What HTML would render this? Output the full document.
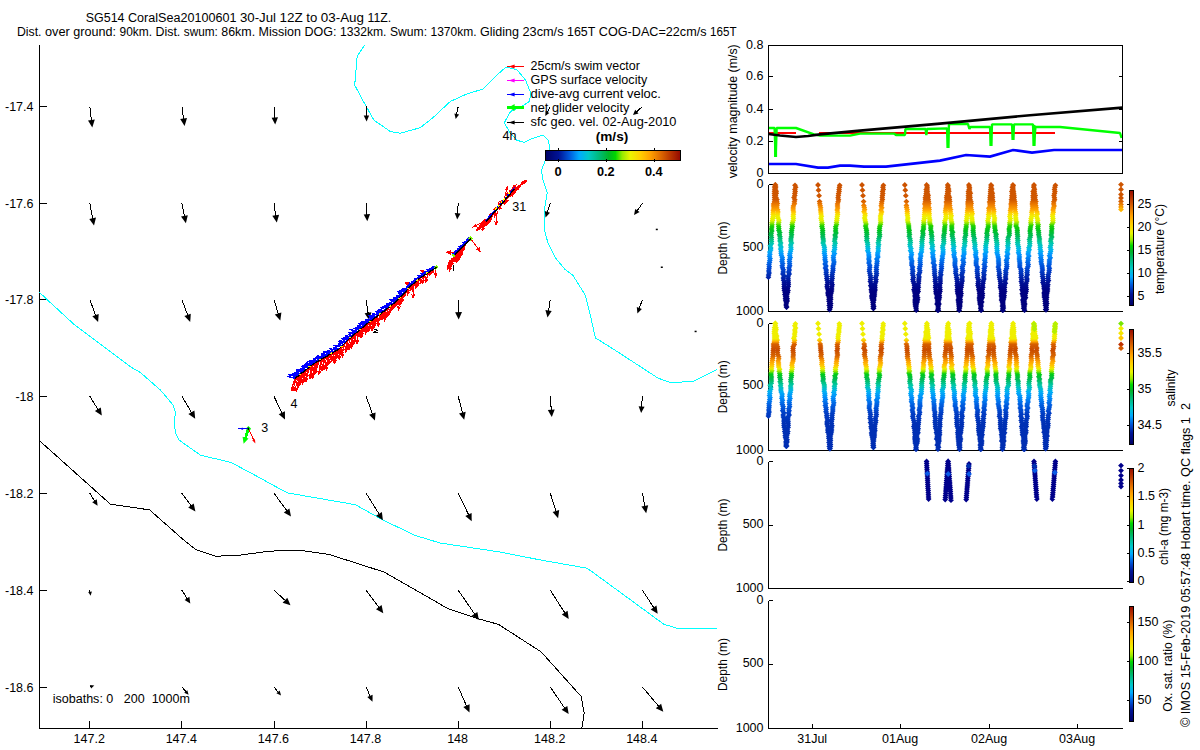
<!DOCTYPE html>
<html><head><meta charset="utf-8"><title>SG514 CoralSea20100601</title>
<style>html,body{margin:0;padding:0;background:#fff;overflow:hidden}svg{display:block;font-family:"Liberation Sans",sans-serif;font-size:12.5px;fill:#000}.ax{stroke:#000;stroke-width:1;shape-rendering:crispEdges;fill:none}.b{font-weight:bold}</style></head><body>
<svg width="1200" height="750" viewBox="0 0 1200 750">
<rect width="1200" height="750" fill="#fff"/>
<defs>
<linearGradient id="gh" x1="0" y1="0" x2="1" y2="0"><stop offset="0.0" stop-color="#000064"/><stop offset="0.1" stop-color="#001496"/><stop offset="0.18" stop-color="#005adc"/><stop offset="0.25" stop-color="#00aaff"/><stop offset="0.32" stop-color="#00c8c8"/><stop offset="0.4" stop-color="#00b978"/><stop offset="0.47" stop-color="#00b428"/><stop offset="0.52" stop-color="#00d700"/><stop offset="0.57" stop-color="#96eb00"/><stop offset="0.63" stop-color="#ebf500"/><stop offset="0.7" stop-color="#ffd200"/><stop offset="0.78" stop-color="#ffa000"/><stop offset="0.85" stop-color="#e16e00"/><stop offset="0.92" stop-color="#be3c00"/><stop offset="1.0" stop-color="#960a00"/></linearGradient>
<linearGradient id="gv" x1="0" y1="1" x2="0" y2="0"><stop offset="0.0" stop-color="#000064"/><stop offset="0.1" stop-color="#001496"/><stop offset="0.18" stop-color="#005adc"/><stop offset="0.25" stop-color="#00aaff"/><stop offset="0.32" stop-color="#00c8c8"/><stop offset="0.4" stop-color="#00b978"/><stop offset="0.47" stop-color="#00b428"/><stop offset="0.52" stop-color="#00d700"/><stop offset="0.57" stop-color="#96eb00"/><stop offset="0.63" stop-color="#ebf500"/><stop offset="0.7" stop-color="#ffd200"/><stop offset="0.78" stop-color="#ffa000"/><stop offset="0.85" stop-color="#e16e00"/><stop offset="0.92" stop-color="#be3c00"/><stop offset="1.0" stop-color="#960a00"/></linearGradient>
</defs>
<text x="85.8" y="22" textLength="38.7" lengthAdjust="spacingAndGlyphs">SG514</text>
<text x="128" y="22" textLength="108.5" lengthAdjust="spacingAndGlyphs">CoralSea20100601</text>
<text x="240" y="22" textLength="36" lengthAdjust="spacingAndGlyphs">30-Jul</text>
<text x="279.5" y="22" textLength="23.3" lengthAdjust="spacingAndGlyphs">12Z</text>
<text x="306.3" y="22" textLength="11" lengthAdjust="spacingAndGlyphs">to</text>
<text x="320.8" y="22" textLength="43.2" lengthAdjust="spacingAndGlyphs">03-Aug</text>
<text x="367.5" y="22" textLength="23.8" lengthAdjust="spacingAndGlyphs">11Z.</text>
<text x="17" y="36" textLength="24.5" lengthAdjust="spacingAndGlyphs">Dist.</text>
<text x="45" y="36" textLength="24.8" lengthAdjust="spacingAndGlyphs">over</text>
<text x="73.3" y="36" textLength="42.7" lengthAdjust="spacingAndGlyphs">ground:</text>
<text x="119.5" y="36" textLength="32.5" lengthAdjust="spacingAndGlyphs">90km.</text>
<text x="155.5" y="36" textLength="24.8" lengthAdjust="spacingAndGlyphs">Dist.</text>
<text x="183.8" y="36" textLength="34" lengthAdjust="spacingAndGlyphs">swum:</text>
<text x="221.3" y="36" textLength="33.8" lengthAdjust="spacingAndGlyphs">86km.</text>
<text x="258.6" y="36" textLength="42.4" lengthAdjust="spacingAndGlyphs">Mission</text>
<text x="304.5" y="36" textLength="32" lengthAdjust="spacingAndGlyphs">DOG:</text>
<text x="340" y="36" textLength="46.5" lengthAdjust="spacingAndGlyphs">1332km.</text>
<text x="390" y="36" textLength="37" lengthAdjust="spacingAndGlyphs">Swum:</text>
<text x="430.5" y="36" textLength="46" lengthAdjust="spacingAndGlyphs">1370km.</text>
<text x="480" y="36" textLength="39" lengthAdjust="spacingAndGlyphs">Gliding</text>
<text x="522.5" y="36" textLength="41" lengthAdjust="spacingAndGlyphs">23cm/s</text>
<text x="567" y="36" textLength="28.3" lengthAdjust="spacingAndGlyphs">165T</text>
<text x="598.8" y="36" textLength="107.7" lengthAdjust="spacingAndGlyphs">COG-DAC=22cm/s</text>
<text x="710" y="36" textLength="26.5" lengthAdjust="spacingAndGlyphs">165T</text>
<path class="ax" d="M39.5 45V728.5H717.5"/>
<path class="ax" d="M89.5 728.5v-7.5M181.5 728.5v-7.5M274.5 728.5v-7.5M366.5 728.5v-7.5M458.5 728.5v-7.5M550.5 728.5v-7.5M642.5 728.5v-7.5M39.5 106.5h7M39.5 203.5h7M39.5 299.5h7M39.5 396.5h7M39.5 493.5h7M39.5 590.5h7M39.5 687.5h7"/>
<text x="89.2" y="742.5" text-anchor="middle">147.2</text>
<text x="181.3" y="742.5" text-anchor="middle">147.4</text>
<text x="273.4" y="742.5" text-anchor="middle">147.6</text>
<text x="365.5" y="742.5" text-anchor="middle">147.8</text>
<text x="457.6" y="742.5" text-anchor="middle">148</text>
<text x="549.7" y="742.5" text-anchor="middle">148.2</text>
<text x="641.8" y="742.5" text-anchor="middle">148.4</text>
<text x="33.5" y="111" text-anchor="end">-17.4</text>
<text x="33.5" y="207.8" text-anchor="end">-17.6</text>
<text x="33.5" y="304.1" text-anchor="end">-17.8</text>
<text x="33.5" y="400.8" text-anchor="end">-18</text>
<text x="33.5" y="497.7" text-anchor="end">-18.2</text>
<text x="33.5" y="594.7" text-anchor="end">-18.4</text>
<text x="33.5" y="691.5" text-anchor="end">-18.6</text>
<polyline fill="none" stroke="#00ffff" stroke-width="1" shape-rendering="crispEdges" points="364.7,45 357.2,56.3 354.7,85.1 362.7,100.2 374,120.2 390.3,131.5 400.3,133.2 420.3,127.7 432.9,117.7 450.4,101.4 465.4,94.6 483,88.9 495.5,76.3 506,67.1 516.8,69.6 525.6,80.1 531.1,93.9 529.3,101.4 520.6,107.2 510.6,111.4 504.3,122.7 510,132.7 516.8,140.3 524.3,142.3 533.1,138.2 543.1,135.2 548.1,140.3 549.9,147.8 544.4,162.8 541.4,170.3 543.1,180.4 547.3,192.5 544,212.6 544,227.6 547.8,242.7 555.3,257.7 565.3,269.7 572.8,275.2 585.4,295.3 590.4,315.3 595.4,337.9 615.4,350.4 658,378.1 670.6,382.6 693.1,381.4 717,369.6"/>
<polyline fill="none" stroke="#00ffff" stroke-width="1" shape-rendering="crispEdges" points="39.5,292.3 46.4,299 75.2,325.4 105.3,347.9 131.6,367.5 140.4,372.5 160.4,390 173,405 175.4,412.6 174.2,422.7 175.4,432.7 179.2,440.2 200.5,455.2 230.6,462.3 250.6,472.8 275.7,486.6 287.6,492.9 355.3,504.7 383,520 414.8,535.3 440,543 454.7,545.2 501.3,552.2 540,559.9 587.2,568.2 617.9,590.6 663.9,624.3 679.3,628.9 717,628.9"/>
<polyline fill="none" stroke="#000" stroke-width="1" shape-rendering="crispEdges" points="39.5,440.7 110.3,504.1 149.6,509.9 183.7,540 196,549.8 215.7,556.2 238,555.4 269,551.2 298.3,550 329,554.4 384.2,572.1 448.6,609 478.3,618.8 498.3,624.3 541.2,651.9 581.1,696.4 584.2,713.3 581.7,728.5"/>
<rect x="655.8" y="228.7" width="2" height="1.5" fill="#000"/>
<rect x="660.8" y="266.5" width="2" height="1.5" fill="#000"/>
<rect x="694.6" y="330.7" width="2" height="1.5" fill="#000"/>
<g id="quiver"><path d="M89.8 106.5L91.5 121" stroke="#000" stroke-width="1" fill="none" shape-rendering="crispEdges"/><path d="M92.3 127.5L88 120.5L94.8 119.6Z" fill="#000" shape-rendering="auto"/><path d="M181.9 106.5L183.7 119.6" stroke="#000" stroke-width="1" fill="none" shape-rendering="crispEdges"/><path d="M184.6 126L180.2 119.1L187 118.1Z" fill="#000" shape-rendering="auto"/><path d="M274 106.5L274.8 118.6" stroke="#000" stroke-width="1" fill="none" shape-rendering="crispEdges"/><path d="M275.2 124.5L271.6 117.8L278 117.3Z" fill="#000" shape-rendering="auto"/><path d="M366.1 106.5L366.4 116.5" stroke="#000" stroke-width="1" fill="none" shape-rendering="crispEdges"/><path d="M366.6 121.5L363.7 115.6L369.1 115.5Z" fill="#000" shape-rendering="auto"/><path d="M458.2 106.5L456.5 114.9" stroke="#000" stroke-width="1" fill="none" shape-rendering="crispEdges"/><path d="M455.7 119L454.4 113.4L459.1 114.4Z" fill="#000" shape-rendering="auto"/><path d="M550.3 106.5L546.9 112.9" stroke="#000" stroke-width="1" fill="none" shape-rendering="crispEdges"/><path d="M545.3 116.1L545.5 111.1L549.3 113Z" fill="#000" shape-rendering="auto"/><path d="M642.4 106.5L636.1 112.3" stroke="#000" stroke-width="1" fill="none" shape-rendering="crispEdges"/><path d="M633 115.1L635.2 109.8L638.5 113.4Z" fill="#000" shape-rendering="auto"/><path d="M89.8 203.3L92.8 219.2" stroke="#000" stroke-width="1" fill="none" shape-rendering="crispEdges"/><path d="M94 225.6L89.3 218.9L96 217.6Z" fill="#000" shape-rendering="auto"/><path d="M181.9 203.3L184.6 216.9" stroke="#000" stroke-width="1" fill="none" shape-rendering="crispEdges"/><path d="M185.9 223.3L181 216.6L187.8 215.3Z" fill="#000" shape-rendering="auto"/><path d="M274 203.3L275.8 216.2" stroke="#000" stroke-width="1" fill="none" shape-rendering="crispEdges"/><path d="M276.8 222.6L272.3 215.7L279.1 214.8Z" fill="#000" shape-rendering="auto"/><path d="M366.1 203.3L366.9 215.4" stroke="#000" stroke-width="1" fill="none" shape-rendering="crispEdges"/><path d="M367.3 221.3L363.7 214.6L370.1 214.1Z" fill="#000" shape-rendering="auto"/><path d="M458.2 203.3L457.5 214.2" stroke="#000" stroke-width="1" fill="none" shape-rendering="crispEdges"/><path d="M457.2 219.6L454.7 213L460.5 213.4Z" fill="#000" shape-rendering="auto"/><path d="M550.3 203.3L547.1 212.9" stroke="#000" stroke-width="1" fill="none" shape-rendering="crispEdges"/><path d="M545.5 217.6L544.8 211.1L550 212.8Z" fill="#000" shape-rendering="auto"/><path d="M642.4 203.3L636.8 211.2" stroke="#000" stroke-width="1" fill="none" shape-rendering="crispEdges"/><path d="M634.1 215.1L635.2 208.9L639.6 211.9Z" fill="#000" shape-rendering="auto"/><path d="M89.8 299.6L95.9 316" stroke="#000" stroke-width="1" fill="none" shape-rendering="crispEdges"/><path d="M98.1 322.1L92.3 316.3L98.7 313.9Z" fill="#000" shape-rendering="auto"/><path d="M181.9 299.6L187.9 315.8" stroke="#000" stroke-width="1" fill="none" shape-rendering="crispEdges"/><path d="M190.2 321.9L184.4 316.1L190.8 313.7Z" fill="#000" shape-rendering="auto"/><path d="M274 299.6L278.4 314.4" stroke="#000" stroke-width="1" fill="none" shape-rendering="crispEdges"/><path d="M280.3 320.6L274.8 314.4L281.4 312.4Z" fill="#000" shape-rendering="auto"/><path d="M366.1 299.6L368.2 313.7" stroke="#000" stroke-width="1" fill="none" shape-rendering="crispEdges"/><path d="M369.1 320.1L364.6 313.2L371.4 312.2Z" fill="#000" shape-rendering="auto"/><path d="M458.2 299.6L458.5 313.1" stroke="#000" stroke-width="1" fill="none" shape-rendering="crispEdges"/><path d="M458.7 319.6L455.1 312.2L462 312Z" fill="#000" shape-rendering="auto"/><path d="M550.3 299.6L548.4 311.5" stroke="#000" stroke-width="1" fill="none" shape-rendering="crispEdges"/><path d="M547.5 317.4L545.4 310L551.7 311Z" fill="#000" shape-rendering="auto"/><path d="M642.4 299.6L639 309" stroke="#000" stroke-width="1" fill="none" shape-rendering="crispEdges"/><path d="M637.4 313.6L636.8 307.1L641.9 309Z" fill="#000" shape-rendering="auto"/><path d="M89.8 396.3L98.4 410.1" stroke="#000" stroke-width="1" fill="none" shape-rendering="crispEdges"/><path d="M101.8 415.6L94.9 411.1L100.8 407.4Z" fill="#000" shape-rendering="auto"/><path d="M181.9 396.3L191.9 413.2" stroke="#000" stroke-width="1" fill="none" shape-rendering="crispEdges"/><path d="M195.2 418.8L188.4 414.1L194.4 410.6Z" fill="#000" shape-rendering="auto"/><path d="M274 396.3L282.2 413.7" stroke="#000" stroke-width="1" fill="none" shape-rendering="crispEdges"/><path d="M285 419.6L278.7 414.3L284.9 411.3Z" fill="#000" shape-rendering="auto"/><path d="M366.1 396.3L372.7 414.5" stroke="#000" stroke-width="1" fill="none" shape-rendering="crispEdges"/><path d="M374.9 420.6L369.1 414.7L375.6 412.4Z" fill="#000" shape-rendering="auto"/><path d="M458.2 396.3L462.6 413.5" stroke="#000" stroke-width="1" fill="none" shape-rendering="crispEdges"/><path d="M464.2 419.8L459 413.4L465.7 411.7Z" fill="#000" shape-rendering="auto"/><path d="M550.3 396.3L551.3 410.6" stroke="#000" stroke-width="1" fill="none" shape-rendering="crispEdges"/><path d="M551.8 417.1L547.8 409.9L554.7 409.4Z" fill="#000" shape-rendering="auto"/><path d="M642.4 396.3L641.5 407.6" stroke="#000" stroke-width="1" fill="none" shape-rendering="crispEdges"/><path d="M641.1 413.1L638.6 406.3L644.6 406.8Z" fill="#000" shape-rendering="auto"/><path d="M89.8 493.2L95 501.6" stroke="#000" stroke-width="1" fill="none" shape-rendering="crispEdges"/><path d="M97.6 505.7L92.2 502.2L96.8 499.3Z" fill="#000" shape-rendering="auto"/><path d="M181.9 493.2L191.5 506.3" stroke="#000" stroke-width="1" fill="none" shape-rendering="crispEdges"/><path d="M195.4 511.5L188.2 507.5L193.7 503.4Z" fill="#000" shape-rendering="auto"/><path d="M274 493.2L287.2 511.2" stroke="#000" stroke-width="1" fill="none" shape-rendering="crispEdges"/><path d="M291 516.5L283.8 512.5L289.4 508.4Z" fill="#000" shape-rendering="auto"/><path d="M366.1 493.2L379.5 514.7" stroke="#000" stroke-width="1" fill="none" shape-rendering="crispEdges"/><path d="M382.9 520.2L376 515.7L381.9 512Z" fill="#000" shape-rendering="auto"/><path d="M458.2 493.2L468.9 515.3" stroke="#000" stroke-width="1" fill="none" shape-rendering="crispEdges"/><path d="M471.7 521.2L465.3 515.9L471.6 512.9Z" fill="#000" shape-rendering="auto"/><path d="M550.3 493.2L556.2 512" stroke="#000" stroke-width="1" fill="none" shape-rendering="crispEdges"/><path d="M558.1 518.2L552.6 512.1L559.2 510Z" fill="#000" shape-rendering="auto"/><path d="M642.4 493.2L645 506.8" stroke="#000" stroke-width="1" fill="none" shape-rendering="crispEdges"/><path d="M646.2 513.2L641.4 506.5L648.2 505.2Z" fill="#000" shape-rendering="auto"/><path d="M89.8 590.2L90.2 592.8" stroke="#000" stroke-width="1" fill="none" shape-rendering="crispEdges"/><path d="M90.6 595.8L88.2 592.1L91.9 591.6Z" fill="#000" shape-rendering="auto"/><path d="M181.9 590.2L187.5 599.2" stroke="#000" stroke-width="1" fill="none" shape-rendering="crispEdges"/><path d="M190.3 603.6L184.6 599.9L189.4 596.8Z" fill="#000" shape-rendering="auto"/><path d="M274 590.2L285.7 600.9" stroke="#000" stroke-width="1" fill="none" shape-rendering="crispEdges"/><path d="M290.5 605.3L282.6 602.8L287.3 597.7Z" fill="#000" shape-rendering="auto"/><path d="M366.1 590.2L379.4 608" stroke="#000" stroke-width="1" fill="none" shape-rendering="crispEdges"/><path d="M383.3 613.2L376 609.3L381.6 605.1Z" fill="#000" shape-rendering="auto"/><path d="M458.2 590.2L475.1 614.7" stroke="#000" stroke-width="1" fill="none" shape-rendering="crispEdges"/><path d="M478.8 620L471.7 615.8L477.4 611.9Z" fill="#000" shape-rendering="auto"/><path d="M550.3 590.2L565.2 613.5" stroke="#000" stroke-width="1" fill="none" shape-rendering="crispEdges"/><path d="M568.7 619L561.8 614.5L567.6 610.8Z" fill="#000" shape-rendering="auto"/><path d="M642.4 590.2L654.2 608.3" stroke="#000" stroke-width="1" fill="none" shape-rendering="crispEdges"/><path d="M657.7 613.8L650.7 609.4L656.5 605.6Z" fill="#000" shape-rendering="auto"/><path d="M89.8 687L91.5 686.4" stroke="#000" stroke-width="1" fill="none" shape-rendering="crispEdges"/><path d="M94.3 685.5L91.1 688.6L89.9 685Z" fill="#000" shape-rendering="auto"/><path d="M181.9 687L186.4 692.2" stroke="#000" stroke-width="1" fill="none" shape-rendering="crispEdges"/><path d="M188.6 694.8L184.2 692.8L187.3 690.2Z" fill="#000" shape-rendering="auto"/><path d="M274 687L278.7 692.8" stroke="#000" stroke-width="1" fill="none" shape-rendering="crispEdges"/><path d="M281 695.6L276.4 693.3L279.7 690.6Z" fill="#000" shape-rendering="auto"/><path d="M366.1 687L370.4 696.8" stroke="#000" stroke-width="1" fill="none" shape-rendering="crispEdges"/><path d="M372.5 701.7L367.3 697.1L372.6 694.8Z" fill="#000" shape-rendering="auto"/><path d="M458.2 687L466.9 706.7" stroke="#000" stroke-width="1" fill="none" shape-rendering="crispEdges"/><path d="M469.5 712.6L463.3 707.1L469.6 704.3Z" fill="#000" shape-rendering="auto"/><path d="M550.3 687L565 708.6" stroke="#000" stroke-width="1" fill="none" shape-rendering="crispEdges"/><path d="M568.7 714L561.6 709.7L567.3 705.9Z" fill="#000" shape-rendering="auto"/><path d="M642.4 687L659.1 706.8" stroke="#000" stroke-width="1" fill="none" shape-rendering="crispEdges"/><path d="M663.3 711.8L655.8 708.3L661.1 703.8Z" fill="#000" shape-rendering="auto"/></g>
<g id="track" fill="none" stroke-linecap="butt" shape-rendering="crispEdges">
<path d="M294.7 378.7L291.3 390.4M291 386.9L291.3 390.4L293.5 387.7M295.8 377.8L293.1 390.5M292.5 387.1L293.1 390.5L295 387.6M296.9 377L292.6 389.9M292.4 386.5L292.6 389.9L294.9 387.3M298 376.1L295 390.8M294.3 387.4L295 390.8L296.9 387.9M299.1 375.2L296.7 390.5M295.9 387.1L296.7 390.5L298.5 387.5M300.2 374.4L298.9 385.6M298 382.2L298.9 385.6L300.6 382.5M301.3 373.5L297.4 385M297.2 381.6L297.4 385L299.6 382.4M302.4 372.6L298.6 386.2M298.2 382.8L298.6 386.2L300.7 383.5M303.5 371.8L300.8 383M300.3 379.6L300.8 383L302.8 380.2M304.6 370.9L302.4 383.8M301.6 380.4L302.4 383.8L304.2 380.9M305.7 370L302.7 382.4M302.2 379L302.7 382.4L304.7 379.6M306.8 369.2L303.2 382.7M302.7 379.3L303.2 382.7L305.2 380M307.9 368.3L305.8 380.6M305.1 377.2L305.8 380.6L307.6 377.6M309 367.4L305.9 381.8M305.3 378.4L305.9 381.8L307.9 379M310.1 366.5L305.8 380.6M305.5 377.1L305.8 380.6L308 377.9M311.2 365.7L309.6 378.1M308.7 374.8L309.6 378.1L311.3 375.1M312.3 364.8L309.7 377.9M309.1 374.5L309.7 377.9L311.6 375M313.4 364L310.5 377.9M309.9 374.5L310.5 377.9L312.4 375.1M314.6 363.3L312.3 378.7M311.5 375.4L312.3 378.7L314 375.8M315.8 362.6L312.6 376.6M312.1 373.2L312.6 376.6L314.6 373.7M317 361.8L313.2 373.4M312.9 369.9L313.2 373.4L315.4 370.8M318.2 361.1L314.2 373.3M314 369.8L314.2 373.3L316.5 370.6M319.4 360.4L315.3 373.5M315 370L315.3 373.5L317.5 370.8M320.7 359.7L318.9 374.6M318 371.3L318.9 374.6L320.5 371.6M321.9 359L318.6 374M318 370.6L318.6 374L320.6 371.2M323.1 358.3L319.2 370.4M319 366.9L319.2 370.4L321.4 367.7M324.3 357.6L321.8 369.8M321.1 366.4L321.8 369.8L323.7 367M325.5 356.9L322.3 370.5M321.8 367.1L322.3 370.5L324.3 367.7M326.7 356.2L324 370M323.3 366.6L324 370L325.9 367.1M327.9 355.5L326.4 370M325.4 366.7L326.4 370L328 367M329.1 354.8L326 367.6M325.5 364.2L326 367.6L328 364.8M330.3 354.1L326.1 365.4M326 362L326.1 365.4L328.5 362.9M331.6 353.4L328.2 364.7M327.9 361.2L328.2 364.7L330.4 362M332.8 352.7L328.9 363.2M328.8 359.8L328.9 363.2L331.2 360.7M334 352L331.7 361.3M331.2 357.9L331.7 361.3L333.8 358.5M335.2 351.3L332.2 360.5M331.9 357.1L332.2 360.5L334.4 357.9M336.4 350.6L333.7 361.8M333.2 358.4L333.7 361.8L335.7 359M337.6 349.9L334.5 359.9M334.2 356.4L334.5 359.9L336.7 357.2M338.8 349.2L334.7 362.9M334.4 359.5L334.7 362.9L336.8 360.2M339.8 348.2L337.3 356.9M337 353.4L337.3 356.9L339.5 354.1M340.8 347.2L339.3 359.5M338.4 356.2L339.3 359.5L341 356.5M341.8 346.2L338.1 359M337.7 355.5L338.1 359L340.2 356.3M342.8 345.2L339.6 355M339.4 351.5L339.6 355L341.8 352.3M343.8 344.2L342.3 357.2M341.4 353.9L342.3 357.2L343.9 354.1M344.7 343.3L341.3 354.6M341 351.2L341.3 354.6L343.4 351.9M345.7 342.3L341.6 352.3M341.6 348.9L341.6 352.3L344 349.8M346.7 341.3L345.6 352.2M344.6 348.9L345.6 352.2L347.2 349.2M347.7 340.3L346.6 350.8M345.6 347.5L346.6 350.8L348.2 347.8M348.7 339.3L345.1 348.9M345 345.5L345.1 348.9L347.5 346.4M349.7 338.3L348.2 349.5M347.4 346.1L348.2 349.5L349.9 346.5M350.8 337.4L346.9 349.6M346.6 346.1L346.9 349.6L349.1 346.9M351.9 336.5L350.1 347.7M349.3 344.3L350.1 347.7L351.9 344.7M352.9 335.6L349.8 348.5M349.3 345.1L349.8 348.5L351.8 345.7M354 334.7L351.1 348.4M350.5 345L351.1 348.4L353 345.6M355.1 333.8L351.3 343.2M351.3 339.7L351.3 343.2L353.7 340.7M356.1 332.9L352.4 346M352 342.5L352.4 346L354.5 343.2M357.2 332L354.1 343.5M353.7 340.1L354.1 343.5L356.2 340.8M358.3 331.1L357.2 343.2M356.2 339.9L357.2 343.2L358.8 340.1M359.3 330.2L356.5 343.5M355.9 340.1L356.5 343.5L358.5 340.6M360.4 329.3L357.2 336.7M357.3 333.3L357.2 336.7L359.7 334.3M361.5 328.4L358.3 336.6M358.3 333.2L358.3 336.6L360.7 334.1M362.6 327.5L359.7 336M359.5 332.5L359.7 336L361.9 333.4M363.6 326.6L361 338.1M360.4 334.7L361 338.1L363 335.2M364.7 325.7L362.4 331.3M362.4 327.9L362.4 331.3L364.8 328.9M365.8 324.8L361.8 335.5M361.7 332L361.8 335.5L364.1 332.9M366.8 323.9L365.2 333M364.5 329.6L365.2 333L367 330.1M368 323.1L365.7 333.7M365.1 330.3L365.7 333.7L367.7 330.8M369.1 322.2L365.9 329.5M366 326.1L365.9 329.5L368.4 327.1M370.2 321.4L368 331.8M367.4 328.5L368 331.8L370 329M371.4 320.6L369.3 329.4M368.8 326L369.3 329.4L371.3 326.5M372.5 319.8L369.9 328.7M369.6 325.3L369.9 328.7L372.1 326M373.6 318.9L371.9 330.1M371.1 326.8L371.9 330.1L373.6 327.2M374.7 318.1L372.5 329.7M371.9 326.3L372.5 329.7L374.4 326.8M375.9 317.3L372.3 325.6M372.3 322.2L372.3 325.6L374.7 323.2M377 316.4L373.2 326.3M373.2 322.8L373.2 326.3L375.6 323.8M378.1 315.6L374.6 325.8M374.4 322.3L374.6 325.8L376.9 323.2M379.3 314.8L378.1 326.6M377.1 323.3L378.1 326.6L379.7 323.5M380.4 314L377.7 322.6M377.4 319.2L377.7 322.6L379.9 320M381.5 313.1L378 321.4M378.1 318L378 321.4L380.5 319M382.6 312.2L379.2 319.8M379.3 316.4L379.2 319.8L381.7 317.4M383.7 311.4L381.4 319M381.1 315.5L381.4 319L383.6 316.3M384.8 310.5L382.8 318.6M382.3 315.2L382.8 318.6L384.8 315.8M385.9 309.6L384.6 321M383.6 317.6L384.6 321L386.2 317.9M387 308.8L382.7 318.7M382.8 315.3L382.7 318.7L385.1 316.3M388.1 307.9L385.3 318.8M384.8 315.4L385.3 318.8L387.4 316M389.2 307.1L385.3 318M385.2 314.5L385.3 318L387.6 315.4M390.3 306.2L386.2 311.1M387.2 307.8L386.2 311.1L389.2 309.5M391.4 305.3L387.2 316.4M387.1 312.9L387.2 316.4L389.6 313.9M392.5 304.5L388.3 315M388.3 311.5L388.3 315L390.7 312.5M393.6 303.6L390.9 310.5M390.9 307L390.9 310.5L393.3 308M394.7 302.7L391.3 308.1M391.9 304.7L391.3 308.1L394.1 306.1M395.8 301.9L391.8 307.5M392.6 304.1L391.8 307.5L394.7 305.7M396.9 301L393.7 307.6M393.9 304.2L393.7 307.6L396.2 305.3M397.9 300L395.4 305.8M395.5 302.3L395.4 305.8L397.9 303.4M398.9 299L395.4 303.6M396.3 300.3L395.4 303.6L398.3 301.8M399.8 298L396.1 305.8M396.3 302.3L396.1 305.8L398.6 303.5M400.7 296.9L399.5 304.4M398.7 301.1L399.5 304.4L401.3 301.5M401.7 295.9L398.8 303.9M398.6 300.5L398.8 303.9L401.1 301.4M402.6 294.9L399.5 305.2M399.2 301.7L399.5 305.2L401.7 302.5M403.6 293.8L400.7 300.8M400.7 297.3L400.7 300.8L403.1 298.3M404.5 292.8L400.3 302.5M400.4 299L400.3 302.5L402.8 300.1M405.5 291.8L401.3 302.1M401.3 298.7L401.3 302.1L403.7 299.7M406.4 290.7L403 296.9M403.4 293.5L403 296.9L405.7 294.7M407.3 289.7L403.5 297.3M403.8 293.9L403.5 297.3L406.1 295M408.3 288.6L407.6 295M406.7 291.7L407.6 295L409.3 291.9M409.2 287.6L404.9 292.6M406 289.3L404.9 292.6L408 291M410.2 286.6L406.8 292.6M407.2 289.2L406.8 292.6L409.5 290.4M411.2 285.6L405.2 289.9M407 287L405.2 289.9L408.5 289.1M412.2 284.7L406.5 287.3M408.8 284.8L406.5 287.3L409.9 287.2M413.3 283.8L410.5 290M410.6 286.5L410.5 290L413 287.6M414.4 282.9L412.3 291.5M411.8 288.1L412.3 291.5L414.3 288.7M415.4 281.9L414.8 285.5M413.9 283.2L414.8 285.5L416.5 283.6M416.5 281L410.7 289.4M411.5 286L410.7 289.4L413.6 287.5M417.5 280.1L415.6 288.3M415.1 284.9L415.6 288.3L417.6 285.5M418.6 279.2L415.4 287.5M415.3 284.1L415.4 287.5L417.7 285M419.7 278.3L416.9 287M416.6 283.6L416.9 287L419.1 284.4M420.8 277.5L416.1 280.2M418.2 277.5L416.1 280.2L419.5 279.7M422 276.7L416.6 285.1M417.2 281.7L416.6 285.1L419.4 283.1M423.2 276L420.6 283.2M420.4 279.8L420.6 283.2L422.9 280.7M424.3 275.2L422.7 283M422.1 279.6L422.7 283L424.7 280.1M425.5 274.5L423.1 277.4M423.6 274.8L423.1 277.4L425.6 276.5M426.7 273.7L421.1 278.1M422.8 275.1L421.1 278.1L424.4 277.1M427.9 273L425.9 282.3M425.3 278.9L425.9 282.3L427.9 279.4M429.1 272.2L425.7 279.5M425.8 276L425.7 279.5L428.2 277.1M430.2 271.4L427.8 274.5M428.2 271.8L427.8 274.5L430.3 273.5M431.4 270.7L429.5 275.3M429.4 272L429.5 275.3L431.8 273M432.6 269.9L426.9 274.3M428.7 271.3L426.9 274.3L430.2 273.4M433.8 269.2L431.5 273.7M431.7 270.4L431.5 273.7L434 271.6M434.9 268.4L431.5 271.8M432.7 268.8L431.5 271.8L434.5 270.7M436.1 267.7L435.5 276.7M434.4 273.4L435.5 276.7L437 273.6M414 287L413 298M411.8 293.9L413 298L415 294.2M411 284L405 283M408.9 282L405 283L408.3 285.2M426 272L421 270.5M424.5 269.9L421 270.5L423.5 272.9M400 299L398.5 310M397.5 305.8L398.5 310L400.6 306.3M454.7 254.7L449.8 270.5M449.5 267L449.8 270.5L452 267.8M455.3 254.1L447.5 269.6M447.8 266.1L447.5 269.6L450.1 267.3M456 253.4L447.8 265.9M448.5 262.5L447.8 265.9L450.7 263.9M456.6 252.8L452 265M451.9 261.5L452 265L454.3 262.5M457.2 252.2L449.7 267M450 263.5L449.7 267L452.3 264.7M457.9 251.5L449.3 263.4M450.1 260L449.3 263.4L452.2 261.5M458.5 250.9L450.7 261.6M451.5 258.2L450.7 261.6L453.6 259.8M459.2 250.2L450.7 263.7M451.3 260.3L450.7 263.7L453.5 261.6M459.8 249.6L456.1 262.6M455.7 259.2L456.1 262.6L458.2 259.9M460.4 249L454 259.6M454.5 256.2L454 259.6L456.8 257.6M461.1 248.3L454.7 259.1M455.2 255.7L454.7 259.1L457.4 257M461.7 247.7L454.1 261.2M454.5 257.8L454.1 261.2L456.8 259.1M462.3 247.1L455.5 256.5M456.4 253.1L455.5 256.5L458.5 254.6M463 246.4L456.9 260.6M457 257.1L456.9 260.6L459.3 258.1M463.6 245.8L458.9 259.5M458.7 256.1L458.9 259.5L461.2 256.9M464.2 245.2L460 252.7M460.5 249.3L460 252.7L462.7 250.5M464.9 244.5L460.9 256.1M460.7 252.7L460.9 256.1L463.2 253.5M465.5 243.9L462.5 251.7M462.4 248.3L462.5 251.7L464.9 249.2M466.2 243.2L460.1 255.3M460.4 251.8L460.1 255.3L462.7 253M466.8 242.6L462.6 251.4M462.8 248L462.6 251.4L465.1 249.1M470.7 238.7L480 251.3M476.3 249.1L480 251.3L479 247.1M455.5 252.7L447 252.4M451.1 250.8L447 252.4L450.9 254.2M457 253L448 251.5M451.4 250.7L448 251.5L450.9 253.3M486 222L482.4 225M483.7 222.2L482.4 225L485.4 224.2M486.5 221.4L476.3 230.6M477.8 227.5L476.3 230.6L479.5 229.4M487 220.8L482.1 228.5M482.8 225.1L482.1 228.5L484.9 226.5M487.6 220.2L478.4 229M479.8 225.8L478.4 229L481.6 227.7M488.1 219.6L482.9 224M484.5 220.9L482.9 224L486.2 222.9M488.6 219L483.5 225.1M484.6 221.8L483.5 225.1L486.6 223.5M489.1 218.4L482.3 230.3M482.7 226.9L482.3 230.3L485 228.2M489.7 217.8L479.6 225.8M481.2 222.8L479.6 225.8L482.9 224.9M490.2 217.2L488.7 221.6M488.4 218.5L488.7 221.6L490.8 219.3M490.7 216.5L482.5 226.6M483.5 223.3L482.5 226.6L485.5 224.9M491.2 215.9L482.9 221.8M484.8 218.9L482.9 221.8L486.3 221M491.7 215.3L488.9 223.3M488.7 219.9L488.9 223.3L491.2 220.7M492.3 214.7L486.3 225.7M486.7 222.3L486.3 225.7L488.9 223.5M492.8 214.1L483.1 223.8M484.4 220.7L483.1 223.8L486.3 222.5M493.3 213.5L488.8 216.3M490.8 213.5L488.8 216.3L492.2 215.7M493.8 212.9L489 220.9M489.6 217.5L489 220.9L491.8 218.9M494.4 212.3L487 223.7M487.6 220.3L487 223.7L489.8 221.7M494.9 211.7L489.6 221M490.1 217.6L489.6 221L492.3 218.8M495.4 211.1L490.4 218.1M491.2 214.7L490.4 218.1L493.3 216.3M495.9 210.5L494.7 215.2M494.2 212.1L494.7 215.2L496.7 212.7M496.4 209.9L494.6 216.6M494.2 213.2L494.6 216.6L496.7 213.9M497 209.3L489.6 216.7M490.9 213.6L489.6 216.7L492.8 215.4M497.5 208.7L493.8 211.4M495.2 208.7L493.8 211.4L496.8 210.8M498 208.1L501 208.5M499 209.5L501 208.5L499.4 207M498.5 207.5L493.7 209.4M496.1 207L493.7 209.4L497.1 209.4M499.1 206.9L500.5 207.7M499 208.3L500.5 207.7L500.3 206.1M499.6 206.2L497.8 206.5M498.7 205L497.8 206.5L499 207.6M500.1 205.6L498.7 202.8M500.7 203.9L498.7 202.8L498.4 205.1M500.6 205L499.6 207.3M499 205.4L499.6 207.3L501.4 206.5M501.1 204.4L506.4 201.7M504.1 204.3L506.4 201.7L502.9 202M501.7 203.8L505.3 200.9M503.9 203.6L505.3 200.9L502.3 201.6M502.2 203.2L499.3 205M500.4 202.8L499.3 205L501.7 205M502.7 202.6L508.3 200.1M505.9 202.6L508.3 200.1L504.9 200.2M503.2 202L499.6 201.9M501.8 200.7L499.6 201.9L501.7 203.3M503.8 201.4L505.6 203M503.6 203L505.6 203L505.3 201.1M504.3 200.8L502.9 200.9M503.6 199.5L502.9 200.9L503.9 202.1M504.8 200.2L513.7 193.8M511.9 196.7L513.7 193.8L510.3 194.6M505.3 199.6L507.3 193M507.6 196.5L507.3 193L505.1 195.7M505.8 199L510.3 193.1M509.4 196.4L510.3 193.1L507.3 194.8M506.4 198.4L512.1 189M511.5 192.4L512.1 189L509.3 191.1M506.9 197.8L515.8 189.6M514.3 192.8L515.8 189.6L512.5 190.8M507.4 197.2L512 189.2M511.5 192.6L512 189.2L509.3 191.3M507.9 196.5L516 185.4M515.2 188.8L516 185.4L513.1 187.3M508.5 195.9L515.2 185.7M514.5 189L515.2 185.7L512.4 187.6M509 195.3L514.2 191.7M512.3 194.6L514.2 191.7L510.9 192.4M509.5 194.7L516.1 191.2M513.9 193.9L516.1 191.2L512.7 191.6M510 194.1L514.4 186.1M514 189.6L514.4 186.1L511.8 188.3M510.5 193.5L514.2 188.5M513.4 191.8L514.2 188.5L511.3 190.3M511.1 192.9L520.1 186.6M518.2 189.5L520.1 186.6L516.7 187.4M511.6 192.3L514.7 187.8M514 191.1L514.7 187.8L511.8 189.7M512.1 191.7L518.3 188.9M515.9 191.4L518.3 188.9L514.8 189.1M512.6 191.1L514.1 185.2M514.6 188.7L514.1 185.2L512.1 188M513.2 190.5L515.7 186.6M515.3 189.6L515.7 186.6L513.1 188.2M513.7 189.9L523.9 181.6M522.2 184.6L523.9 181.6L520.6 182.6M514.2 189.3L523.9 182.7M521.9 185.5L523.9 182.7L520.5 183.4M497.3 210.7L496 225.3M494.7 221.2L496 225.3L498 221.5M512 192L526.7 180.3M524.5 184L526.7 180.3L522.6 181.6M488 220L473 227M475.9 223.9L473 227L477.3 226.8M503 203L507.5 187M507.9 190.2L507.5 187L505.4 189.5" stroke="#ff0000" stroke-width="1"/>
<path d="M294.7 378.7L289 376.6M291.4 376.4L289 376.6L290.7 378.3M295.8 377.8L288.3 376.6M290.6 376L288.3 376.6L290.3 378M296.9 377L289.4 374.9M291.8 374.6L289.4 374.9L291.3 376.5M298 376.1L290.7 374.3M293 373.9L290.7 374.3L292.6 375.8M299.1 375.2L293.1 373.8M295.5 373.4L293.1 373.8L295 375.3M300.2 374.4L295.1 372.7M297.5 372.4L295.1 372.7L296.9 374.4M301.3 373.5L294.5 372.9M296.8 372.1L294.5 372.9L296.6 374.1M302.4 372.6L296.6 371.2M299 370.7L296.6 371.2L298.5 372.7M303.5 371.8L296 370M298.3 369.5L296 370L297.9 371.4M304.6 370.9L297.8 369.9M300.2 369.2L297.8 369.9L299.9 371.2M305.7 370L300.4 369.2M302.7 368.6L300.4 369.2L302.4 370.5M306.8 369.2L300.7 368.7M302.9 367.9L300.7 368.7L302.8 369.9M307.9 368.3L303.1 366.3M305.5 366.2L303.1 366.3L304.8 368.1M309 367.4L301.7 366.2M304.1 365.6L301.7 366.2L303.7 367.5M310.1 366.5L304.7 365.5M307 364.9L304.7 365.5L306.6 366.9M311.2 365.7L305.6 364.7M307.9 364.1L305.6 364.7L307.5 366M312.3 364.8L307.1 364.5M309.3 363.6L307.1 364.5L309.2 365.6M313.4 364L305.9 363.2M308.2 362.4L305.9 363.2L307.9 364.4M314.6 363.3L309.4 361.6M311.8 361.3L309.4 361.6L311.2 363.2M315.8 362.6L308.2 361.3M310.5 360.7L308.2 361.3L310.2 362.6M317 361.8L309.5 361.2M311.8 360.4L309.5 361.2L311.6 362.4M318.2 361.1L311.7 360.7M314 359.8L311.7 360.7L313.8 361.8M319.4 360.4L313.4 360M315.7 359.2L313.4 360L315.5 361.2M320.7 359.7L313.8 358.4M316.1 357.8L313.8 358.4L315.7 359.8M321.9 359L317 357.1M319.4 357L317 357.1L318.7 358.9M323.1 358.3L316.1 357.1M318.4 356.5L316.1 357.1L318.1 358.5M324.3 357.6L316.6 356.3M318.9 355.7L316.6 356.3L318.6 357.6M325.5 356.9L320.7 356.1M323 355.5L320.7 356.1L322.7 357.5M326.7 356.2L321 354.1M323.4 354L321 354.1L322.8 355.8M327.9 355.5L322.8 354.9M325.1 354.2L322.8 354.9L324.9 356.2M329.1 354.8L321.7 353.9M324.1 353.2L321.7 353.9L323.8 355.2M330.3 354.1L323.3 352.3M325.7 351.9L323.3 352.3L325.1 353.8M331.6 353.4L323.9 351.5M326.2 351.1L323.9 351.5L325.8 353M332.8 352.7L325.8 352.3M328.1 351.4L325.8 352.3L328 353.4M334 352L327.7 350.5M330.1 350.1L327.7 350.5L329.6 352M335.2 351.3L330.7 351.1M333 350.2L330.7 351.1L332.9 352.2M336.4 350.6L329.7 348.6M332.1 348.3L329.7 348.6L331.5 350.2M337.6 349.9L333.1 348.1M335.5 348L333.1 348.1L334.7 349.8M338.8 349.2L333.4 347.3M335.8 347.1L333.4 347.3L335.1 349M339.8 348.2L334.4 348M336.6 347.1L334.4 348L336.5 349.1M340.8 347.2L334.6 345.8M336.9 345.3L334.6 345.8L336.5 347.2M341.8 346.2L336.4 345.6M338.7 344.9L336.4 345.6L338.4 346.8M342.8 345.2L338.2 345M340.4 344.1L338.2 345L340.3 346.1M343.8 344.2L339.2 343.5M341.5 342.9L339.2 343.5L341.2 344.9M344.7 343.3L338.8 341.1M341.2 340.9L338.8 341.1L340.5 342.8M345.7 342.3L339.5 341.5M341.8 340.7L339.5 341.5L341.6 342.7M346.7 341.3L342.5 341.1M344.8 340.2L342.5 341.1L344.7 342.2M347.7 340.3L341.4 338.5M343.8 338.2L341.4 338.5L343.2 340.1M348.7 339.3L343.6 338.9M345.8 338.1L343.6 338.9L345.7 340.1M349.7 338.3L344.7 337.7M347 337L344.7 337.7L346.7 339M350.8 337.4L346.5 336.8M348.8 336.1L346.5 336.8L348.6 338.1M351.9 336.5L345.4 335.9M347.7 335.1L345.4 335.9L347.5 337.1M352.9 335.6L348.8 334.2M351.3 334L348.8 334.2L350.6 335.9M354 334.7L349.2 332.9M351.6 332.7L349.2 332.9L350.9 334.6M355.1 333.8L350.8 333.2M353.1 332.5L350.8 333.2L352.8 334.5M356.1 332.9L352.1 332M354.4 331.5L352.1 332L354 333.5M357.2 332L350.6 329.8M353 329.6L350.6 329.8L352.4 331.5M358.3 331.1L352.9 330.8M355.1 329.9L352.9 330.8L355 331.9M359.3 330.2L354.8 328.4M357.2 328.3L354.8 328.4L356.5 330.2M360.4 329.3L354.1 328.3M356.5 327.6L354.1 328.3L356.1 329.6M361.5 328.4L354.9 328M357.1 327.2L354.9 328L357 329.1M362.6 327.5L357.3 327.1M359.6 326.3L357.3 327.1L359.4 328.3M363.6 326.6L358.1 325.5M360.5 324.9L358.1 325.5L360.1 326.9M364.7 325.7L359 323.9M361.4 323.6L359 323.9L360.8 325.5M365.8 324.8L359.3 323.5M361.6 323L359.3 323.5L361.3 324.9M366.8 323.9L360.8 322.7M363.2 322.2L360.8 322.7L362.8 324.1M368 323.1L361.3 322M363.6 321.4L361.3 322L363.3 323.3M369.1 322.2L364.4 321.1M366.8 320.6L364.4 321.1L366.3 322.6M370.2 321.4L366 320.1M368.4 319.8L366 320.1L367.8 321.7M371.4 320.6L365.9 319.8M368.2 319.1L365.9 319.8L367.9 321.1M372.5 319.8L366.9 319.4M369.2 318.6L366.9 319.4L369.1 320.6M373.6 318.9L369.4 317.2M371.9 317.1L369.4 317.2L371.1 319M374.7 318.1L370.3 316.2M372.7 316.1L370.3 316.2L371.9 318M375.9 317.3L369.1 315.5M371.5 315.1L369.1 315.5L371 317.1M377 316.4L372.4 316M374.6 315.2L372.4 316L374.5 317.2M378.1 315.6L373.1 313.7M375.5 313.5L373.1 313.7L374.8 315.4M379.3 314.8L372.9 314.5M375.2 313.6L372.9 314.5L375.1 315.6M380.4 314L376.4 313.4M378.7 312.7L376.4 313.4L378.4 314.7M381.5 313.1L376 311.6M378.4 311.2L376 311.6L377.9 313.1M382.6 312.2L377.8 310.1M380.2 310.1L377.8 310.1L379.4 311.9M383.7 311.4L378.3 309.5M380.7 309.3L378.3 309.5L380 311.2M384.8 310.5L379.5 310M381.8 309.2L379.5 310L381.6 311.2M385.9 309.6L380.7 307.7M383.1 307.5L380.7 307.7L382.4 309.4M387 308.8L382.3 306.5M384.7 306.6L382.3 306.5L383.9 308.4M388.1 307.9L385.1 305.9M387.4 306.3L385.1 305.9L386.3 308M389.2 307.1L385.4 306M387.8 305.6L385.4 306L387.3 307.5M390.3 306.2L386.9 304.5M389.3 304.6L386.9 304.5L388.4 306.4M391.4 305.3L387.8 304.4M390.2 304L387.8 304.4L389.7 305.9M392.5 304.5L387.2 303.7M389.5 303L387.2 303.7L389.2 305M393.6 303.6L389.8 302.9M392.1 302.3L389.8 302.9L391.8 304.3M394.7 302.7L390.8 300.7M393.2 300.8L390.8 300.7L392.3 302.6M395.8 301.9L390.5 299.8M392.9 299.6L390.5 299.8L392.1 301.5M396.9 301L393.7 299.1M396.1 299.3L393.7 299.1L395.1 301.1M397.9 300L393.5 297.6M395.9 297.8L393.5 297.6L394.9 299.5M398.9 299L395.6 297.6M397.9 297.5L395.6 297.6L397.1 299.4M399.8 298L397.1 295.7M399.4 296.3L397.1 295.7L398.1 297.8M400.7 296.9L396.7 296.1M399.1 295.6L396.7 296.1L398.7 297.5M401.7 295.9L398.2 295.4M400.5 294.7L398.2 295.4L400.2 296.7M402.6 294.9L399.2 293.6M401.6 293.4L399.2 293.6L400.9 295.3M403.6 293.8L398.2 291.6M400.7 291.5L398.2 291.6L399.9 293.4M404.5 292.8L399.8 290.6M402.2 290.6L399.8 290.6L401.4 292.4M405.5 291.8L402.6 290.6M404.7 290.4L402.6 290.6L403.9 292.2M406.4 290.7L401.8 289.1M404.2 288.9L401.8 289.1L403.5 290.8M407.3 289.7L402.6 289.1M404.9 288.4L402.6 289.1L404.7 290.4M408.3 288.6L405.6 288.1M407.4 287.4L405.6 288.1L407 289.4M409.2 287.6L406 286.1M408.4 286.1L406 286.1L407.5 287.9M410.2 286.6L407.4 285.3M409.5 285.2L407.4 285.3L408.6 287M411.2 285.6L408.1 284.1M410.4 284.1L408.1 284.1L409.5 285.9M412.2 284.7L409.6 283M411.7 283.2L409.6 283L410.6 284.8M413.3 283.8L411.6 282.7M413.1 282.5L411.6 282.7L412.1 284.2M414.4 282.9L411.9 281.3M413.9 281.4L411.9 281.3L412.8 283.1M415.4 281.9L413.7 280.9M415.2 280.7L413.7 280.9L414.2 282.4M416.5 281L415.1 279.9M416.5 279.8L415.1 279.9L415.3 281.4M417.5 280.1L414.6 278.9M416.8 278.7L414.6 278.9L416 280.5M418.6 279.2L417 278.4M418.4 278L417 278.4L417.5 279.8M419.7 278.3L417.8 277.3M419.4 277L417.8 277.3L418.5 278.8M420.8 277.5L417.9 276M420.1 276L417.9 276L419.2 277.8M422 276.7L419.9 275.6M421.6 275.4L419.9 275.6L420.7 277.2M423.2 276L420.9 273.9M423 274.4L420.9 273.9L421.6 275.9M424.3 275.2L422.1 274M424 273.9L422.1 274L423 275.6M425.5 274.5L423.8 272.8M425.5 273.1L423.8 272.8L424.1 274.5M426.7 273.7L425 271.9M426.7 272.3L425 271.9L425.3 273.7M427.9 273L425.7 271.5M427.5 271.5L425.7 271.5L426.4 273.2M429.1 272.2L427.4 271.1M428.9 270.9L427.4 271.1L427.8 272.6M430.2 271.4L427.3 269.8M429.6 269.9L427.3 269.8L428.6 271.6M431.4 270.7L429.3 268.6M431.3 269.2L429.3 268.6L429.9 270.6M432.6 269.9L430.7 268.9M432.3 268.7L430.7 268.9L431.4 270.4M433.8 269.2L431.6 267.8M433.4 267.8L431.6 267.8L432.4 269.5M434.9 268.4L433.5 266.6M435.2 267.1L433.5 266.6L433.6 268.3M436.1 267.7L433 266.3M435.3 266.2L433 266.3L434.5 268M454.7 254.7L453 253.5M454.4 253.6L453 253.5L453.6 254.7M455.3 254.1L453.4 253.1M454.8 253L453.4 253.1L454.2 254.3M456 253.4L454.8 252.1M456.1 252.4L454.8 252.1L455 253.3M456.6 252.8L455.4 252M456.5 251.9L455.4 252L455.7 253.1M457.2 252.2L455.6 250.7M457 251L455.6 250.7L456 252M457.9 251.5L456.2 250.3M457.6 250.5L456.2 250.3L456.8 251.6M458.5 250.9L456.7 250.2M458 250L456.7 250.2L457.6 251.3M459.2 250.2L457.9 248.9M459.2 249.2L457.9 248.9L458.1 250.2M459.8 249.6L458.6 248.4M459.8 248.6L458.6 248.4L458.8 249.6M460.4 249L459.3 248.1M460.4 248.1L459.3 248.1L459.5 249.1M461.1 248.3L459.2 246.9M460.6 247.1L459.2 246.9L459.7 248.2M461.7 247.7L459.9 247.1M461.2 246.8L459.9 247.1L460.8 248.1M462.3 247.1L460.7 245.8M462.1 246L460.7 245.8L461.2 247.1M463 246.4L461.8 245.7M462.8 245.5L461.8 245.7L462.1 246.8M463.6 245.8L462.5 244.8M463.6 244.9L462.5 244.8L462.7 246M464.2 245.2L462.9 244.1M464.1 244.2L462.9 244.1L463.3 245.3M464.9 244.5L463.1 243.1M464.4 243.3L463.1 243.1L463.6 244.4M465.5 243.9L463.9 242.7M465.3 242.8L463.9 242.7L464.5 244M466.2 243.2L465 242M466.2 242.3L465 242L465.2 243.2M466.8 242.6L465.2 241.5M466.6 241.6L465.2 241.5L465.8 242.7M467.4 242L465.5 241.4M466.9 241.1L465.5 241.4L466.5 242.4M468.1 241.3L466.9 240.8M467.9 240.5L466.9 240.8L467.3 241.8M468.7 240.7L466.8 239.3M468.2 239.4L466.8 239.3L467.3 240.6M469.3 240.1L467.5 238.8M468.9 238.9L467.5 238.8L468.1 240.1M470 239.4L468.6 238.3M469.9 238.4L468.6 238.3L469 239.5M470.6 238.8L468.9 237.6M470.3 237.7L468.9 237.6L469.5 238.9M485.2 221.2L486.2 220.1M486.2 220.2L486.2 220.1L486 220.1M486.2 220L487.2 218.9M487.2 219L487.2 218.9L487.1 218.9M487.3 218.8L488.3 217.6M488.3 217.8L488.3 217.6L488.1 217.7M488.3 217.6L489.3 216.4M489.3 216.6L489.3 216.4L489.2 216.4M489.4 216.4L490.4 215.2M490.4 215.4L490.4 215.2L490.2 215.2M490.4 215.1L491.4 214M491.4 214.1L491.4 214L491.3 214M491.5 213.9L492.4 212.8M492.5 212.9L492.4 212.8L492.3 212.8M492.5 212.7L493.5 211.6M493.5 211.7L493.5 211.6L493.3 211.6M493.6 211.5L494.5 210.4M494.5 210.5L494.5 210.4L494.4 210.4M494.6 210.3L495.6 209.2M495.6 209.3L495.6 209.2L495.4 209.2M495.6 209.1L496.6 207.9M496.6 208.1L496.6 207.9L496.5 208M496.7 207.9L497.7 206.7M497.7 206.9L497.7 206.7L497.5 206.7M497.7 206.7L498.7 205.5M498.7 205.7L498.7 205.5L498.6 205.5M498.8 205.4L499.8 204.3M499.8 204.5L499.8 204.3L499.6 204.3M499.8 204.2L500.8 203.1M500.8 203.2L500.8 203.1L500.7 203.1M500.9 203L501.8 201.9M501.9 202L501.8 201.9L501.7 201.9M501.9 201.8L502.9 200.7M502.9 200.8L502.9 200.7L502.8 200.7M503 200.6L503.9 199.5M503.9 199.6L503.9 199.5L503.8 199.5M504 199.4L505 198.2M505 198.4L505 198.2L504.8 198.3M505 198.2L506 197M506 197.2L506 197L505.9 197M506.1 197L507.1 195.8M507.1 196L507.1 195.8L506.9 195.8M507.1 195.7L508.1 194.6M508.1 194.8L508.1 194.6L508 194.6M508.2 194.5L509.2 193.4M509.2 193.5L509.2 193.4L509 193.4M509.2 193.3L510.2 192.2M510.2 192.3L510.2 192.2L510.1 192.2M510.3 192.1L511.2 191M511.3 191.1L511.2 191L511.1 191M511.3 190.9L512.3 189.8M512.3 189.9L512.3 189.8L512.2 189.8M512.4 189.7L513.3 188.6M513.3 188.7L513.3 188.6L513.2 188.6M513.4 188.5L514.4 187.3M514.4 187.5L514.4 187.3L514.2 187.4" stroke="#0000ff" stroke-width="1.1"/>
<path d="M434.5 268.5l3 -2.2M469 240l2.6 -2.6M452.8 256.3l1.5 -1.5" stroke="#7fff00" stroke-width="3"/>
<polyline fill="none" stroke="#000" stroke-width="1.3" shape-rendering="crispEdges" points="294.7,378.7 313.3,364 338.7,349.3 349.3,338.7 366.7,324 381,313.5 397.3,300.7 410.7,286 420,278 436.7,267.3"/>
<polyline fill="none" stroke="#000" stroke-width="1.3" shape-rendering="crispEdges" points="454.7,254.7 470.7,238.7"/>
<polyline fill="none" stroke="#000" stroke-width="1.3" shape-rendering="crispEdges" points="486,222 514.7,188.7"/>
<path d="M298.6 374.6l2.2 -0.6M308.5 366.8l2.2 -0.6M318.9 359.8l2.2 -0.6M329.8 353.5l2.2 -0.6M340.3 346.6l2.2 -0.6M349.2 337.7l2.2 -0.6M358.8 329.6l2.2 -0.6M368.6 321.6l2.2 -0.6M378.8 314.2l2.2 -0.6M388.7 306.5l2.2 -0.6M398.4 298.4l2.2 -0.6M406.8 289.1l2.2 -0.6M416 280.4l2.2 -0.6M426.2 273.1l2.2 -0.6M495.2 209.5l1.6 -1.8M497.9 206.5l1.6 -1.8M500.5 203.4l1.6 -1.8M503.1 200.4l1.6 -1.8M505.7 197.4l1.6 -1.8M508.3 194.3l1.6 -1.8" stroke="#ffff00" stroke-width="1.1"/>
<path d="M453.4 265.3v5.6" stroke="#000" stroke-width="1"/>
<path d="M373.6 329.6l2.6 0l0.8 0.8l-3.6 2.2h4.4" stroke="#000" stroke-width="1"/>
</g>
<g id="m3">
<path d="M248.4 428.8L245.2 438.7" stroke="#00ff00" stroke-width="2.6" fill="none" shape-rendering="crispEdges"/><path d="M243.6 443.8L242.6 436.8L248.5 438.6Z" fill="#00ff00" shape-rendering="auto"/>
<path d="M248.4 425.9l2.7 2.9l-2.7 2.9l-2.7 -2.9z" fill="#00ff00"/>
<path d="M248.4 428.8L254 440.5" stroke="#ff0000" stroke-width="1" fill="none" shape-rendering="crispEdges"/><path d="M255.4 443.4L252.2 440.3L254.9 439Z" fill="#ff0000" shape-rendering="auto"/>
<path d="M248.4 428.8L238.1 428.6" stroke="#0000ff" stroke-width="1.1" fill="none" shape-rendering="crispEdges"/><path d="M239 428.6L239.1 428.5L239.1 428.7Z" fill="#0000ff" shape-rendering="auto"/>
<path d="M240.6 428.7l1.6 -1.3l1.6 1.3l-1.6 1.3z" fill="#0000ff"/>
<rect x="247.7" y="427.6" width="1.4" height="2.4" fill="#000"/>
</g>
<text x="261.3" y="431.8">3</text>
<text x="290.5" y="408">4</text>
<text x="512.3" y="210.8">31</text>
<text x="502.6" y="139.8">4h</text>
<text x="52.7" y="702.5" textLength="137.3" lengthAdjust="spacingAndGlyphs" style="white-space:pre">isobaths: 0   200  1000m</text>
<path d="M507 66.5H523.8" stroke="#ff0000" stroke-width="1" shape-rendering="crispEdges"/>
<path d="M508.6 66.5L514.6 64.5L514.6 68.5Z" fill="#ff0000"/>
<text x="530.6" y="69.5" textLength="109.3" lengthAdjust="spacingAndGlyphs">25cm/s swim vector</text>
<path d="M507 80.5H523.8" stroke="#ff00ff" stroke-width="1" shape-rendering="crispEdges"/>
<path d="M508.6 80.5L514.6 78.5L514.6 82.5Z" fill="#ff00ff"/>
<text x="530.6" y="83.7" textLength="116.6" lengthAdjust="spacingAndGlyphs">GPS surface velocity</text>
<path d="M507 94.5H523.8" stroke="#0000ff" stroke-width="1" shape-rendering="crispEdges"/>
<path d="M508.6 94.5L514.6 92.5L514.6 96.5Z" fill="#0000ff"/>
<text x="530.6" y="97.5" textLength="130.2" lengthAdjust="spacingAndGlyphs">dive-avg current veloc.</text>
<path d="M507 107.5H523.8" stroke="#00ff00" stroke-width="3" shape-rendering="crispEdges"/>
<path d="M508.6 107.5L514.6 104.1L514.6 110.9Z" fill="#00ff00"/>
<text x="530.6" y="111.7" textLength="98.8" lengthAdjust="spacingAndGlyphs">net glider velocity</text>
<path d="M507 122.5H523.8" stroke="#000000" stroke-width="1" shape-rendering="crispEdges"/>
<path d="M508.6 122.5L514.6 120.5L514.6 124.5Z" fill="#000000"/>
<text x="530.6" y="125.5" textLength="145.9" lengthAdjust="spacingAndGlyphs">sfc geo. vel. 02-Aug-2010</text>
<text x="612" y="141" text-anchor="middle" textLength="32.5" lengthAdjust="spacingAndGlyphs" class="b">(m/s)</text>
<rect x="545.5" y="150.5" width="134.5" height="10" fill="url(#gh)" stroke="#000" stroke-width="1" shape-rendering="crispEdges"/>
<path class="ax" d="M558.5 148v3M558.5 159v3"/>
<text x="558.2" y="175.6" text-anchor="middle" textLength="7.2" lengthAdjust="spacingAndGlyphs" class="b">0</text>
<path class="ax" d="M606.5 148v3M606.5 159v3"/>
<text x="605.8" y="175.6" text-anchor="middle" textLength="17.7" lengthAdjust="spacingAndGlyphs" class="b">0.2</text>
<path class="ax" d="M654.5 148v3M654.5 159v3"/>
<text x="653.8" y="175.6" text-anchor="middle" textLength="17.7" lengthAdjust="spacingAndGlyphs" class="b">0.4</text>
<g id="vel">
<path d="M768.6 133H796M819.4 133H1055" stroke="#ff0000" stroke-width="2" fill="none" shape-rendering="crispEdges"/>
<polyline fill="none" stroke="#0000ff" stroke-width="2.6" stroke-linejoin="miter" points="768.6,164 796,164 818,167.6 828,167.6 840,165.6 850,165.6 864,166.6 886,166.6 940,160.6 966,155 990,156.6 1013,150 1032,152.6 1054,150 1122.4,150"/>
<polyline fill="none" stroke="#00ff00" stroke-width="2.4" stroke-linejoin="bevel" points="768.6,128 774.6,128 775.6,157 776.6,128 796,128 814,134.4 820,135.6 850,135.6 860,133.6 894,133.6 896,135 905,135 905.4,129 925.6,129 926.3,135 927,129 947,128.4 948,148 949,124 968,124 969.4,129 970.4,127 990,127 991,146 992,124.4 1012,124.4 1013,140 1014,124.4 1033,124.4 1034,146 1035.4,127 1060,127 1120,133 1121.6,138"/>
<path d="M775.6 128V157M948 128V148M991 127V146M1013 125V140M1034 125V146" stroke="#00ff00" stroke-width="3" fill="none"/>
<polyline fill="none" stroke="#000" stroke-width="2.6" stroke-linejoin="miter" points="768.6,134 780,135.5 796,137 808,136 820,134.4 860,130.6 940,123.6 1030,115.2 1122.4,107.6"/>
</g>
<rect class="ax" x="768.5" y="45.5" width="354" height="128"/>
<text x="763.5" y="48.9" text-anchor="end">0.8</text>
<text x="763.5" y="79.9" text-anchor="end">0.6</text>
<text x="763.5" y="112.9" text-anchor="end">0.4</text>
<text x="763.5" y="144.9" text-anchor="end">0.2</text>
<text x="763.5" y="176.9" text-anchor="end">0</text>
<path class="ax" d="M768.5 76.5h4M1122.5 76.5h-4M768.5 109.5h4M1122.5 109.5h-4M768.5 141.5h4M1122.5 141.5h-4"/>
<text transform="translate(736.7,111.3) rotate(-90)" text-anchor="middle" textLength="134" lengthAdjust="spacingAndGlyphs">velocity magnitude (m/s)</text>
<defs>
<linearGradient id="gT" gradientUnits="userSpaceOnUse" x1="0" y1="184.5" x2="0" y2="311.5"><stop offset="0" stop-color="#cc5200"/><stop offset="0.12" stop-color="#d05800"/><stop offset="0.155" stop-color="#eb7800"/><stop offset="0.2" stop-color="#ffa500"/><stop offset="0.225" stop-color="#ffd200"/><stop offset="0.25" stop-color="#f0f000"/><stop offset="0.285" stop-color="#e1f000"/><stop offset="0.305" stop-color="#8ce600"/><stop offset="0.325" stop-color="#1ed200"/><stop offset="0.36" stop-color="#00c31e"/><stop offset="0.41" stop-color="#00b95a"/><stop offset="0.46" stop-color="#00c8aa"/><stop offset="0.51" stop-color="#00b9eb"/><stop offset="0.55" stop-color="#0096ff"/><stop offset="0.6" stop-color="#006eeb"/><stop offset="0.65" stop-color="#004bd7"/><stop offset="0.71" stop-color="#002db4"/><stop offset="0.77" stop-color="#000f96"/><stop offset="0.84" stop-color="#000082"/><stop offset="1" stop-color="#00007a"/></linearGradient>
<linearGradient id="gS" gradientUnits="userSpaceOnUse" x1="0" y1="323" x2="0" y2="450.5"><stop offset="0" stop-color="#eef000"/><stop offset="0.125" stop-color="#f0ee00"/><stop offset="0.145" stop-color="#ffaa00"/><stop offset="0.165" stop-color="#d75f00"/><stop offset="0.21" stop-color="#c84b00"/><stop offset="0.26" stop-color="#d76400"/><stop offset="0.3" stop-color="#ffa000"/><stop offset="0.335" stop-color="#ffc800"/><stop offset="0.36" stop-color="#ebf000"/><stop offset="0.38" stop-color="#8ce600"/><stop offset="0.4" stop-color="#00cd14"/><stop offset="0.44" stop-color="#00b950"/><stop offset="0.49" stop-color="#00c8aa"/><stop offset="0.54" stop-color="#00aff5"/><stop offset="0.585" stop-color="#008cfa"/><stop offset="0.64" stop-color="#005fe1"/><stop offset="0.71" stop-color="#003cc3"/><stop offset="0.79" stop-color="#0030b4"/><stop offset="1" stop-color="#002db2"/></linearGradient>
</defs>
<path class="ax" d="M768.5 184.5V311.5H1122.5M768.5 184.5h4M768.5 248.5h4"/>
<text x="763.5" y="187.8" text-anchor="end">0</text>
<text x="763.5" y="251.3" text-anchor="end">500</text>
<text x="763.5" y="314.7" text-anchor="end">1000</text>
<text transform="translate(727,248) rotate(-90)" text-anchor="middle" textLength="53" lengthAdjust="spacingAndGlyphs">Depth (m)</text>
<path class="ax" d="M768.5 323.5V450.5H1122.5M768.5 323.5h4M768.5 386.5h4"/>
<text x="763.5" y="326.8" text-anchor="end">0</text>
<text x="763.5" y="389.3" text-anchor="end">500</text>
<text x="763.5" y="453.7" text-anchor="end">1000</text>
<text transform="translate(727,386.8) rotate(-90)" text-anchor="middle" textLength="53" lengthAdjust="spacingAndGlyphs">Depth (m)</text>
<path class="ax" d="M768.5 461.5V588.5H1122.5M768.5 461.5h4M768.5 525.5h4"/>
<text x="763.5" y="464.8" text-anchor="end">0</text>
<text x="763.5" y="528.3" text-anchor="end">500</text>
<text x="763.5" y="591.7" text-anchor="end">1000</text>
<text transform="translate(727,525) rotate(-90)" text-anchor="middle" textLength="53" lengthAdjust="spacingAndGlyphs">Depth (m)</text>
<path class="ax" d="M768.5 600.5V728.5H1122.5M768.5 600.5h4M768.5 664.5h4"/>
<text x="763.5" y="603.8" text-anchor="end">0</text>
<text x="763.5" y="667.3" text-anchor="end">500</text>
<text x="763.5" y="731.7" text-anchor="end">1000</text>
<text transform="translate(727,664.5) rotate(-90)" text-anchor="middle" textLength="53" lengthAdjust="spacingAndGlyphs">Depth (m)</text>
<text x="812.2" y="742.7" text-anchor="middle">31Jul</text>
<text x="900.2" y="742.7" text-anchor="middle">01Aug</text>
<text x="989.2" y="742.7" text-anchor="middle">02Aug</text>
<text x="1077.2" y="742.7" text-anchor="middle">03Aug</text>
<path class="ax" d="M812.5 728.5v-4.5M900.5 728.5v-4.5M989.5 728.5v-4.5M1077.5 728.5v-4.5"/>
<path d="M768.4 274.3l2.9 2.9l-2.9 2.9l-2.9 -2.9zM768.6 272.2l2.9 2.9l-2.9 2.9l-2.9 -2.9zM769.1 270.1l2.9 2.9l-2.9 2.9l-2.9 -2.9zM768.8 268l2.9 2.9l-2.9 2.9l-2.9 -2.9zM769 265.9l2.9 2.9l-2.9 2.9l-2.9 -2.9zM769.3 263.8l2.9 2.9l-2.9 2.9l-2.9 -2.9zM769 261.7l2.9 2.9l-2.9 2.9l-2.9 -2.9zM769.5 259.6l2.9 2.9l-2.9 2.9l-2.9 -2.9zM769.8 257.5l2.9 2.9l-2.9 2.9l-2.9 -2.9zM770.1 255.5l2.9 2.9l-2.9 2.9l-2.9 -2.9zM769.5 253.4l2.9 2.9l-2.9 2.9l-2.9 -2.9zM769.9 251.3l2.9 2.9l-2.9 2.9l-2.9 -2.9zM769.8 249.2l2.9 2.9l-2.9 2.9l-2.9 -2.9zM770.7 247.1l2.9 2.9l-2.9 2.9l-2.9 -2.9zM770.8 245l2.9 2.9l-2.9 2.9l-2.9 -2.9zM770.3 242.9l2.9 2.9l-2.9 2.9l-2.9 -2.9zM771.4 240.8l2.9 2.9l-2.9 2.9l-2.9 -2.9zM771.5 238.7l2.9 2.9l-2.9 2.9l-2.9 -2.9zM771.3 236.6l2.9 2.9l-2.9 2.9l-2.9 -2.9zM771.5 234.5l2.9 2.9l-2.9 2.9l-2.9 -2.9zM771.1 232.4l2.9 2.9l-2.9 2.9l-2.9 -2.9zM771.2 230.3l2.9 2.9l-2.9 2.9l-2.9 -2.9zM771.8 228.2l2.9 2.9l-2.9 2.9l-2.9 -2.9zM771.5 226.1l2.9 2.9l-2.9 2.9l-2.9 -2.9zM771.8 224l2.9 2.9l-2.9 2.9l-2.9 -2.9zM772 221.9l2.9 2.9l-2.9 2.9l-2.9 -2.9zM771.9 219.8l2.9 2.9l-2.9 2.9l-2.9 -2.9zM772.5 217.7l2.9 2.9l-2.9 2.9l-2.9 -2.9zM772.7 215.6l2.9 2.9l-2.9 2.9l-2.9 -2.9zM773.2 213.5l2.9 2.9l-2.9 2.9l-2.9 -2.9zM773.1 211.4l2.9 2.9l-2.9 2.9l-2.9 -2.9zM773.3 209.3l2.9 2.9l-2.9 2.9l-2.9 -2.9zM773.3 207.3l2.9 2.9l-2.9 2.9l-2.9 -2.9zM773.7 205.2l2.9 2.9l-2.9 2.9l-2.9 -2.9zM773.6 203.1l2.9 2.9l-2.9 2.9l-2.9 -2.9zM773.6 201l2.9 2.9l-2.9 2.9l-2.9 -2.9zM774.5 198.9l2.9 2.9l-2.9 2.9l-2.9 -2.9zM774.6 196.8l2.9 2.9l-2.9 2.9l-2.9 -2.9zM774.6 194.7l2.9 2.9l-2.9 2.9l-2.9 -2.9zM774.6 192.6l2.9 2.9l-2.9 2.9l-2.9 -2.9zM774.4 190.5l2.9 2.9l-2.9 2.9l-2.9 -2.9zM774.5 188.4l2.9 2.9l-2.9 2.9l-2.9 -2.9zM774.7 186.3l2.9 2.9l-2.9 2.9l-2.9 -2.9zM774.6 184.2l2.9 2.9l-2.9 2.9l-2.9 -2.9zM775.5 182.1l2.9 2.9l-2.9 2.9l-2.9 -2.9zM775.1 182.1l2.9 2.9l-2.9 2.9l-2.9 -2.9zM775.7 184.2l2.9 2.9l-2.9 2.9l-2.9 -2.9zM775.5 186.2l2.9 2.9l-2.9 2.9l-2.9 -2.9zM776.2 188.3l2.9 2.9l-2.9 2.9l-2.9 -2.9zM776.3 190.4l2.9 2.9l-2.9 2.9l-2.9 -2.9zM775.6 192.5l2.9 2.9l-2.9 2.9l-2.9 -2.9zM776 194.5l2.9 2.9l-2.9 2.9l-2.9 -2.9zM776.9 196.6l2.9 2.9l-2.9 2.9l-2.9 -2.9zM776.7 198.7l2.9 2.9l-2.9 2.9l-2.9 -2.9zM777.4 200.7l2.9 2.9l-2.9 2.9l-2.9 -2.9zM777 202.8l2.9 2.9l-2.9 2.9l-2.9 -2.9zM776.8 204.9l2.9 2.9l-2.9 2.9l-2.9 -2.9zM777.6 206.9l2.9 2.9l-2.9 2.9l-2.9 -2.9zM777.9 209l2.9 2.9l-2.9 2.9l-2.9 -2.9zM777.6 211.1l2.9 2.9l-2.9 2.9l-2.9 -2.9zM777.6 213.1l2.9 2.9l-2.9 2.9l-2.9 -2.9zM778 215.2l2.9 2.9l-2.9 2.9l-2.9 -2.9zM778.9 217.3l2.9 2.9l-2.9 2.9l-2.9 -2.9zM778.8 219.3l2.9 2.9l-2.9 2.9l-2.9 -2.9zM778.4 221.4l2.9 2.9l-2.9 2.9l-2.9 -2.9zM778.7 223.5l2.9 2.9l-2.9 2.9l-2.9 -2.9zM778.8 225.5l2.9 2.9l-2.9 2.9l-2.9 -2.9zM778.9 227.6l2.9 2.9l-2.9 2.9l-2.9 -2.9zM779.8 229.7l2.9 2.9l-2.9 2.9l-2.9 -2.9zM779.4 231.8l2.9 2.9l-2.9 2.9l-2.9 -2.9zM780 233.8l2.9 2.9l-2.9 2.9l-2.9 -2.9zM780 235.9l2.9 2.9l-2.9 2.9l-2.9 -2.9zM780 238l2.9 2.9l-2.9 2.9l-2.9 -2.9zM780.7 240l2.9 2.9l-2.9 2.9l-2.9 -2.9zM780.3 242.1l2.9 2.9l-2.9 2.9l-2.9 -2.9zM781 244.2l2.9 2.9l-2.9 2.9l-2.9 -2.9zM780.6 246.2l2.9 2.9l-2.9 2.9l-2.9 -2.9zM781.1 248.3l2.9 2.9l-2.9 2.9l-2.9 -2.9zM781.1 250.4l2.9 2.9l-2.9 2.9l-2.9 -2.9zM781.4 252.4l2.9 2.9l-2.9 2.9l-2.9 -2.9zM782.3 254.5l2.9 2.9l-2.9 2.9l-2.9 -2.9zM782.3 256.6l2.9 2.9l-2.9 2.9l-2.9 -2.9zM782 258.6l2.9 2.9l-2.9 2.9l-2.9 -2.9zM782.7 260.7l2.9 2.9l-2.9 2.9l-2.9 -2.9zM782.2 262.8l2.9 2.9l-2.9 2.9l-2.9 -2.9zM782.6 264.9l2.9 2.9l-2.9 2.9l-2.9 -2.9zM783.3 266.9l2.9 2.9l-2.9 2.9l-2.9 -2.9zM783.2 269l2.9 2.9l-2.9 2.9l-2.9 -2.9zM782.9 271.1l2.9 2.9l-2.9 2.9l-2.9 -2.9zM784 273.1l2.9 2.9l-2.9 2.9l-2.9 -2.9zM783.4 275.2l2.9 2.9l-2.9 2.9l-2.9 -2.9zM783.6 277.3l2.9 2.9l-2.9 2.9l-2.9 -2.9zM784.3 279.3l2.9 2.9l-2.9 2.9l-2.9 -2.9zM784.1 281.4l2.9 2.9l-2.9 2.9l-2.9 -2.9zM784.2 283.5l2.9 2.9l-2.9 2.9l-2.9 -2.9zM784.2 285.5l2.9 2.9l-2.9 2.9l-2.9 -2.9zM784.4 287.6l2.9 2.9l-2.9 2.9l-2.9 -2.9zM785.1 289.7l2.9 2.9l-2.9 2.9l-2.9 -2.9zM784.9 291.7l2.9 2.9l-2.9 2.9l-2.9 -2.9zM785.5 293.8l2.9 2.9l-2.9 2.9l-2.9 -2.9zM785.4 295.9l2.9 2.9l-2.9 2.9l-2.9 -2.9zM785.7 297.9l2.9 2.9l-2.9 2.9l-2.9 -2.9zM786.4 300l2.9 2.9l-2.9 2.9l-2.9 -2.9zM786.1 302.1l2.9 2.9l-2.9 2.9l-2.9 -2.9zM786.4 304.2l2.9 2.9l-2.9 2.9l-2.9 -2.9zM786.7 304.2l2.9 2.9l-2.9 2.9l-2.9 -2.9zM786.1 302.1l2.9 2.9l-2.9 2.9l-2.9 -2.9zM786.3 300l2.9 2.9l-2.9 2.9l-2.9 -2.9zM787.2 298l2.9 2.9l-2.9 2.9l-2.9 -2.9zM787.2 295.9l2.9 2.9l-2.9 2.9l-2.9 -2.9zM786.8 293.8l2.9 2.9l-2.9 2.9l-2.9 -2.9zM786.9 291.8l2.9 2.9l-2.9 2.9l-2.9 -2.9zM787.6 289.7l2.9 2.9l-2.9 2.9l-2.9 -2.9zM788 287.6l2.9 2.9l-2.9 2.9l-2.9 -2.9zM787.4 285.6l2.9 2.9l-2.9 2.9l-2.9 -2.9zM788.3 283.5l2.9 2.9l-2.9 2.9l-2.9 -2.9zM788.4 281.4l2.9 2.9l-2.9 2.9l-2.9 -2.9zM788.3 279.4l2.9 2.9l-2.9 2.9l-2.9 -2.9zM788.2 277.3l2.9 2.9l-2.9 2.9l-2.9 -2.9zM788.1 275.3l2.9 2.9l-2.9 2.9l-2.9 -2.9zM788.2 273.2l2.9 2.9l-2.9 2.9l-2.9 -2.9zM789.2 271.1l2.9 2.9l-2.9 2.9l-2.9 -2.9zM788.7 269.1l2.9 2.9l-2.9 2.9l-2.9 -2.9zM789.3 267l2.9 2.9l-2.9 2.9l-2.9 -2.9zM789 264.9l2.9 2.9l-2.9 2.9l-2.9 -2.9zM789.7 262.9l2.9 2.9l-2.9 2.9l-2.9 -2.9zM789.6 260.8l2.9 2.9l-2.9 2.9l-2.9 -2.9zM789.5 258.7l2.9 2.9l-2.9 2.9l-2.9 -2.9zM789.5 256.7l2.9 2.9l-2.9 2.9l-2.9 -2.9zM790.2 254.6l2.9 2.9l-2.9 2.9l-2.9 -2.9zM789.7 252.5l2.9 2.9l-2.9 2.9l-2.9 -2.9zM790 250.5l2.9 2.9l-2.9 2.9l-2.9 -2.9zM790.5 248.4l2.9 2.9l-2.9 2.9l-2.9 -2.9zM791 246.4l2.9 2.9l-2.9 2.9l-2.9 -2.9zM790.9 244.3l2.9 2.9l-2.9 2.9l-2.9 -2.9zM790.7 242.2l2.9 2.9l-2.9 2.9l-2.9 -2.9zM791.5 240.2l2.9 2.9l-2.9 2.9l-2.9 -2.9zM790.9 238.1l2.9 2.9l-2.9 2.9l-2.9 -2.9zM790.9 236l2.9 2.9l-2.9 2.9l-2.9 -2.9zM791.3 234l2.9 2.9l-2.9 2.9l-2.9 -2.9zM791.6 231.9l2.9 2.9l-2.9 2.9l-2.9 -2.9zM791.4 229.8l2.9 2.9l-2.9 2.9l-2.9 -2.9zM791.7 227.8l2.9 2.9l-2.9 2.9l-2.9 -2.9zM792 225.7l2.9 2.9l-2.9 2.9l-2.9 -2.9zM792.4 223.6l2.9 2.9l-2.9 2.9l-2.9 -2.9zM792.1 221.6l2.9 2.9l-2.9 2.9l-2.9 -2.9zM792.5 219.5l2.9 2.9l-2.9 2.9l-2.9 -2.9zM793.2 217.5l2.9 2.9l-2.9 2.9l-2.9 -2.9zM793.4 215.4l2.9 2.9l-2.9 2.9l-2.9 -2.9zM793.2 213.3l2.9 2.9l-2.9 2.9l-2.9 -2.9zM793.4 211.3l2.9 2.9l-2.9 2.9l-2.9 -2.9zM793.5 209.2l2.9 2.9l-2.9 2.9l-2.9 -2.9zM793.2 207.1l2.9 2.9l-2.9 2.9l-2.9 -2.9zM793.2 205.1l2.9 2.9l-2.9 2.9l-2.9 -2.9zM793.4 203l2.9 2.9l-2.9 2.9l-2.9 -2.9zM794.4 200.9l2.9 2.9l-2.9 2.9l-2.9 -2.9zM794.4 198.9l2.9 2.9l-2.9 2.9l-2.9 -2.9zM794.8 196.8l2.9 2.9l-2.9 2.9l-2.9 -2.9zM794 194.7l2.9 2.9l-2.9 2.9l-2.9 -2.9zM794.8 192.7l2.9 2.9l-2.9 2.9l-2.9 -2.9zM794.8 190.6l2.9 2.9l-2.9 2.9l-2.9 -2.9zM795.2 188.6l2.9 2.9l-2.9 2.9l-2.9 -2.9zM794.9 186.5l2.9 2.9l-2.9 2.9l-2.9 -2.9zM795.7 184.4l2.9 2.9l-2.9 2.9l-2.9 -2.9zM795 182.4l2.9 2.9l-2.9 2.9l-2.9 -2.9zM818 182.1l2.9 2.9l-2.9 2.9l-2.9 -2.9zM818.5 187.3l2.9 2.9l-2.9 2.9l-2.9 -2.9zM819.1 192.8l2.9 2.9l-2.9 2.9l-2.9 -2.9zM819.6 198.7l2.9 2.9l-2.9 2.9l-2.9 -2.9zM819.8 200.8l2.9 2.9l-2.9 2.9l-2.9 -2.9zM820.2 202.9l2.9 2.9l-2.9 2.9l-2.9 -2.9zM820.6 204.9l2.9 2.9l-2.9 2.9l-2.9 -2.9zM820.6 207l2.9 2.9l-2.9 2.9l-2.9 -2.9zM820.8 209.1l2.9 2.9l-2.9 2.9l-2.9 -2.9zM821 211.2l2.9 2.9l-2.9 2.9l-2.9 -2.9zM821.4 213.3l2.9 2.9l-2.9 2.9l-2.9 -2.9zM821 215.3l2.9 2.9l-2.9 2.9l-2.9 -2.9zM821.5 217.4l2.9 2.9l-2.9 2.9l-2.9 -2.9zM821.9 219.5l2.9 2.9l-2.9 2.9l-2.9 -2.9zM822.1 221.6l2.9 2.9l-2.9 2.9l-2.9 -2.9zM821.9 223.6l2.9 2.9l-2.9 2.9l-2.9 -2.9zM822.4 225.7l2.9 2.9l-2.9 2.9l-2.9 -2.9zM822.7 227.8l2.9 2.9l-2.9 2.9l-2.9 -2.9zM822.6 229.9l2.9 2.9l-2.9 2.9l-2.9 -2.9zM822.8 231.9l2.9 2.9l-2.9 2.9l-2.9 -2.9zM822.8 234l2.9 2.9l-2.9 2.9l-2.9 -2.9zM823.2 236.1l2.9 2.9l-2.9 2.9l-2.9 -2.9zM823.4 238.2l2.9 2.9l-2.9 2.9l-2.9 -2.9zM823.1 240.2l2.9 2.9l-2.9 2.9l-2.9 -2.9zM823.8 242.3l2.9 2.9l-2.9 2.9l-2.9 -2.9zM824.4 244.4l2.9 2.9l-2.9 2.9l-2.9 -2.9zM824.5 246.5l2.9 2.9l-2.9 2.9l-2.9 -2.9zM824.5 248.6l2.9 2.9l-2.9 2.9l-2.9 -2.9zM824.4 250.6l2.9 2.9l-2.9 2.9l-2.9 -2.9zM824.9 252.7l2.9 2.9l-2.9 2.9l-2.9 -2.9zM825 254.8l2.9 2.9l-2.9 2.9l-2.9 -2.9zM825 256.9l2.9 2.9l-2.9 2.9l-2.9 -2.9zM825.6 258.9l2.9 2.9l-2.9 2.9l-2.9 -2.9zM825.1 261l2.9 2.9l-2.9 2.9l-2.9 -2.9zM825.9 263.1l2.9 2.9l-2.9 2.9l-2.9 -2.9zM825.4 265.2l2.9 2.9l-2.9 2.9l-2.9 -2.9zM826.2 267.2l2.9 2.9l-2.9 2.9l-2.9 -2.9zM826.2 269.3l2.9 2.9l-2.9 2.9l-2.9 -2.9zM826.2 271.4l2.9 2.9l-2.9 2.9l-2.9 -2.9zM826.9 273.5l2.9 2.9l-2.9 2.9l-2.9 -2.9zM826.8 275.5l2.9 2.9l-2.9 2.9l-2.9 -2.9zM827.2 277.6l2.9 2.9l-2.9 2.9l-2.9 -2.9zM827.7 279.7l2.9 2.9l-2.9 2.9l-2.9 -2.9zM827.2 281.8l2.9 2.9l-2.9 2.9l-2.9 -2.9zM827.1 283.9l2.9 2.9l-2.9 2.9l-2.9 -2.9zM827.6 285.9l2.9 2.9l-2.9 2.9l-2.9 -2.9zM828.2 288l2.9 2.9l-2.9 2.9l-2.9 -2.9zM827.9 290.1l2.9 2.9l-2.9 2.9l-2.9 -2.9zM828.1 292.2l2.9 2.9l-2.9 2.9l-2.9 -2.9zM829 294.2l2.9 2.9l-2.9 2.9l-2.9 -2.9zM829 296.3l2.9 2.9l-2.9 2.9l-2.9 -2.9zM829 298.4l2.9 2.9l-2.9 2.9l-2.9 -2.9zM829.6 300.5l2.9 2.9l-2.9 2.9l-2.9 -2.9zM829.2 302.5l2.9 2.9l-2.9 2.9l-2.9 -2.9zM829.8 304.6l2.9 2.9l-2.9 2.9l-2.9 -2.9zM829.5 306.7l2.9 2.9l-2.9 2.9l-2.9 -2.9zM829.7 306.7l2.9 2.9l-2.9 2.9l-2.9 -2.9zM830.3 304.6l2.9 2.9l-2.9 2.9l-2.9 -2.9zM830.5 302.6l2.9 2.9l-2.9 2.9l-2.9 -2.9zM830.7 300.5l2.9 2.9l-2.9 2.9l-2.9 -2.9zM830.3 298.4l2.9 2.9l-2.9 2.9l-2.9 -2.9zM830.7 296.3l2.9 2.9l-2.9 2.9l-2.9 -2.9zM830.6 294.3l2.9 2.9l-2.9 2.9l-2.9 -2.9zM830.6 292.2l2.9 2.9l-2.9 2.9l-2.9 -2.9zM831.1 290.1l2.9 2.9l-2.9 2.9l-2.9 -2.9zM831.6 288l2.9 2.9l-2.9 2.9l-2.9 -2.9zM831.7 286l2.9 2.9l-2.9 2.9l-2.9 -2.9zM831.8 283.9l2.9 2.9l-2.9 2.9l-2.9 -2.9zM832.2 281.8l2.9 2.9l-2.9 2.9l-2.9 -2.9zM831.7 279.8l2.9 2.9l-2.9 2.9l-2.9 -2.9zM831.7 277.7l2.9 2.9l-2.9 2.9l-2.9 -2.9zM832.2 275.6l2.9 2.9l-2.9 2.9l-2.9 -2.9zM832.1 273.5l2.9 2.9l-2.9 2.9l-2.9 -2.9zM832.2 271.5l2.9 2.9l-2.9 2.9l-2.9 -2.9zM832.6 269.4l2.9 2.9l-2.9 2.9l-2.9 -2.9zM833 267.3l2.9 2.9l-2.9 2.9l-2.9 -2.9zM833 265.3l2.9 2.9l-2.9 2.9l-2.9 -2.9zM833 263.2l2.9 2.9l-2.9 2.9l-2.9 -2.9zM833.7 261.1l2.9 2.9l-2.9 2.9l-2.9 -2.9zM834 259l2.9 2.9l-2.9 2.9l-2.9 -2.9zM833.6 257l2.9 2.9l-2.9 2.9l-2.9 -2.9zM833.4 254.9l2.9 2.9l-2.9 2.9l-2.9 -2.9zM833.5 252.8l2.9 2.9l-2.9 2.9l-2.9 -2.9zM834.5 250.7l2.9 2.9l-2.9 2.9l-2.9 -2.9zM833.8 248.7l2.9 2.9l-2.9 2.9l-2.9 -2.9zM834.6 246.6l2.9 2.9l-2.9 2.9l-2.9 -2.9zM834.7 244.5l2.9 2.9l-2.9 2.9l-2.9 -2.9zM834.6 242.5l2.9 2.9l-2.9 2.9l-2.9 -2.9zM835.2 240.4l2.9 2.9l-2.9 2.9l-2.9 -2.9zM834.6 238.3l2.9 2.9l-2.9 2.9l-2.9 -2.9zM834.9 236.2l2.9 2.9l-2.9 2.9l-2.9 -2.9zM835.4 234.2l2.9 2.9l-2.9 2.9l-2.9 -2.9zM835.1 232.1l2.9 2.9l-2.9 2.9l-2.9 -2.9zM836 230l2.9 2.9l-2.9 2.9l-2.9 -2.9zM835.6 228l2.9 2.9l-2.9 2.9l-2.9 -2.9zM835.7 225.9l2.9 2.9l-2.9 2.9l-2.9 -2.9zM835.7 223.8l2.9 2.9l-2.9 2.9l-2.9 -2.9zM836.5 221.7l2.9 2.9l-2.9 2.9l-2.9 -2.9zM836.5 219.7l2.9 2.9l-2.9 2.9l-2.9 -2.9zM836.8 217.6l2.9 2.9l-2.9 2.9l-2.9 -2.9zM837 215.5l2.9 2.9l-2.9 2.9l-2.9 -2.9zM837.3 213.4l2.9 2.9l-2.9 2.9l-2.9 -2.9zM837.6 211.4l2.9 2.9l-2.9 2.9l-2.9 -2.9zM837.5 209.3l2.9 2.9l-2.9 2.9l-2.9 -2.9zM837.2 207.2l2.9 2.9l-2.9 2.9l-2.9 -2.9zM837.6 205.2l2.9 2.9l-2.9 2.9l-2.9 -2.9zM837.5 203.1l2.9 2.9l-2.9 2.9l-2.9 -2.9zM837.5 201l2.9 2.9l-2.9 2.9l-2.9 -2.9zM838.1 198.9l2.9 2.9l-2.9 2.9l-2.9 -2.9zM838.5 196.9l2.9 2.9l-2.9 2.9l-2.9 -2.9zM838.1 194.8l2.9 2.9l-2.9 2.9l-2.9 -2.9zM838.4 192.7l2.9 2.9l-2.9 2.9l-2.9 -2.9zM838.6 190.7l2.9 2.9l-2.9 2.9l-2.9 -2.9zM839.1 188.6l2.9 2.9l-2.9 2.9l-2.9 -2.9zM839.1 186.5l2.9 2.9l-2.9 2.9l-2.9 -2.9zM839.4 184.4l2.9 2.9l-2.9 2.9l-2.9 -2.9zM839.7 182.4l2.9 2.9l-2.9 2.9l-2.9 -2.9zM862 182.1l2.9 2.9l-2.9 2.9l-2.9 -2.9zM862.5 187.3l2.9 2.9l-2.9 2.9l-2.9 -2.9zM863 192.8l2.9 2.9l-2.9 2.9l-2.9 -2.9zM863.6 198.7l2.9 2.9l-2.9 2.9l-2.9 -2.9zM863.8 202.7l2.9 2.9l-2.9 2.9l-2.9 -2.9zM864.3 204.7l2.9 2.9l-2.9 2.9l-2.9 -2.9zM864.6 206.8l2.9 2.9l-2.9 2.9l-2.9 -2.9zM864 208.8l2.9 2.9l-2.9 2.9l-2.9 -2.9zM865 210.9l2.9 2.9l-2.9 2.9l-2.9 -2.9zM865 212.9l2.9 2.9l-2.9 2.9l-2.9 -2.9zM864.6 215l2.9 2.9l-2.9 2.9l-2.9 -2.9zM865.1 217l2.9 2.9l-2.9 2.9l-2.9 -2.9zM865.5 219.1l2.9 2.9l-2.9 2.9l-2.9 -2.9zM866 221.2l2.9 2.9l-2.9 2.9l-2.9 -2.9zM865.6 223.2l2.9 2.9l-2.9 2.9l-2.9 -2.9zM866 225.3l2.9 2.9l-2.9 2.9l-2.9 -2.9zM866.5 227.3l2.9 2.9l-2.9 2.9l-2.9 -2.9zM866.6 229.4l2.9 2.9l-2.9 2.9l-2.9 -2.9zM866.9 231.4l2.9 2.9l-2.9 2.9l-2.9 -2.9zM866.6 233.5l2.9 2.9l-2.9 2.9l-2.9 -2.9zM867 235.5l2.9 2.9l-2.9 2.9l-2.9 -2.9zM866.7 237.6l2.9 2.9l-2.9 2.9l-2.9 -2.9zM867.4 239.7l2.9 2.9l-2.9 2.9l-2.9 -2.9zM867.7 241.7l2.9 2.9l-2.9 2.9l-2.9 -2.9zM867.7 243.8l2.9 2.9l-2.9 2.9l-2.9 -2.9zM868 245.8l2.9 2.9l-2.9 2.9l-2.9 -2.9zM867.7 247.9l2.9 2.9l-2.9 2.9l-2.9 -2.9zM868.6 249.9l2.9 2.9l-2.9 2.9l-2.9 -2.9zM868.8 252l2.9 2.9l-2.9 2.9l-2.9 -2.9zM869 254l2.9 2.9l-2.9 2.9l-2.9 -2.9zM868.8 256.1l2.9 2.9l-2.9 2.9l-2.9 -2.9zM869.2 258.2l2.9 2.9l-2.9 2.9l-2.9 -2.9zM868.9 260.2l2.9 2.9l-2.9 2.9l-2.9 -2.9zM869.7 262.3l2.9 2.9l-2.9 2.9l-2.9 -2.9zM869.8 264.3l2.9 2.9l-2.9 2.9l-2.9 -2.9zM869.5 266.4l2.9 2.9l-2.9 2.9l-2.9 -2.9zM869.4 268.4l2.9 2.9l-2.9 2.9l-2.9 -2.9zM870 270.5l2.9 2.9l-2.9 2.9l-2.9 -2.9zM870.3 272.5l2.9 2.9l-2.9 2.9l-2.9 -2.9zM870.7 274.6l2.9 2.9l-2.9 2.9l-2.9 -2.9zM870.6 276.7l2.9 2.9l-2.9 2.9l-2.9 -2.9zM870.3 278.7l2.9 2.9l-2.9 2.9l-2.9 -2.9zM871.3 280.8l2.9 2.9l-2.9 2.9l-2.9 -2.9zM870.7 282.8l2.9 2.9l-2.9 2.9l-2.9 -2.9zM871.6 284.9l2.9 2.9l-2.9 2.9l-2.9 -2.9zM871.2 286.9l2.9 2.9l-2.9 2.9l-2.9 -2.9zM871.5 289l2.9 2.9l-2.9 2.9l-2.9 -2.9zM872.2 291l2.9 2.9l-2.9 2.9l-2.9 -2.9zM871.7 293.1l2.9 2.9l-2.9 2.9l-2.9 -2.9zM871.9 295.1l2.9 2.9l-2.9 2.9l-2.9 -2.9zM872.5 297.2l2.9 2.9l-2.9 2.9l-2.9 -2.9zM872.9 299.3l2.9 2.9l-2.9 2.9l-2.9 -2.9zM873.2 301.3l2.9 2.9l-2.9 2.9l-2.9 -2.9zM873.2 303.4l2.9 2.9l-2.9 2.9l-2.9 -2.9zM873.6 305.4l2.9 2.9l-2.9 2.9l-2.9 -2.9zM873.2 305.4l2.9 2.9l-2.9 2.9l-2.9 -2.9zM873.8 303.4l2.9 2.9l-2.9 2.9l-2.9 -2.9zM873.1 301.3l2.9 2.9l-2.9 2.9l-2.9 -2.9zM873.4 299.3l2.9 2.9l-2.9 2.9l-2.9 -2.9zM873.9 297.2l2.9 2.9l-2.9 2.9l-2.9 -2.9zM873.8 295.2l2.9 2.9l-2.9 2.9l-2.9 -2.9zM874.4 293.1l2.9 2.9l-2.9 2.9l-2.9 -2.9zM874.5 291.1l2.9 2.9l-2.9 2.9l-2.9 -2.9zM874.6 289l2.9 2.9l-2.9 2.9l-2.9 -2.9zM875.1 287l2.9 2.9l-2.9 2.9l-2.9 -2.9zM875 284.9l2.9 2.9l-2.9 2.9l-2.9 -2.9zM874.9 282.9l2.9 2.9l-2.9 2.9l-2.9 -2.9zM875.1 280.8l2.9 2.9l-2.9 2.9l-2.9 -2.9zM875.8 278.8l2.9 2.9l-2.9 2.9l-2.9 -2.9zM876 276.7l2.9 2.9l-2.9 2.9l-2.9 -2.9zM875.5 274.7l2.9 2.9l-2.9 2.9l-2.9 -2.9zM876.3 272.6l2.9 2.9l-2.9 2.9l-2.9 -2.9zM876.6 270.6l2.9 2.9l-2.9 2.9l-2.9 -2.9zM876.3 268.5l2.9 2.9l-2.9 2.9l-2.9 -2.9zM876.5 266.5l2.9 2.9l-2.9 2.9l-2.9 -2.9zM876.3 264.4l2.9 2.9l-2.9 2.9l-2.9 -2.9zM876.8 262.4l2.9 2.9l-2.9 2.9l-2.9 -2.9zM876.9 260.3l2.9 2.9l-2.9 2.9l-2.9 -2.9zM877.2 258.3l2.9 2.9l-2.9 2.9l-2.9 -2.9zM876.8 256.2l2.9 2.9l-2.9 2.9l-2.9 -2.9zM877.9 254.1l2.9 2.9l-2.9 2.9l-2.9 -2.9zM877.6 252.1l2.9 2.9l-2.9 2.9l-2.9 -2.9zM877.7 250l2.9 2.9l-2.9 2.9l-2.9 -2.9zM878.3 248l2.9 2.9l-2.9 2.9l-2.9 -2.9zM878.2 245.9l2.9 2.9l-2.9 2.9l-2.9 -2.9zM878.3 243.9l2.9 2.9l-2.9 2.9l-2.9 -2.9zM878.7 241.8l2.9 2.9l-2.9 2.9l-2.9 -2.9zM878.2 239.8l2.9 2.9l-2.9 2.9l-2.9 -2.9zM878.8 237.7l2.9 2.9l-2.9 2.9l-2.9 -2.9zM878.9 235.7l2.9 2.9l-2.9 2.9l-2.9 -2.9zM879.6 233.6l2.9 2.9l-2.9 2.9l-2.9 -2.9zM879.7 231.6l2.9 2.9l-2.9 2.9l-2.9 -2.9zM879.3 229.5l2.9 2.9l-2.9 2.9l-2.9 -2.9zM879.6 227.5l2.9 2.9l-2.9 2.9l-2.9 -2.9zM879.5 225.4l2.9 2.9l-2.9 2.9l-2.9 -2.9zM879.9 223.4l2.9 2.9l-2.9 2.9l-2.9 -2.9zM880.5 221.3l2.9 2.9l-2.9 2.9l-2.9 -2.9zM880.7 219.3l2.9 2.9l-2.9 2.9l-2.9 -2.9zM880.5 217.2l2.9 2.9l-2.9 2.9l-2.9 -2.9zM880.5 215.2l2.9 2.9l-2.9 2.9l-2.9 -2.9zM880.5 213.1l2.9 2.9l-2.9 2.9l-2.9 -2.9zM881.1 211.1l2.9 2.9l-2.9 2.9l-2.9 -2.9zM881.6 209l2.9 2.9l-2.9 2.9l-2.9 -2.9zM881 207l2.9 2.9l-2.9 2.9l-2.9 -2.9zM881.8 204.9l2.9 2.9l-2.9 2.9l-2.9 -2.9zM881.2 202.9l2.9 2.9l-2.9 2.9l-2.9 -2.9zM881.6 200.8l2.9 2.9l-2.9 2.9l-2.9 -2.9zM881.8 198.8l2.9 2.9l-2.9 2.9l-2.9 -2.9zM882.4 196.7l2.9 2.9l-2.9 2.9l-2.9 -2.9zM882.2 194.7l2.9 2.9l-2.9 2.9l-2.9 -2.9zM882.4 192.6l2.9 2.9l-2.9 2.9l-2.9 -2.9zM882.8 190.6l2.9 2.9l-2.9 2.9l-2.9 -2.9zM882.5 188.5l2.9 2.9l-2.9 2.9l-2.9 -2.9zM883.3 186.5l2.9 2.9l-2.9 2.9l-2.9 -2.9zM882.9 184.4l2.9 2.9l-2.9 2.9l-2.9 -2.9zM883.4 182.4l2.9 2.9l-2.9 2.9l-2.9 -2.9zM904.8 182.1l2.9 2.9l-2.9 2.9l-2.9 -2.9zM905.3 187.3l2.9 2.9l-2.9 2.9l-2.9 -2.9zM905.8 192.8l2.9 2.9l-2.9 2.9l-2.9 -2.9zM906.4 198.7l2.9 2.9l-2.9 2.9l-2.9 -2.9zM906.4 202.6l2.9 2.9l-2.9 2.9l-2.9 -2.9zM906.6 204.7l2.9 2.9l-2.9 2.9l-2.9 -2.9zM907.1 206.7l2.9 2.9l-2.9 2.9l-2.9 -2.9zM907.2 208.8l2.9 2.9l-2.9 2.9l-2.9 -2.9zM907.3 210.8l2.9 2.9l-2.9 2.9l-2.9 -2.9zM907.5 212.9l2.9 2.9l-2.9 2.9l-2.9 -2.9zM907.8 215l2.9 2.9l-2.9 2.9l-2.9 -2.9zM907.6 217l2.9 2.9l-2.9 2.9l-2.9 -2.9zM907.9 219.1l2.9 2.9l-2.9 2.9l-2.9 -2.9zM908.5 221.1l2.9 2.9l-2.9 2.9l-2.9 -2.9zM908.7 223.2l2.9 2.9l-2.9 2.9l-2.9 -2.9zM908.8 225.2l2.9 2.9l-2.9 2.9l-2.9 -2.9zM909.3 227.3l2.9 2.9l-2.9 2.9l-2.9 -2.9zM909.2 229.3l2.9 2.9l-2.9 2.9l-2.9 -2.9zM909.6 231.4l2.9 2.9l-2.9 2.9l-2.9 -2.9zM909.2 233.4l2.9 2.9l-2.9 2.9l-2.9 -2.9zM909.9 235.5l2.9 2.9l-2.9 2.9l-2.9 -2.9zM910.2 237.5l2.9 2.9l-2.9 2.9l-2.9 -2.9zM910.4 239.6l2.9 2.9l-2.9 2.9l-2.9 -2.9zM910 241.6l2.9 2.9l-2.9 2.9l-2.9 -2.9zM910.2 243.7l2.9 2.9l-2.9 2.9l-2.9 -2.9zM911 245.7l2.9 2.9l-2.9 2.9l-2.9 -2.9zM910.5 247.8l2.9 2.9l-2.9 2.9l-2.9 -2.9zM911.5 249.9l2.9 2.9l-2.9 2.9l-2.9 -2.9zM911.5 251.9l2.9 2.9l-2.9 2.9l-2.9 -2.9zM911 254l2.9 2.9l-2.9 2.9l-2.9 -2.9zM911.3 256l2.9 2.9l-2.9 2.9l-2.9 -2.9zM911.9 258.1l2.9 2.9l-2.9 2.9l-2.9 -2.9zM911.7 260.1l2.9 2.9l-2.9 2.9l-2.9 -2.9zM911.7 262.2l2.9 2.9l-2.9 2.9l-2.9 -2.9zM912.6 264.2l2.9 2.9l-2.9 2.9l-2.9 -2.9zM912.4 266.3l2.9 2.9l-2.9 2.9l-2.9 -2.9zM912.9 268.3l2.9 2.9l-2.9 2.9l-2.9 -2.9zM912.5 270.4l2.9 2.9l-2.9 2.9l-2.9 -2.9zM912.9 272.4l2.9 2.9l-2.9 2.9l-2.9 -2.9zM913.4 274.5l2.9 2.9l-2.9 2.9l-2.9 -2.9zM912.9 276.5l2.9 2.9l-2.9 2.9l-2.9 -2.9zM913.3 278.6l2.9 2.9l-2.9 2.9l-2.9 -2.9zM914 280.6l2.9 2.9l-2.9 2.9l-2.9 -2.9zM914.4 282.7l2.9 2.9l-2.9 2.9l-2.9 -2.9zM914.6 284.7l2.9 2.9l-2.9 2.9l-2.9 -2.9zM913.9 286.8l2.9 2.9l-2.9 2.9l-2.9 -2.9zM914.5 288.9l2.9 2.9l-2.9 2.9l-2.9 -2.9zM915 290.9l2.9 2.9l-2.9 2.9l-2.9 -2.9zM914.9 293l2.9 2.9l-2.9 2.9l-2.9 -2.9zM915.3 295l2.9 2.9l-2.9 2.9l-2.9 -2.9zM915 297.1l2.9 2.9l-2.9 2.9l-2.9 -2.9zM915 299.1l2.9 2.9l-2.9 2.9l-2.9 -2.9zM915.2 301.2l2.9 2.9l-2.9 2.9l-2.9 -2.9zM915.4 303.2l2.9 2.9l-2.9 2.9l-2.9 -2.9zM916.1 305.3l2.9 2.9l-2.9 2.9l-2.9 -2.9zM916.2 307.3l2.9 2.9l-2.9 2.9l-2.9 -2.9zM916.3 307.3l2.9 2.9l-2.9 2.9l-2.9 -2.9zM916 305.2l2.9 2.9l-2.9 2.9l-2.9 -2.9zM916.2 303.2l2.9 2.9l-2.9 2.9l-2.9 -2.9zM916.4 301.1l2.9 2.9l-2.9 2.9l-2.9 -2.9zM917.2 299l2.9 2.9l-2.9 2.9l-2.9 -2.9zM917.6 296.9l2.9 2.9l-2.9 2.9l-2.9 -2.9zM917.7 294.8l2.9 2.9l-2.9 2.9l-2.9 -2.9zM917 292.8l2.9 2.9l-2.9 2.9l-2.9 -2.9zM917.2 290.7l2.9 2.9l-2.9 2.9l-2.9 -2.9zM918.2 288.6l2.9 2.9l-2.9 2.9l-2.9 -2.9zM917.9 286.5l2.9 2.9l-2.9 2.9l-2.9 -2.9zM918.4 284.4l2.9 2.9l-2.9 2.9l-2.9 -2.9zM918.1 282.3l2.9 2.9l-2.9 2.9l-2.9 -2.9zM918.5 280.3l2.9 2.9l-2.9 2.9l-2.9 -2.9zM918.7 278.2l2.9 2.9l-2.9 2.9l-2.9 -2.9zM918.8 276.1l2.9 2.9l-2.9 2.9l-2.9 -2.9zM919.1 274l2.9 2.9l-2.9 2.9l-2.9 -2.9zM918.7 271.9l2.9 2.9l-2.9 2.9l-2.9 -2.9zM919.6 269.8l2.9 2.9l-2.9 2.9l-2.9 -2.9zM919.9 267.8l2.9 2.9l-2.9 2.9l-2.9 -2.9zM919.4 265.7l2.9 2.9l-2.9 2.9l-2.9 -2.9zM919.9 263.6l2.9 2.9l-2.9 2.9l-2.9 -2.9zM920.3 261.5l2.9 2.9l-2.9 2.9l-2.9 -2.9zM920.2 259.4l2.9 2.9l-2.9 2.9l-2.9 -2.9zM920.1 257.3l2.9 2.9l-2.9 2.9l-2.9 -2.9zM920.3 255.3l2.9 2.9l-2.9 2.9l-2.9 -2.9zM920.8 253.2l2.9 2.9l-2.9 2.9l-2.9 -2.9zM920.5 251.1l2.9 2.9l-2.9 2.9l-2.9 -2.9zM921.5 249l2.9 2.9l-2.9 2.9l-2.9 -2.9zM921.6 246.9l2.9 2.9l-2.9 2.9l-2.9 -2.9zM921.7 244.8l2.9 2.9l-2.9 2.9l-2.9 -2.9zM922 242.8l2.9 2.9l-2.9 2.9l-2.9 -2.9zM922 240.7l2.9 2.9l-2.9 2.9l-2.9 -2.9zM921.9 238.6l2.9 2.9l-2.9 2.9l-2.9 -2.9zM922.3 236.5l2.9 2.9l-2.9 2.9l-2.9 -2.9zM922.4 234.4l2.9 2.9l-2.9 2.9l-2.9 -2.9zM923 232.3l2.9 2.9l-2.9 2.9l-2.9 -2.9zM923 230.3l2.9 2.9l-2.9 2.9l-2.9 -2.9zM922.7 228.2l2.9 2.9l-2.9 2.9l-2.9 -2.9zM923.5 226.1l2.9 2.9l-2.9 2.9l-2.9 -2.9zM923.5 224l2.9 2.9l-2.9 2.9l-2.9 -2.9zM923.7 221.9l2.9 2.9l-2.9 2.9l-2.9 -2.9zM923.9 219.9l2.9 2.9l-2.9 2.9l-2.9 -2.9zM923.7 217.8l2.9 2.9l-2.9 2.9l-2.9 -2.9zM924.4 215.7l2.9 2.9l-2.9 2.9l-2.9 -2.9zM924.5 213.6l2.9 2.9l-2.9 2.9l-2.9 -2.9zM924.5 211.5l2.9 2.9l-2.9 2.9l-2.9 -2.9zM924.8 209.4l2.9 2.9l-2.9 2.9l-2.9 -2.9zM924.9 207.4l2.9 2.9l-2.9 2.9l-2.9 -2.9zM924.8 205.3l2.9 2.9l-2.9 2.9l-2.9 -2.9zM925.3 203.2l2.9 2.9l-2.9 2.9l-2.9 -2.9zM924.8 201.1l2.9 2.9l-2.9 2.9l-2.9 -2.9zM925.2 199l2.9 2.9l-2.9 2.9l-2.9 -2.9zM925.5 196.9l2.9 2.9l-2.9 2.9l-2.9 -2.9zM925.3 194.9l2.9 2.9l-2.9 2.9l-2.9 -2.9zM925.8 192.8l2.9 2.9l-2.9 2.9l-2.9 -2.9zM926.2 190.7l2.9 2.9l-2.9 2.9l-2.9 -2.9zM926.4 188.6l2.9 2.9l-2.9 2.9l-2.9 -2.9zM926.2 186.5l2.9 2.9l-2.9 2.9l-2.9 -2.9zM927.1 184.4l2.9 2.9l-2.9 2.9l-2.9 -2.9zM927 182.4l2.9 2.9l-2.9 2.9l-2.9 -2.9zM926.6 182.1l2.9 2.9l-2.9 2.9l-2.9 -2.9zM927.1 184.2l2.9 2.9l-2.9 2.9l-2.9 -2.9zM927.2 186.2l2.9 2.9l-2.9 2.9l-2.9 -2.9zM927.4 188.3l2.9 2.9l-2.9 2.9l-2.9 -2.9zM927.4 190.3l2.9 2.9l-2.9 2.9l-2.9 -2.9zM928.2 192.4l2.9 2.9l-2.9 2.9l-2.9 -2.9zM928 194.4l2.9 2.9l-2.9 2.9l-2.9 -2.9zM928.3 196.5l2.9 2.9l-2.9 2.9l-2.9 -2.9zM928.5 198.5l2.9 2.9l-2.9 2.9l-2.9 -2.9zM928.9 200.6l2.9 2.9l-2.9 2.9l-2.9 -2.9zM928.2 202.6l2.9 2.9l-2.9 2.9l-2.9 -2.9zM928.9 204.7l2.9 2.9l-2.9 2.9l-2.9 -2.9zM929.2 206.7l2.9 2.9l-2.9 2.9l-2.9 -2.9zM928.9 208.8l2.9 2.9l-2.9 2.9l-2.9 -2.9zM929.3 210.8l2.9 2.9l-2.9 2.9l-2.9 -2.9zM929.1 212.9l2.9 2.9l-2.9 2.9l-2.9 -2.9zM929.4 215l2.9 2.9l-2.9 2.9l-2.9 -2.9zM929.8 217l2.9 2.9l-2.9 2.9l-2.9 -2.9zM929.7 219.1l2.9 2.9l-2.9 2.9l-2.9 -2.9zM930 221.1l2.9 2.9l-2.9 2.9l-2.9 -2.9zM930.9 223.2l2.9 2.9l-2.9 2.9l-2.9 -2.9zM930.7 225.2l2.9 2.9l-2.9 2.9l-2.9 -2.9zM930.8 227.3l2.9 2.9l-2.9 2.9l-2.9 -2.9zM931.5 229.3l2.9 2.9l-2.9 2.9l-2.9 -2.9zM931.3 231.4l2.9 2.9l-2.9 2.9l-2.9 -2.9zM931.9 233.4l2.9 2.9l-2.9 2.9l-2.9 -2.9zM931.7 235.5l2.9 2.9l-2.9 2.9l-2.9 -2.9zM932.1 237.5l2.9 2.9l-2.9 2.9l-2.9 -2.9zM931.5 239.6l2.9 2.9l-2.9 2.9l-2.9 -2.9zM932.2 241.6l2.9 2.9l-2.9 2.9l-2.9 -2.9zM932.6 243.7l2.9 2.9l-2.9 2.9l-2.9 -2.9zM932 245.7l2.9 2.9l-2.9 2.9l-2.9 -2.9zM933.1 247.8l2.9 2.9l-2.9 2.9l-2.9 -2.9zM932.5 249.9l2.9 2.9l-2.9 2.9l-2.9 -2.9zM933 251.9l2.9 2.9l-2.9 2.9l-2.9 -2.9zM932.9 254l2.9 2.9l-2.9 2.9l-2.9 -2.9zM933.4 256l2.9 2.9l-2.9 2.9l-2.9 -2.9zM933.7 258.1l2.9 2.9l-2.9 2.9l-2.9 -2.9zM933.3 260.1l2.9 2.9l-2.9 2.9l-2.9 -2.9zM934.4 262.2l2.9 2.9l-2.9 2.9l-2.9 -2.9zM934.1 264.2l2.9 2.9l-2.9 2.9l-2.9 -2.9zM934.4 266.3l2.9 2.9l-2.9 2.9l-2.9 -2.9zM934.6 268.3l2.9 2.9l-2.9 2.9l-2.9 -2.9zM934.6 270.4l2.9 2.9l-2.9 2.9l-2.9 -2.9zM934.7 272.4l2.9 2.9l-2.9 2.9l-2.9 -2.9zM935.2 274.5l2.9 2.9l-2.9 2.9l-2.9 -2.9zM935.3 276.5l2.9 2.9l-2.9 2.9l-2.9 -2.9zM935.2 278.6l2.9 2.9l-2.9 2.9l-2.9 -2.9zM935.8 280.6l2.9 2.9l-2.9 2.9l-2.9 -2.9zM935.6 282.7l2.9 2.9l-2.9 2.9l-2.9 -2.9zM935.5 284.7l2.9 2.9l-2.9 2.9l-2.9 -2.9zM935.9 286.8l2.9 2.9l-2.9 2.9l-2.9 -2.9zM935.9 288.9l2.9 2.9l-2.9 2.9l-2.9 -2.9zM936.2 290.9l2.9 2.9l-2.9 2.9l-2.9 -2.9zM937 293l2.9 2.9l-2.9 2.9l-2.9 -2.9zM936.8 295l2.9 2.9l-2.9 2.9l-2.9 -2.9zM937.5 297.1l2.9 2.9l-2.9 2.9l-2.9 -2.9zM937.5 299.1l2.9 2.9l-2.9 2.9l-2.9 -2.9zM937 301.2l2.9 2.9l-2.9 2.9l-2.9 -2.9zM938.1 303.2l2.9 2.9l-2.9 2.9l-2.9 -2.9zM938.3 305.3l2.9 2.9l-2.9 2.9l-2.9 -2.9zM937.6 307.3l2.9 2.9l-2.9 2.9l-2.9 -2.9zM938.4 307.3l2.9 2.9l-2.9 2.9l-2.9 -2.9zM938.1 305.2l2.9 2.9l-2.9 2.9l-2.9 -2.9zM938.3 303.2l2.9 2.9l-2.9 2.9l-2.9 -2.9zM939 301.1l2.9 2.9l-2.9 2.9l-2.9 -2.9zM938.4 299l2.9 2.9l-2.9 2.9l-2.9 -2.9zM938.9 296.9l2.9 2.9l-2.9 2.9l-2.9 -2.9zM939.4 294.8l2.9 2.9l-2.9 2.9l-2.9 -2.9zM939.4 292.8l2.9 2.9l-2.9 2.9l-2.9 -2.9zM939.3 290.7l2.9 2.9l-2.9 2.9l-2.9 -2.9zM940 288.6l2.9 2.9l-2.9 2.9l-2.9 -2.9zM940 286.5l2.9 2.9l-2.9 2.9l-2.9 -2.9zM939.9 284.4l2.9 2.9l-2.9 2.9l-2.9 -2.9zM939.6 282.3l2.9 2.9l-2.9 2.9l-2.9 -2.9zM940.3 280.3l2.9 2.9l-2.9 2.9l-2.9 -2.9zM940.3 278.2l2.9 2.9l-2.9 2.9l-2.9 -2.9zM940.2 276.1l2.9 2.9l-2.9 2.9l-2.9 -2.9zM940.2 274l2.9 2.9l-2.9 2.9l-2.9 -2.9zM940.9 271.9l2.9 2.9l-2.9 2.9l-2.9 -2.9zM940.6 269.8l2.9 2.9l-2.9 2.9l-2.9 -2.9zM941.1 267.8l2.9 2.9l-2.9 2.9l-2.9 -2.9zM941.5 265.7l2.9 2.9l-2.9 2.9l-2.9 -2.9zM941.5 263.6l2.9 2.9l-2.9 2.9l-2.9 -2.9zM941.4 261.5l2.9 2.9l-2.9 2.9l-2.9 -2.9zM941.9 259.4l2.9 2.9l-2.9 2.9l-2.9 -2.9zM941.9 257.3l2.9 2.9l-2.9 2.9l-2.9 -2.9zM942.4 255.3l2.9 2.9l-2.9 2.9l-2.9 -2.9zM942.4 253.2l2.9 2.9l-2.9 2.9l-2.9 -2.9zM943 251.1l2.9 2.9l-2.9 2.9l-2.9 -2.9zM943.1 249l2.9 2.9l-2.9 2.9l-2.9 -2.9zM943.1 246.9l2.9 2.9l-2.9 2.9l-2.9 -2.9zM942.7 244.8l2.9 2.9l-2.9 2.9l-2.9 -2.9zM942.8 242.8l2.9 2.9l-2.9 2.9l-2.9 -2.9zM943.7 240.7l2.9 2.9l-2.9 2.9l-2.9 -2.9zM943.8 238.6l2.9 2.9l-2.9 2.9l-2.9 -2.9zM943.8 236.5l2.9 2.9l-2.9 2.9l-2.9 -2.9zM943.7 234.4l2.9 2.9l-2.9 2.9l-2.9 -2.9zM943.8 232.3l2.9 2.9l-2.9 2.9l-2.9 -2.9zM944.4 230.3l2.9 2.9l-2.9 2.9l-2.9 -2.9zM944.4 228.2l2.9 2.9l-2.9 2.9l-2.9 -2.9zM944.6 226.1l2.9 2.9l-2.9 2.9l-2.9 -2.9zM944.8 224l2.9 2.9l-2.9 2.9l-2.9 -2.9zM945.1 221.9l2.9 2.9l-2.9 2.9l-2.9 -2.9zM944.7 219.9l2.9 2.9l-2.9 2.9l-2.9 -2.9zM944.9 217.8l2.9 2.9l-2.9 2.9l-2.9 -2.9zM945.8 215.7l2.9 2.9l-2.9 2.9l-2.9 -2.9zM945.9 213.6l2.9 2.9l-2.9 2.9l-2.9 -2.9zM946 211.5l2.9 2.9l-2.9 2.9l-2.9 -2.9zM945.4 209.4l2.9 2.9l-2.9 2.9l-2.9 -2.9zM945.6 207.4l2.9 2.9l-2.9 2.9l-2.9 -2.9zM945.9 205.3l2.9 2.9l-2.9 2.9l-2.9 -2.9zM946.3 203.2l2.9 2.9l-2.9 2.9l-2.9 -2.9zM946.6 201.1l2.9 2.9l-2.9 2.9l-2.9 -2.9zM946.3 199l2.9 2.9l-2.9 2.9l-2.9 -2.9zM946.9 196.9l2.9 2.9l-2.9 2.9l-2.9 -2.9zM946.6 194.9l2.9 2.9l-2.9 2.9l-2.9 -2.9zM946.8 192.8l2.9 2.9l-2.9 2.9l-2.9 -2.9zM947.5 190.7l2.9 2.9l-2.9 2.9l-2.9 -2.9zM947.6 188.6l2.9 2.9l-2.9 2.9l-2.9 -2.9zM947.8 186.5l2.9 2.9l-2.9 2.9l-2.9 -2.9zM947.7 184.4l2.9 2.9l-2.9 2.9l-2.9 -2.9zM948 182.4l2.9 2.9l-2.9 2.9l-2.9 -2.9zM947.7 182.1l2.9 2.9l-2.9 2.9l-2.9 -2.9zM948 184.2l2.9 2.9l-2.9 2.9l-2.9 -2.9zM948.6 186.2l2.9 2.9l-2.9 2.9l-2.9 -2.9zM948.9 188.3l2.9 2.9l-2.9 2.9l-2.9 -2.9zM948.3 190.3l2.9 2.9l-2.9 2.9l-2.9 -2.9zM948.6 192.4l2.9 2.9l-2.9 2.9l-2.9 -2.9zM949.4 194.4l2.9 2.9l-2.9 2.9l-2.9 -2.9zM949.4 196.5l2.9 2.9l-2.9 2.9l-2.9 -2.9zM949.8 198.5l2.9 2.9l-2.9 2.9l-2.9 -2.9zM949.4 200.6l2.9 2.9l-2.9 2.9l-2.9 -2.9zM949.8 202.6l2.9 2.9l-2.9 2.9l-2.9 -2.9zM949.8 204.7l2.9 2.9l-2.9 2.9l-2.9 -2.9zM950.6 206.7l2.9 2.9l-2.9 2.9l-2.9 -2.9zM950.3 208.8l2.9 2.9l-2.9 2.9l-2.9 -2.9zM950.8 210.8l2.9 2.9l-2.9 2.9l-2.9 -2.9zM951.3 212.9l2.9 2.9l-2.9 2.9l-2.9 -2.9zM950.8 215l2.9 2.9l-2.9 2.9l-2.9 -2.9zM951.2 217l2.9 2.9l-2.9 2.9l-2.9 -2.9zM951.6 219.1l2.9 2.9l-2.9 2.9l-2.9 -2.9zM952 221.1l2.9 2.9l-2.9 2.9l-2.9 -2.9zM951.7 223.2l2.9 2.9l-2.9 2.9l-2.9 -2.9zM951.8 225.2l2.9 2.9l-2.9 2.9l-2.9 -2.9zM951.7 227.3l2.9 2.9l-2.9 2.9l-2.9 -2.9zM952.7 229.3l2.9 2.9l-2.9 2.9l-2.9 -2.9zM952.1 231.4l2.9 2.9l-2.9 2.9l-2.9 -2.9zM952.3 233.4l2.9 2.9l-2.9 2.9l-2.9 -2.9zM952.9 235.5l2.9 2.9l-2.9 2.9l-2.9 -2.9zM953 237.5l2.9 2.9l-2.9 2.9l-2.9 -2.9zM953.4 239.6l2.9 2.9l-2.9 2.9l-2.9 -2.9zM953.2 241.6l2.9 2.9l-2.9 2.9l-2.9 -2.9zM953.9 243.7l2.9 2.9l-2.9 2.9l-2.9 -2.9zM953.4 245.7l2.9 2.9l-2.9 2.9l-2.9 -2.9zM953.7 247.8l2.9 2.9l-2.9 2.9l-2.9 -2.9zM954.3 249.9l2.9 2.9l-2.9 2.9l-2.9 -2.9zM953.9 251.9l2.9 2.9l-2.9 2.9l-2.9 -2.9zM954.3 254l2.9 2.9l-2.9 2.9l-2.9 -2.9zM955 256l2.9 2.9l-2.9 2.9l-2.9 -2.9zM955.1 258.1l2.9 2.9l-2.9 2.9l-2.9 -2.9zM954.9 260.1l2.9 2.9l-2.9 2.9l-2.9 -2.9zM954.9 262.2l2.9 2.9l-2.9 2.9l-2.9 -2.9zM955.3 264.2l2.9 2.9l-2.9 2.9l-2.9 -2.9zM955.9 266.3l2.9 2.9l-2.9 2.9l-2.9 -2.9zM955.7 268.3l2.9 2.9l-2.9 2.9l-2.9 -2.9zM955.7 270.4l2.9 2.9l-2.9 2.9l-2.9 -2.9zM956.4 272.4l2.9 2.9l-2.9 2.9l-2.9 -2.9zM956.5 274.5l2.9 2.9l-2.9 2.9l-2.9 -2.9zM957 276.5l2.9 2.9l-2.9 2.9l-2.9 -2.9zM957.2 278.6l2.9 2.9l-2.9 2.9l-2.9 -2.9zM957.4 280.6l2.9 2.9l-2.9 2.9l-2.9 -2.9zM957.1 282.7l2.9 2.9l-2.9 2.9l-2.9 -2.9zM957.6 284.7l2.9 2.9l-2.9 2.9l-2.9 -2.9zM957.3 286.8l2.9 2.9l-2.9 2.9l-2.9 -2.9zM957.5 288.9l2.9 2.9l-2.9 2.9l-2.9 -2.9zM957.8 290.9l2.9 2.9l-2.9 2.9l-2.9 -2.9zM958.5 293l2.9 2.9l-2.9 2.9l-2.9 -2.9zM958.7 295l2.9 2.9l-2.9 2.9l-2.9 -2.9zM958.2 297.1l2.9 2.9l-2.9 2.9l-2.9 -2.9zM958.5 299.1l2.9 2.9l-2.9 2.9l-2.9 -2.9zM958.7 301.2l2.9 2.9l-2.9 2.9l-2.9 -2.9zM958.9 303.2l2.9 2.9l-2.9 2.9l-2.9 -2.9zM959.1 305.3l2.9 2.9l-2.9 2.9l-2.9 -2.9zM959.3 307.3l2.9 2.9l-2.9 2.9l-2.9 -2.9zM959.1 307.3l2.9 2.9l-2.9 2.9l-2.9 -2.9zM959.6 305.2l2.9 2.9l-2.9 2.9l-2.9 -2.9zM960 303.2l2.9 2.9l-2.9 2.9l-2.9 -2.9zM959.9 301.1l2.9 2.9l-2.9 2.9l-2.9 -2.9zM960.4 299l2.9 2.9l-2.9 2.9l-2.9 -2.9zM960.3 296.9l2.9 2.9l-2.9 2.9l-2.9 -2.9zM960.1 294.8l2.9 2.9l-2.9 2.9l-2.9 -2.9zM960.8 292.8l2.9 2.9l-2.9 2.9l-2.9 -2.9zM961.1 290.7l2.9 2.9l-2.9 2.9l-2.9 -2.9zM960.7 288.6l2.9 2.9l-2.9 2.9l-2.9 -2.9zM960.6 286.5l2.9 2.9l-2.9 2.9l-2.9 -2.9zM961.2 284.4l2.9 2.9l-2.9 2.9l-2.9 -2.9zM961.4 282.3l2.9 2.9l-2.9 2.9l-2.9 -2.9zM961.6 280.3l2.9 2.9l-2.9 2.9l-2.9 -2.9zM962.2 278.2l2.9 2.9l-2.9 2.9l-2.9 -2.9zM962 276.1l2.9 2.9l-2.9 2.9l-2.9 -2.9zM962.3 274l2.9 2.9l-2.9 2.9l-2.9 -2.9zM961.7 271.9l2.9 2.9l-2.9 2.9l-2.9 -2.9zM962.4 269.8l2.9 2.9l-2.9 2.9l-2.9 -2.9zM962.8 267.8l2.9 2.9l-2.9 2.9l-2.9 -2.9zM962.3 265.7l2.9 2.9l-2.9 2.9l-2.9 -2.9zM962.4 263.6l2.9 2.9l-2.9 2.9l-2.9 -2.9zM963.2 261.5l2.9 2.9l-2.9 2.9l-2.9 -2.9zM963.6 259.4l2.9 2.9l-2.9 2.9l-2.9 -2.9zM962.9 257.3l2.9 2.9l-2.9 2.9l-2.9 -2.9zM963.6 255.3l2.9 2.9l-2.9 2.9l-2.9 -2.9zM963.3 253.2l2.9 2.9l-2.9 2.9l-2.9 -2.9zM964.1 251.1l2.9 2.9l-2.9 2.9l-2.9 -2.9zM964.1 249l2.9 2.9l-2.9 2.9l-2.9 -2.9zM963.9 246.9l2.9 2.9l-2.9 2.9l-2.9 -2.9zM964 244.8l2.9 2.9l-2.9 2.9l-2.9 -2.9zM964.7 242.8l2.9 2.9l-2.9 2.9l-2.9 -2.9zM964.6 240.7l2.9 2.9l-2.9 2.9l-2.9 -2.9zM965.1 238.6l2.9 2.9l-2.9 2.9l-2.9 -2.9zM964.8 236.5l2.9 2.9l-2.9 2.9l-2.9 -2.9zM965 234.4l2.9 2.9l-2.9 2.9l-2.9 -2.9zM965.7 232.3l2.9 2.9l-2.9 2.9l-2.9 -2.9zM965.6 230.3l2.9 2.9l-2.9 2.9l-2.9 -2.9zM965.6 228.2l2.9 2.9l-2.9 2.9l-2.9 -2.9zM965.8 226.1l2.9 2.9l-2.9 2.9l-2.9 -2.9zM966.2 224l2.9 2.9l-2.9 2.9l-2.9 -2.9zM966.3 221.9l2.9 2.9l-2.9 2.9l-2.9 -2.9zM966.7 219.9l2.9 2.9l-2.9 2.9l-2.9 -2.9zM966.3 217.8l2.9 2.9l-2.9 2.9l-2.9 -2.9zM966.9 215.7l2.9 2.9l-2.9 2.9l-2.9 -2.9zM966.9 213.6l2.9 2.9l-2.9 2.9l-2.9 -2.9zM967.3 211.5l2.9 2.9l-2.9 2.9l-2.9 -2.9zM967.4 209.4l2.9 2.9l-2.9 2.9l-2.9 -2.9zM967.6 207.4l2.9 2.9l-2.9 2.9l-2.9 -2.9zM967.8 205.3l2.9 2.9l-2.9 2.9l-2.9 -2.9zM968 203.2l2.9 2.9l-2.9 2.9l-2.9 -2.9zM967.9 201.1l2.9 2.9l-2.9 2.9l-2.9 -2.9zM967.9 199l2.9 2.9l-2.9 2.9l-2.9 -2.9zM968.3 196.9l2.9 2.9l-2.9 2.9l-2.9 -2.9zM968.5 194.9l2.9 2.9l-2.9 2.9l-2.9 -2.9zM968.3 192.8l2.9 2.9l-2.9 2.9l-2.9 -2.9zM968.5 190.7l2.9 2.9l-2.9 2.9l-2.9 -2.9zM968.4 188.6l2.9 2.9l-2.9 2.9l-2.9 -2.9zM969.1 186.5l2.9 2.9l-2.9 2.9l-2.9 -2.9zM969.5 184.4l2.9 2.9l-2.9 2.9l-2.9 -2.9zM969.1 182.4l2.9 2.9l-2.9 2.9l-2.9 -2.9zM968.9 182.1l2.9 2.9l-2.9 2.9l-2.9 -2.9zM969.1 184.2l2.9 2.9l-2.9 2.9l-2.9 -2.9zM969.5 186.2l2.9 2.9l-2.9 2.9l-2.9 -2.9zM969.6 188.3l2.9 2.9l-2.9 2.9l-2.9 -2.9zM970.4 190.3l2.9 2.9l-2.9 2.9l-2.9 -2.9zM969.7 192.4l2.9 2.9l-2.9 2.9l-2.9 -2.9zM970.1 194.4l2.9 2.9l-2.9 2.9l-2.9 -2.9zM970.1 196.5l2.9 2.9l-2.9 2.9l-2.9 -2.9zM970.9 198.5l2.9 2.9l-2.9 2.9l-2.9 -2.9zM971.2 200.6l2.9 2.9l-2.9 2.9l-2.9 -2.9zM970.8 202.6l2.9 2.9l-2.9 2.9l-2.9 -2.9zM970.9 204.7l2.9 2.9l-2.9 2.9l-2.9 -2.9zM971.4 206.7l2.9 2.9l-2.9 2.9l-2.9 -2.9zM971.8 208.8l2.9 2.9l-2.9 2.9l-2.9 -2.9zM972.3 210.8l2.9 2.9l-2.9 2.9l-2.9 -2.9zM971.6 212.9l2.9 2.9l-2.9 2.9l-2.9 -2.9zM971.9 215l2.9 2.9l-2.9 2.9l-2.9 -2.9zM972.1 217l2.9 2.9l-2.9 2.9l-2.9 -2.9zM972.3 219.1l2.9 2.9l-2.9 2.9l-2.9 -2.9zM972.5 221.1l2.9 2.9l-2.9 2.9l-2.9 -2.9zM973.2 223.2l2.9 2.9l-2.9 2.9l-2.9 -2.9zM973.3 225.2l2.9 2.9l-2.9 2.9l-2.9 -2.9zM973.1 227.3l2.9 2.9l-2.9 2.9l-2.9 -2.9zM973.3 229.3l2.9 2.9l-2.9 2.9l-2.9 -2.9zM973.5 231.4l2.9 2.9l-2.9 2.9l-2.9 -2.9zM973.6 233.4l2.9 2.9l-2.9 2.9l-2.9 -2.9zM974.4 235.5l2.9 2.9l-2.9 2.9l-2.9 -2.9zM974.1 237.5l2.9 2.9l-2.9 2.9l-2.9 -2.9zM974.6 239.6l2.9 2.9l-2.9 2.9l-2.9 -2.9zM975 241.6l2.9 2.9l-2.9 2.9l-2.9 -2.9zM974.9 243.7l2.9 2.9l-2.9 2.9l-2.9 -2.9zM974.9 245.7l2.9 2.9l-2.9 2.9l-2.9 -2.9zM975.7 247.8l2.9 2.9l-2.9 2.9l-2.9 -2.9zM975.9 249.9l2.9 2.9l-2.9 2.9l-2.9 -2.9zM975.5 251.9l2.9 2.9l-2.9 2.9l-2.9 -2.9zM975.9 254l2.9 2.9l-2.9 2.9l-2.9 -2.9zM976.5 256l2.9 2.9l-2.9 2.9l-2.9 -2.9zM976.2 258.1l2.9 2.9l-2.9 2.9l-2.9 -2.9zM976.1 260.1l2.9 2.9l-2.9 2.9l-2.9 -2.9zM976.2 262.2l2.9 2.9l-2.9 2.9l-2.9 -2.9zM977.3 264.2l2.9 2.9l-2.9 2.9l-2.9 -2.9zM977.3 266.3l2.9 2.9l-2.9 2.9l-2.9 -2.9zM977.1 268.3l2.9 2.9l-2.9 2.9l-2.9 -2.9zM977.4 270.4l2.9 2.9l-2.9 2.9l-2.9 -2.9zM977.6 272.4l2.9 2.9l-2.9 2.9l-2.9 -2.9zM977.5 274.5l2.9 2.9l-2.9 2.9l-2.9 -2.9zM978.4 276.5l2.9 2.9l-2.9 2.9l-2.9 -2.9zM978.3 278.6l2.9 2.9l-2.9 2.9l-2.9 -2.9zM978.1 280.6l2.9 2.9l-2.9 2.9l-2.9 -2.9zM978 282.7l2.9 2.9l-2.9 2.9l-2.9 -2.9zM978.7 284.7l2.9 2.9l-2.9 2.9l-2.9 -2.9zM978.8 286.8l2.9 2.9l-2.9 2.9l-2.9 -2.9zM979.4 288.9l2.9 2.9l-2.9 2.9l-2.9 -2.9zM979.5 290.9l2.9 2.9l-2.9 2.9l-2.9 -2.9zM979.6 293l2.9 2.9l-2.9 2.9l-2.9 -2.9zM979.3 295l2.9 2.9l-2.9 2.9l-2.9 -2.9zM979.5 297.1l2.9 2.9l-2.9 2.9l-2.9 -2.9zM979.9 299.1l2.9 2.9l-2.9 2.9l-2.9 -2.9zM980 301.2l2.9 2.9l-2.9 2.9l-2.9 -2.9zM980.8 303.2l2.9 2.9l-2.9 2.9l-2.9 -2.9zM980.6 305.3l2.9 2.9l-2.9 2.9l-2.9 -2.9zM980.9 307.3l2.9 2.9l-2.9 2.9l-2.9 -2.9zM981.3 307.3l2.9 2.9l-2.9 2.9l-2.9 -2.9zM980.7 305.2l2.9 2.9l-2.9 2.9l-2.9 -2.9zM981.2 303.2l2.9 2.9l-2.9 2.9l-2.9 -2.9zM981 301.1l2.9 2.9l-2.9 2.9l-2.9 -2.9zM981.8 299l2.9 2.9l-2.9 2.9l-2.9 -2.9zM981.2 296.9l2.9 2.9l-2.9 2.9l-2.9 -2.9zM982.2 294.8l2.9 2.9l-2.9 2.9l-2.9 -2.9zM982.4 292.8l2.9 2.9l-2.9 2.9l-2.9 -2.9zM982.5 290.7l2.9 2.9l-2.9 2.9l-2.9 -2.9zM981.9 288.6l2.9 2.9l-2.9 2.9l-2.9 -2.9zM982.3 286.5l2.9 2.9l-2.9 2.9l-2.9 -2.9zM982.9 284.4l2.9 2.9l-2.9 2.9l-2.9 -2.9zM982.5 282.3l2.9 2.9l-2.9 2.9l-2.9 -2.9zM983 280.3l2.9 2.9l-2.9 2.9l-2.9 -2.9zM983.2 278.2l2.9 2.9l-2.9 2.9l-2.9 -2.9zM983.9 276.1l2.9 2.9l-2.9 2.9l-2.9 -2.9zM983.7 274l2.9 2.9l-2.9 2.9l-2.9 -2.9zM984.1 271.9l2.9 2.9l-2.9 2.9l-2.9 -2.9zM983.7 269.8l2.9 2.9l-2.9 2.9l-2.9 -2.9zM984.4 267.8l2.9 2.9l-2.9 2.9l-2.9 -2.9zM984.2 265.7l2.9 2.9l-2.9 2.9l-2.9 -2.9zM984.9 263.6l2.9 2.9l-2.9 2.9l-2.9 -2.9zM984.2 261.5l2.9 2.9l-2.9 2.9l-2.9 -2.9zM985.1 259.4l2.9 2.9l-2.9 2.9l-2.9 -2.9zM984.7 257.3l2.9 2.9l-2.9 2.9l-2.9 -2.9zM985.2 255.3l2.9 2.9l-2.9 2.9l-2.9 -2.9zM985.3 253.2l2.9 2.9l-2.9 2.9l-2.9 -2.9zM985.1 251.1l2.9 2.9l-2.9 2.9l-2.9 -2.9zM986 249l2.9 2.9l-2.9 2.9l-2.9 -2.9zM985.6 246.9l2.9 2.9l-2.9 2.9l-2.9 -2.9zM985.8 244.8l2.9 2.9l-2.9 2.9l-2.9 -2.9zM985.7 242.8l2.9 2.9l-2.9 2.9l-2.9 -2.9zM986.2 240.7l2.9 2.9l-2.9 2.9l-2.9 -2.9zM986.5 238.6l2.9 2.9l-2.9 2.9l-2.9 -2.9zM986.9 236.5l2.9 2.9l-2.9 2.9l-2.9 -2.9zM986.7 234.4l2.9 2.9l-2.9 2.9l-2.9 -2.9zM987.2 232.3l2.9 2.9l-2.9 2.9l-2.9 -2.9zM986.8 230.3l2.9 2.9l-2.9 2.9l-2.9 -2.9zM987.3 228.2l2.9 2.9l-2.9 2.9l-2.9 -2.9zM987.5 226.1l2.9 2.9l-2.9 2.9l-2.9 -2.9zM988.2 224l2.9 2.9l-2.9 2.9l-2.9 -2.9zM988.2 221.9l2.9 2.9l-2.9 2.9l-2.9 -2.9zM988.2 219.9l2.9 2.9l-2.9 2.9l-2.9 -2.9zM987.8 217.8l2.9 2.9l-2.9 2.9l-2.9 -2.9zM988.3 215.7l2.9 2.9l-2.9 2.9l-2.9 -2.9zM988.8 213.6l2.9 2.9l-2.9 2.9l-2.9 -2.9zM988.5 211.5l2.9 2.9l-2.9 2.9l-2.9 -2.9zM989 209.4l2.9 2.9l-2.9 2.9l-2.9 -2.9zM989.1 207.4l2.9 2.9l-2.9 2.9l-2.9 -2.9zM988.8 205.3l2.9 2.9l-2.9 2.9l-2.9 -2.9zM990 203.2l2.9 2.9l-2.9 2.9l-2.9 -2.9zM989.9 201.1l2.9 2.9l-2.9 2.9l-2.9 -2.9zM989.5 199l2.9 2.9l-2.9 2.9l-2.9 -2.9zM990.1 196.9l2.9 2.9l-2.9 2.9l-2.9 -2.9zM990 194.9l2.9 2.9l-2.9 2.9l-2.9 -2.9zM990.2 192.8l2.9 2.9l-2.9 2.9l-2.9 -2.9zM990.5 190.7l2.9 2.9l-2.9 2.9l-2.9 -2.9zM990.5 188.6l2.9 2.9l-2.9 2.9l-2.9 -2.9zM990.7 186.5l2.9 2.9l-2.9 2.9l-2.9 -2.9zM990.9 184.4l2.9 2.9l-2.9 2.9l-2.9 -2.9zM991.4 182.4l2.9 2.9l-2.9 2.9l-2.9 -2.9zM991 182.1l2.9 2.9l-2.9 2.9l-2.9 -2.9zM991.1 184.2l2.9 2.9l-2.9 2.9l-2.9 -2.9zM991.8 186.2l2.9 2.9l-2.9 2.9l-2.9 -2.9zM991.6 188.3l2.9 2.9l-2.9 2.9l-2.9 -2.9zM992.4 190.3l2.9 2.9l-2.9 2.9l-2.9 -2.9zM992.2 192.4l2.9 2.9l-2.9 2.9l-2.9 -2.9zM992.6 194.4l2.9 2.9l-2.9 2.9l-2.9 -2.9zM992.4 196.5l2.9 2.9l-2.9 2.9l-2.9 -2.9zM993 198.5l2.9 2.9l-2.9 2.9l-2.9 -2.9zM992.5 200.6l2.9 2.9l-2.9 2.9l-2.9 -2.9zM992.7 202.6l2.9 2.9l-2.9 2.9l-2.9 -2.9zM992.9 204.7l2.9 2.9l-2.9 2.9l-2.9 -2.9zM993.7 206.7l2.9 2.9l-2.9 2.9l-2.9 -2.9zM993.9 208.8l2.9 2.9l-2.9 2.9l-2.9 -2.9zM993.5 210.8l2.9 2.9l-2.9 2.9l-2.9 -2.9zM994 212.9l2.9 2.9l-2.9 2.9l-2.9 -2.9zM994.6 215l2.9 2.9l-2.9 2.9l-2.9 -2.9zM994.5 217l2.9 2.9l-2.9 2.9l-2.9 -2.9zM994.2 219.1l2.9 2.9l-2.9 2.9l-2.9 -2.9zM994.5 221.1l2.9 2.9l-2.9 2.9l-2.9 -2.9zM994.7 223.2l2.9 2.9l-2.9 2.9l-2.9 -2.9zM994.8 225.2l2.9 2.9l-2.9 2.9l-2.9 -2.9zM995.3 227.3l2.9 2.9l-2.9 2.9l-2.9 -2.9zM995.1 229.3l2.9 2.9l-2.9 2.9l-2.9 -2.9zM996.2 231.4l2.9 2.9l-2.9 2.9l-2.9 -2.9zM995.9 233.4l2.9 2.9l-2.9 2.9l-2.9 -2.9zM996.2 235.5l2.9 2.9l-2.9 2.9l-2.9 -2.9zM996.5 237.5l2.9 2.9l-2.9 2.9l-2.9 -2.9zM996.8 239.6l2.9 2.9l-2.9 2.9l-2.9 -2.9zM997 241.6l2.9 2.9l-2.9 2.9l-2.9 -2.9zM996.8 243.7l2.9 2.9l-2.9 2.9l-2.9 -2.9zM996.9 245.7l2.9 2.9l-2.9 2.9l-2.9 -2.9zM997.2 247.8l2.9 2.9l-2.9 2.9l-2.9 -2.9zM997 249.9l2.9 2.9l-2.9 2.9l-2.9 -2.9zM997.6 251.9l2.9 2.9l-2.9 2.9l-2.9 -2.9zM998.1 254l2.9 2.9l-2.9 2.9l-2.9 -2.9zM998.5 256l2.9 2.9l-2.9 2.9l-2.9 -2.9zM998.5 258.1l2.9 2.9l-2.9 2.9l-2.9 -2.9zM998.6 260.1l2.9 2.9l-2.9 2.9l-2.9 -2.9zM998.7 262.2l2.9 2.9l-2.9 2.9l-2.9 -2.9zM998.3 264.2l2.9 2.9l-2.9 2.9l-2.9 -2.9zM998.8 266.3l2.9 2.9l-2.9 2.9l-2.9 -2.9zM999 268.3l2.9 2.9l-2.9 2.9l-2.9 -2.9zM999.5 270.4l2.9 2.9l-2.9 2.9l-2.9 -2.9zM999.2 272.4l2.9 2.9l-2.9 2.9l-2.9 -2.9zM999.6 274.5l2.9 2.9l-2.9 2.9l-2.9 -2.9zM1000 276.5l2.9 2.9l-2.9 2.9l-2.9 -2.9zM1000.4 278.6l2.9 2.9l-2.9 2.9l-2.9 -2.9zM1000.7 280.6l2.9 2.9l-2.9 2.9l-2.9 -2.9zM1000.6 282.7l2.9 2.9l-2.9 2.9l-2.9 -2.9zM1000.4 284.7l2.9 2.9l-2.9 2.9l-2.9 -2.9zM1001.2 286.8l2.9 2.9l-2.9 2.9l-2.9 -2.9zM1001.5 288.9l2.9 2.9l-2.9 2.9l-2.9 -2.9zM1001.3 290.9l2.9 2.9l-2.9 2.9l-2.9 -2.9zM1001.3 293l2.9 2.9l-2.9 2.9l-2.9 -2.9zM1001.7 295l2.9 2.9l-2.9 2.9l-2.9 -2.9zM1001.5 297.1l2.9 2.9l-2.9 2.9l-2.9 -2.9zM1002.3 299.1l2.9 2.9l-2.9 2.9l-2.9 -2.9zM1002.7 301.2l2.9 2.9l-2.9 2.9l-2.9 -2.9zM1002.4 303.2l2.9 2.9l-2.9 2.9l-2.9 -2.9zM1002.8 305.3l2.9 2.9l-2.9 2.9l-2.9 -2.9zM1003.1 307.3l2.9 2.9l-2.9 2.9l-2.9 -2.9zM1002.5 307.3l2.9 2.9l-2.9 2.9l-2.9 -2.9zM1003.4 305.2l2.9 2.9l-2.9 2.9l-2.9 -2.9zM1003.3 303.2l2.9 2.9l-2.9 2.9l-2.9 -2.9zM1003 301.1l2.9 2.9l-2.9 2.9l-2.9 -2.9zM1003 299l2.9 2.9l-2.9 2.9l-2.9 -2.9zM1003.4 296.9l2.9 2.9l-2.9 2.9l-2.9 -2.9zM1003.9 294.8l2.9 2.9l-2.9 2.9l-2.9 -2.9zM1004.2 292.8l2.9 2.9l-2.9 2.9l-2.9 -2.9zM1004 290.7l2.9 2.9l-2.9 2.9l-2.9 -2.9zM1004.7 288.6l2.9 2.9l-2.9 2.9l-2.9 -2.9zM1004.3 286.5l2.9 2.9l-2.9 2.9l-2.9 -2.9zM1004.6 284.4l2.9 2.9l-2.9 2.9l-2.9 -2.9zM1004.4 282.3l2.9 2.9l-2.9 2.9l-2.9 -2.9zM1005.4 280.3l2.9 2.9l-2.9 2.9l-2.9 -2.9zM1004.8 278.2l2.9 2.9l-2.9 2.9l-2.9 -2.9zM1005.7 276.1l2.9 2.9l-2.9 2.9l-2.9 -2.9zM1005.5 274l2.9 2.9l-2.9 2.9l-2.9 -2.9zM1005.7 271.9l2.9 2.9l-2.9 2.9l-2.9 -2.9zM1005.9 269.8l2.9 2.9l-2.9 2.9l-2.9 -2.9zM1005.7 267.8l2.9 2.9l-2.9 2.9l-2.9 -2.9zM1006.5 265.7l2.9 2.9l-2.9 2.9l-2.9 -2.9zM1006.8 263.6l2.9 2.9l-2.9 2.9l-2.9 -2.9zM1006.8 261.5l2.9 2.9l-2.9 2.9l-2.9 -2.9zM1006.7 259.4l2.9 2.9l-2.9 2.9l-2.9 -2.9zM1006.4 257.3l2.9 2.9l-2.9 2.9l-2.9 -2.9zM1007.3 255.3l2.9 2.9l-2.9 2.9l-2.9 -2.9zM1006.9 253.2l2.9 2.9l-2.9 2.9l-2.9 -2.9zM1007.7 251.1l2.9 2.9l-2.9 2.9l-2.9 -2.9zM1007.2 249l2.9 2.9l-2.9 2.9l-2.9 -2.9zM1007.7 246.9l2.9 2.9l-2.9 2.9l-2.9 -2.9zM1008.1 244.8l2.9 2.9l-2.9 2.9l-2.9 -2.9zM1007.7 242.8l2.9 2.9l-2.9 2.9l-2.9 -2.9zM1008.2 240.7l2.9 2.9l-2.9 2.9l-2.9 -2.9zM1007.9 238.6l2.9 2.9l-2.9 2.9l-2.9 -2.9zM1008 236.5l2.9 2.9l-2.9 2.9l-2.9 -2.9zM1008.3 234.4l2.9 2.9l-2.9 2.9l-2.9 -2.9zM1009.3 232.3l2.9 2.9l-2.9 2.9l-2.9 -2.9zM1009.4 230.3l2.9 2.9l-2.9 2.9l-2.9 -2.9zM1009.3 228.2l2.9 2.9l-2.9 2.9l-2.9 -2.9zM1009.1 226.1l2.9 2.9l-2.9 2.9l-2.9 -2.9zM1009.6 224l2.9 2.9l-2.9 2.9l-2.9 -2.9zM1009.9 221.9l2.9 2.9l-2.9 2.9l-2.9 -2.9zM1009.7 219.9l2.9 2.9l-2.9 2.9l-2.9 -2.9zM1010.1 217.8l2.9 2.9l-2.9 2.9l-2.9 -2.9zM1010.4 215.7l2.9 2.9l-2.9 2.9l-2.9 -2.9zM1009.8 213.6l2.9 2.9l-2.9 2.9l-2.9 -2.9zM1010.2 211.5l2.9 2.9l-2.9 2.9l-2.9 -2.9zM1010.6 209.4l2.9 2.9l-2.9 2.9l-2.9 -2.9zM1010.4 207.4l2.9 2.9l-2.9 2.9l-2.9 -2.9zM1010.9 205.3l2.9 2.9l-2.9 2.9l-2.9 -2.9zM1011.2 203.2l2.9 2.9l-2.9 2.9l-2.9 -2.9zM1011 201.1l2.9 2.9l-2.9 2.9l-2.9 -2.9zM1011.5 199l2.9 2.9l-2.9 2.9l-2.9 -2.9zM1011.4 196.9l2.9 2.9l-2.9 2.9l-2.9 -2.9zM1011.9 194.9l2.9 2.9l-2.9 2.9l-2.9 -2.9zM1011.8 192.8l2.9 2.9l-2.9 2.9l-2.9 -2.9zM1012.3 190.7l2.9 2.9l-2.9 2.9l-2.9 -2.9zM1011.8 188.6l2.9 2.9l-2.9 2.9l-2.9 -2.9zM1012.6 186.5l2.9 2.9l-2.9 2.9l-2.9 -2.9zM1012.3 184.4l2.9 2.9l-2.9 2.9l-2.9 -2.9zM1013.3 182.4l2.9 2.9l-2.9 2.9l-2.9 -2.9zM1012.9 182.1l2.9 2.9l-2.9 2.9l-2.9 -2.9zM1013 184.2l2.9 2.9l-2.9 2.9l-2.9 -2.9zM1013.1 186.2l2.9 2.9l-2.9 2.9l-2.9 -2.9zM1013.5 188.3l2.9 2.9l-2.9 2.9l-2.9 -2.9zM1013.7 190.3l2.9 2.9l-2.9 2.9l-2.9 -2.9zM1014 192.4l2.9 2.9l-2.9 2.9l-2.9 -2.9zM1014.2 194.4l2.9 2.9l-2.9 2.9l-2.9 -2.9zM1014.1 196.5l2.9 2.9l-2.9 2.9l-2.9 -2.9zM1014.8 198.5l2.9 2.9l-2.9 2.9l-2.9 -2.9zM1014.8 200.6l2.9 2.9l-2.9 2.9l-2.9 -2.9zM1015 202.6l2.9 2.9l-2.9 2.9l-2.9 -2.9zM1014.8 204.7l2.9 2.9l-2.9 2.9l-2.9 -2.9zM1015 206.7l2.9 2.9l-2.9 2.9l-2.9 -2.9zM1015.3 208.8l2.9 2.9l-2.9 2.9l-2.9 -2.9zM1015.8 210.8l2.9 2.9l-2.9 2.9l-2.9 -2.9zM1015.6 212.9l2.9 2.9l-2.9 2.9l-2.9 -2.9zM1015.8 215l2.9 2.9l-2.9 2.9l-2.9 -2.9zM1015.9 217l2.9 2.9l-2.9 2.9l-2.9 -2.9zM1016.6 219.1l2.9 2.9l-2.9 2.9l-2.9 -2.9zM1016.2 221.1l2.9 2.9l-2.9 2.9l-2.9 -2.9zM1016.1 223.2l2.9 2.9l-2.9 2.9l-2.9 -2.9zM1017 225.2l2.9 2.9l-2.9 2.9l-2.9 -2.9zM1017.3 227.3l2.9 2.9l-2.9 2.9l-2.9 -2.9zM1017.3 229.3l2.9 2.9l-2.9 2.9l-2.9 -2.9zM1017.4 231.4l2.9 2.9l-2.9 2.9l-2.9 -2.9zM1017.7 233.4l2.9 2.9l-2.9 2.9l-2.9 -2.9zM1017.5 235.5l2.9 2.9l-2.9 2.9l-2.9 -2.9zM1017.9 237.5l2.9 2.9l-2.9 2.9l-2.9 -2.9zM1017.6 239.6l2.9 2.9l-2.9 2.9l-2.9 -2.9zM1017.8 241.6l2.9 2.9l-2.9 2.9l-2.9 -2.9zM1018.4 243.7l2.9 2.9l-2.9 2.9l-2.9 -2.9zM1018.6 245.7l2.9 2.9l-2.9 2.9l-2.9 -2.9zM1018.7 247.8l2.9 2.9l-2.9 2.9l-2.9 -2.9zM1018.5 249.9l2.9 2.9l-2.9 2.9l-2.9 -2.9zM1019.3 251.9l2.9 2.9l-2.9 2.9l-2.9 -2.9zM1019.4 254l2.9 2.9l-2.9 2.9l-2.9 -2.9zM1019.3 256l2.9 2.9l-2.9 2.9l-2.9 -2.9zM1019.5 258.1l2.9 2.9l-2.9 2.9l-2.9 -2.9zM1019.8 260.1l2.9 2.9l-2.9 2.9l-2.9 -2.9zM1019.8 262.2l2.9 2.9l-2.9 2.9l-2.9 -2.9zM1019.8 264.2l2.9 2.9l-2.9 2.9l-2.9 -2.9zM1020.9 266.3l2.9 2.9l-2.9 2.9l-2.9 -2.9zM1021.1 268.3l2.9 2.9l-2.9 2.9l-2.9 -2.9zM1021 270.4l2.9 2.9l-2.9 2.9l-2.9 -2.9zM1021.4 272.4l2.9 2.9l-2.9 2.9l-2.9 -2.9zM1021.1 274.5l2.9 2.9l-2.9 2.9l-2.9 -2.9zM1021.7 276.5l2.9 2.9l-2.9 2.9l-2.9 -2.9zM1021.3 278.6l2.9 2.9l-2.9 2.9l-2.9 -2.9zM1022 280.6l2.9 2.9l-2.9 2.9l-2.9 -2.9zM1022 282.7l2.9 2.9l-2.9 2.9l-2.9 -2.9zM1022.5 284.7l2.9 2.9l-2.9 2.9l-2.9 -2.9zM1021.9 286.8l2.9 2.9l-2.9 2.9l-2.9 -2.9zM1022.8 288.9l2.9 2.9l-2.9 2.9l-2.9 -2.9zM1022.3 290.9l2.9 2.9l-2.9 2.9l-2.9 -2.9zM1022.9 293l2.9 2.9l-2.9 2.9l-2.9 -2.9zM1023.5 295l2.9 2.9l-2.9 2.9l-2.9 -2.9zM1022.8 297.1l2.9 2.9l-2.9 2.9l-2.9 -2.9zM1023.2 299.1l2.9 2.9l-2.9 2.9l-2.9 -2.9zM1023.4 301.2l2.9 2.9l-2.9 2.9l-2.9 -2.9zM1023.7 303.2l2.9 2.9l-2.9 2.9l-2.9 -2.9zM1023.6 305.3l2.9 2.9l-2.9 2.9l-2.9 -2.9zM1024.6 307.3l2.9 2.9l-2.9 2.9l-2.9 -2.9zM1024.5 307.3l2.9 2.9l-2.9 2.9l-2.9 -2.9zM1024.3 305.2l2.9 2.9l-2.9 2.9l-2.9 -2.9zM1024.4 303.2l2.9 2.9l-2.9 2.9l-2.9 -2.9zM1024.8 301.1l2.9 2.9l-2.9 2.9l-2.9 -2.9zM1024.4 299l2.9 2.9l-2.9 2.9l-2.9 -2.9zM1024.5 296.9l2.9 2.9l-2.9 2.9l-2.9 -2.9zM1025.6 294.8l2.9 2.9l-2.9 2.9l-2.9 -2.9zM1025.2 292.8l2.9 2.9l-2.9 2.9l-2.9 -2.9zM1025.5 290.7l2.9 2.9l-2.9 2.9l-2.9 -2.9zM1026.1 288.6l2.9 2.9l-2.9 2.9l-2.9 -2.9zM1026.3 286.5l2.9 2.9l-2.9 2.9l-2.9 -2.9zM1026 284.4l2.9 2.9l-2.9 2.9l-2.9 -2.9zM1025.9 282.3l2.9 2.9l-2.9 2.9l-2.9 -2.9zM1026.1 280.3l2.9 2.9l-2.9 2.9l-2.9 -2.9zM1026.9 278.2l2.9 2.9l-2.9 2.9l-2.9 -2.9zM1027 276.1l2.9 2.9l-2.9 2.9l-2.9 -2.9zM1026.5 274l2.9 2.9l-2.9 2.9l-2.9 -2.9zM1027.3 271.9l2.9 2.9l-2.9 2.9l-2.9 -2.9zM1027 269.8l2.9 2.9l-2.9 2.9l-2.9 -2.9zM1027.3 267.8l2.9 2.9l-2.9 2.9l-2.9 -2.9zM1027.1 265.7l2.9 2.9l-2.9 2.9l-2.9 -2.9zM1028 263.6l2.9 2.9l-2.9 2.9l-2.9 -2.9zM1028.3 261.5l2.9 2.9l-2.9 2.9l-2.9 -2.9zM1027.7 259.4l2.9 2.9l-2.9 2.9l-2.9 -2.9zM1028.3 257.3l2.9 2.9l-2.9 2.9l-2.9 -2.9zM1028 255.3l2.9 2.9l-2.9 2.9l-2.9 -2.9zM1028.8 253.2l2.9 2.9l-2.9 2.9l-2.9 -2.9zM1028.2 251.1l2.9 2.9l-2.9 2.9l-2.9 -2.9zM1028.4 249l2.9 2.9l-2.9 2.9l-2.9 -2.9zM1029.2 246.9l2.9 2.9l-2.9 2.9l-2.9 -2.9zM1028.9 244.8l2.9 2.9l-2.9 2.9l-2.9 -2.9zM1029.7 242.8l2.9 2.9l-2.9 2.9l-2.9 -2.9zM1029.8 240.7l2.9 2.9l-2.9 2.9l-2.9 -2.9zM1029.8 238.6l2.9 2.9l-2.9 2.9l-2.9 -2.9zM1029.4 236.5l2.9 2.9l-2.9 2.9l-2.9 -2.9zM1030.1 234.4l2.9 2.9l-2.9 2.9l-2.9 -2.9zM1030.5 232.3l2.9 2.9l-2.9 2.9l-2.9 -2.9zM1030.2 230.3l2.9 2.9l-2.9 2.9l-2.9 -2.9zM1030 228.2l2.9 2.9l-2.9 2.9l-2.9 -2.9zM1030.3 226.1l2.9 2.9l-2.9 2.9l-2.9 -2.9zM1030.5 224l2.9 2.9l-2.9 2.9l-2.9 -2.9zM1031.1 221.9l2.9 2.9l-2.9 2.9l-2.9 -2.9zM1030.8 219.9l2.9 2.9l-2.9 2.9l-2.9 -2.9zM1030.9 217.8l2.9 2.9l-2.9 2.9l-2.9 -2.9zM1031.1 215.7l2.9 2.9l-2.9 2.9l-2.9 -2.9zM1031.7 213.6l2.9 2.9l-2.9 2.9l-2.9 -2.9zM1032 211.5l2.9 2.9l-2.9 2.9l-2.9 -2.9zM1031.7 209.4l2.9 2.9l-2.9 2.9l-2.9 -2.9zM1032.2 207.4l2.9 2.9l-2.9 2.9l-2.9 -2.9zM1032.6 205.3l2.9 2.9l-2.9 2.9l-2.9 -2.9zM1032.5 203.2l2.9 2.9l-2.9 2.9l-2.9 -2.9zM1032.3 201.1l2.9 2.9l-2.9 2.9l-2.9 -2.9zM1032.5 199l2.9 2.9l-2.9 2.9l-2.9 -2.9zM1033.3 196.9l2.9 2.9l-2.9 2.9l-2.9 -2.9zM1033.2 194.9l2.9 2.9l-2.9 2.9l-2.9 -2.9zM1033 192.8l2.9 2.9l-2.9 2.9l-2.9 -2.9zM1033.5 190.7l2.9 2.9l-2.9 2.9l-2.9 -2.9zM1033.1 188.6l2.9 2.9l-2.9 2.9l-2.9 -2.9zM1034.2 186.5l2.9 2.9l-2.9 2.9l-2.9 -2.9zM1033.8 184.4l2.9 2.9l-2.9 2.9l-2.9 -2.9zM1034 182.4l2.9 2.9l-2.9 2.9l-2.9 -2.9zM1034 182.1l2.9 2.9l-2.9 2.9l-2.9 -2.9zM1033.7 184.2l2.9 2.9l-2.9 2.9l-2.9 -2.9zM1034.5 186.3l2.9 2.9l-2.9 2.9l-2.9 -2.9zM1034.4 188.3l2.9 2.9l-2.9 2.9l-2.9 -2.9zM1034.6 190.4l2.9 2.9l-2.9 2.9l-2.9 -2.9zM1035.3 192.5l2.9 2.9l-2.9 2.9l-2.9 -2.9zM1034.8 194.6l2.9 2.9l-2.9 2.9l-2.9 -2.9zM1035.2 196.6l2.9 2.9l-2.9 2.9l-2.9 -2.9zM1035.9 198.7l2.9 2.9l-2.9 2.9l-2.9 -2.9zM1035.5 200.8l2.9 2.9l-2.9 2.9l-2.9 -2.9zM1035.8 202.9l2.9 2.9l-2.9 2.9l-2.9 -2.9zM1036.2 204.9l2.9 2.9l-2.9 2.9l-2.9 -2.9zM1036.1 207l2.9 2.9l-2.9 2.9l-2.9 -2.9zM1037 209.1l2.9 2.9l-2.9 2.9l-2.9 -2.9zM1037.3 211.2l2.9 2.9l-2.9 2.9l-2.9 -2.9zM1036.5 213.3l2.9 2.9l-2.9 2.9l-2.9 -2.9zM1037.2 215.3l2.9 2.9l-2.9 2.9l-2.9 -2.9zM1037.7 217.4l2.9 2.9l-2.9 2.9l-2.9 -2.9zM1037.5 219.5l2.9 2.9l-2.9 2.9l-2.9 -2.9zM1038.2 221.6l2.9 2.9l-2.9 2.9l-2.9 -2.9zM1038 223.6l2.9 2.9l-2.9 2.9l-2.9 -2.9zM1037.9 225.7l2.9 2.9l-2.9 2.9l-2.9 -2.9zM1038.5 227.8l2.9 2.9l-2.9 2.9l-2.9 -2.9zM1038.7 229.9l2.9 2.9l-2.9 2.9l-2.9 -2.9zM1038.7 231.9l2.9 2.9l-2.9 2.9l-2.9 -2.9zM1039.2 234l2.9 2.9l-2.9 2.9l-2.9 -2.9zM1039.5 236.1l2.9 2.9l-2.9 2.9l-2.9 -2.9zM1039.4 238.2l2.9 2.9l-2.9 2.9l-2.9 -2.9zM1039.6 240.2l2.9 2.9l-2.9 2.9l-2.9 -2.9zM1040.1 242.3l2.9 2.9l-2.9 2.9l-2.9 -2.9zM1040.2 244.4l2.9 2.9l-2.9 2.9l-2.9 -2.9zM1040.2 246.5l2.9 2.9l-2.9 2.9l-2.9 -2.9zM1040.9 248.6l2.9 2.9l-2.9 2.9l-2.9 -2.9zM1040.3 250.6l2.9 2.9l-2.9 2.9l-2.9 -2.9zM1041.1 252.7l2.9 2.9l-2.9 2.9l-2.9 -2.9zM1040.7 254.8l2.9 2.9l-2.9 2.9l-2.9 -2.9zM1041.3 256.9l2.9 2.9l-2.9 2.9l-2.9 -2.9zM1041.1 258.9l2.9 2.9l-2.9 2.9l-2.9 -2.9zM1041.5 261l2.9 2.9l-2.9 2.9l-2.9 -2.9zM1042.1 263.1l2.9 2.9l-2.9 2.9l-2.9 -2.9zM1042.3 265.2l2.9 2.9l-2.9 2.9l-2.9 -2.9zM1042.5 267.2l2.9 2.9l-2.9 2.9l-2.9 -2.9zM1042.1 269.3l2.9 2.9l-2.9 2.9l-2.9 -2.9zM1042.6 271.4l2.9 2.9l-2.9 2.9l-2.9 -2.9zM1042.5 273.5l2.9 2.9l-2.9 2.9l-2.9 -2.9zM1043.1 275.5l2.9 2.9l-2.9 2.9l-2.9 -2.9zM1043.2 277.6l2.9 2.9l-2.9 2.9l-2.9 -2.9zM1042.9 279.7l2.9 2.9l-2.9 2.9l-2.9 -2.9zM1043.7 281.8l2.9 2.9l-2.9 2.9l-2.9 -2.9zM1044 283.9l2.9 2.9l-2.9 2.9l-2.9 -2.9zM1044.1 285.9l2.9 2.9l-2.9 2.9l-2.9 -2.9zM1044.6 288l2.9 2.9l-2.9 2.9l-2.9 -2.9zM1044.1 290.1l2.9 2.9l-2.9 2.9l-2.9 -2.9zM1044.3 292.2l2.9 2.9l-2.9 2.9l-2.9 -2.9zM1044.3 294.2l2.9 2.9l-2.9 2.9l-2.9 -2.9zM1045 296.3l2.9 2.9l-2.9 2.9l-2.9 -2.9zM1045.1 298.4l2.9 2.9l-2.9 2.9l-2.9 -2.9zM1045.3 300.5l2.9 2.9l-2.9 2.9l-2.9 -2.9zM1045.4 302.5l2.9 2.9l-2.9 2.9l-2.9 -2.9zM1046.1 304.6l2.9 2.9l-2.9 2.9l-2.9 -2.9zM1045.6 306.7l2.9 2.9l-2.9 2.9l-2.9 -2.9zM1046.4 306.7l2.9 2.9l-2.9 2.9l-2.9 -2.9zM1046.2 304.6l2.9 2.9l-2.9 2.9l-2.9 -2.9zM1046.3 302.6l2.9 2.9l-2.9 2.9l-2.9 -2.9zM1046.8 300.5l2.9 2.9l-2.9 2.9l-2.9 -2.9zM1046.4 298.4l2.9 2.9l-2.9 2.9l-2.9 -2.9zM1046.4 296.3l2.9 2.9l-2.9 2.9l-2.9 -2.9zM1046.7 294.3l2.9 2.9l-2.9 2.9l-2.9 -2.9zM1046.6 292.2l2.9 2.9l-2.9 2.9l-2.9 -2.9zM1047 290.1l2.9 2.9l-2.9 2.9l-2.9 -2.9zM1047.5 288l2.9 2.9l-2.9 2.9l-2.9 -2.9zM1047.6 286l2.9 2.9l-2.9 2.9l-2.9 -2.9zM1047.5 283.9l2.9 2.9l-2.9 2.9l-2.9 -2.9zM1047.9 281.8l2.9 2.9l-2.9 2.9l-2.9 -2.9zM1047.6 279.8l2.9 2.9l-2.9 2.9l-2.9 -2.9zM1048.5 277.7l2.9 2.9l-2.9 2.9l-2.9 -2.9zM1048 275.6l2.9 2.9l-2.9 2.9l-2.9 -2.9zM1048.2 273.5l2.9 2.9l-2.9 2.9l-2.9 -2.9zM1048.3 271.5l2.9 2.9l-2.9 2.9l-2.9 -2.9zM1049 269.4l2.9 2.9l-2.9 2.9l-2.9 -2.9zM1049.2 267.3l2.9 2.9l-2.9 2.9l-2.9 -2.9zM1049.4 265.3l2.9 2.9l-2.9 2.9l-2.9 -2.9zM1048.8 263.2l2.9 2.9l-2.9 2.9l-2.9 -2.9zM1049.3 261.1l2.9 2.9l-2.9 2.9l-2.9 -2.9zM1049.4 259l2.9 2.9l-2.9 2.9l-2.9 -2.9zM1049.4 257l2.9 2.9l-2.9 2.9l-2.9 -2.9zM1050.3 254.9l2.9 2.9l-2.9 2.9l-2.9 -2.9zM1049.5 252.8l2.9 2.9l-2.9 2.9l-2.9 -2.9zM1050.1 250.7l2.9 2.9l-2.9 2.9l-2.9 -2.9zM1050.6 248.7l2.9 2.9l-2.9 2.9l-2.9 -2.9zM1050.9 246.6l2.9 2.9l-2.9 2.9l-2.9 -2.9zM1050.2 244.5l2.9 2.9l-2.9 2.9l-2.9 -2.9zM1050.7 242.5l2.9 2.9l-2.9 2.9l-2.9 -2.9zM1051.2 240.4l2.9 2.9l-2.9 2.9l-2.9 -2.9zM1050.6 238.3l2.9 2.9l-2.9 2.9l-2.9 -2.9zM1051 236.2l2.9 2.9l-2.9 2.9l-2.9 -2.9zM1051.8 234.2l2.9 2.9l-2.9 2.9l-2.9 -2.9zM1051.2 232.1l2.9 2.9l-2.9 2.9l-2.9 -2.9zM1051.6 230l2.9 2.9l-2.9 2.9l-2.9 -2.9zM1051.6 228l2.9 2.9l-2.9 2.9l-2.9 -2.9zM1051.9 225.9l2.9 2.9l-2.9 2.9l-2.9 -2.9zM1051.7 223.8l2.9 2.9l-2.9 2.9l-2.9 -2.9zM1051.8 221.7l2.9 2.9l-2.9 2.9l-2.9 -2.9zM1052.9 219.7l2.9 2.9l-2.9 2.9l-2.9 -2.9zM1052.9 217.6l2.9 2.9l-2.9 2.9l-2.9 -2.9zM1053 215.5l2.9 2.9l-2.9 2.9l-2.9 -2.9zM1052.6 213.4l2.9 2.9l-2.9 2.9l-2.9 -2.9zM1052.8 211.4l2.9 2.9l-2.9 2.9l-2.9 -2.9zM1053.3 209.3l2.9 2.9l-2.9 2.9l-2.9 -2.9zM1053.1 207.2l2.9 2.9l-2.9 2.9l-2.9 -2.9zM1053.5 205.2l2.9 2.9l-2.9 2.9l-2.9 -2.9zM1054.1 203.1l2.9 2.9l-2.9 2.9l-2.9 -2.9zM1053.7 201l2.9 2.9l-2.9 2.9l-2.9 -2.9zM1053.8 198.9l2.9 2.9l-2.9 2.9l-2.9 -2.9zM1054.6 196.9l2.9 2.9l-2.9 2.9l-2.9 -2.9zM1054.4 194.8l2.9 2.9l-2.9 2.9l-2.9 -2.9zM1054 192.7l2.9 2.9l-2.9 2.9l-2.9 -2.9zM1054.5 190.7l2.9 2.9l-2.9 2.9l-2.9 -2.9zM1054.9 188.6l2.9 2.9l-2.9 2.9l-2.9 -2.9zM1054.5 186.5l2.9 2.9l-2.9 2.9l-2.9 -2.9zM1054.9 184.4l2.9 2.9l-2.9 2.9l-2.9 -2.9zM1055.4 182.4l2.9 2.9l-2.9 2.9l-2.9 -2.9z" fill="url(#gT)"/>
<path d="M768.4 413.2l2.9 2.9l-2.9 2.9l-2.9 -2.9zM768.6 411.1l2.9 2.9l-2.9 2.9l-2.9 -2.9zM769.1 409.1l2.9 2.9l-2.9 2.9l-2.9 -2.9zM768.8 407l2.9 2.9l-2.9 2.9l-2.9 -2.9zM769 404.9l2.9 2.9l-2.9 2.9l-2.9 -2.9zM769.2 402.9l2.9 2.9l-2.9 2.9l-2.9 -2.9zM769 400.8l2.9 2.9l-2.9 2.9l-2.9 -2.9zM769.5 398.8l2.9 2.9l-2.9 2.9l-2.9 -2.9zM769.7 396.7l2.9 2.9l-2.9 2.9l-2.9 -2.9zM770.1 394.7l2.9 2.9l-2.9 2.9l-2.9 -2.9zM769.5 392.6l2.9 2.9l-2.9 2.9l-2.9 -2.9zM769.9 390.5l2.9 2.9l-2.9 2.9l-2.9 -2.9zM769.8 388.5l2.9 2.9l-2.9 2.9l-2.9 -2.9zM770.7 386.4l2.9 2.9l-2.9 2.9l-2.9 -2.9zM770.7 384.4l2.9 2.9l-2.9 2.9l-2.9 -2.9zM770.2 382.3l2.9 2.9l-2.9 2.9l-2.9 -2.9zM771.3 380.3l2.9 2.9l-2.9 2.9l-2.9 -2.9zM771.4 378.2l2.9 2.9l-2.9 2.9l-2.9 -2.9zM771.3 376.1l2.9 2.9l-2.9 2.9l-2.9 -2.9zM771.4 374.1l2.9 2.9l-2.9 2.9l-2.9 -2.9zM771.1 372l2.9 2.9l-2.9 2.9l-2.9 -2.9zM771.1 370l2.9 2.9l-2.9 2.9l-2.9 -2.9zM771.8 367.9l2.9 2.9l-2.9 2.9l-2.9 -2.9zM771.4 365.9l2.9 2.9l-2.9 2.9l-2.9 -2.9zM771.7 363.8l2.9 2.9l-2.9 2.9l-2.9 -2.9zM771.9 361.8l2.9 2.9l-2.9 2.9l-2.9 -2.9zM771.9 359.7l2.9 2.9l-2.9 2.9l-2.9 -2.9zM772.4 357.6l2.9 2.9l-2.9 2.9l-2.9 -2.9zM772.6 355.6l2.9 2.9l-2.9 2.9l-2.9 -2.9zM773.1 353.5l2.9 2.9l-2.9 2.9l-2.9 -2.9zM773 351.5l2.9 2.9l-2.9 2.9l-2.9 -2.9zM773.2 349.4l2.9 2.9l-2.9 2.9l-2.9 -2.9zM773.2 347.4l2.9 2.9l-2.9 2.9l-2.9 -2.9zM773.5 345.3l2.9 2.9l-2.9 2.9l-2.9 -2.9zM773.5 343.2l2.9 2.9l-2.9 2.9l-2.9 -2.9zM773.5 341.2l2.9 2.9l-2.9 2.9l-2.9 -2.9zM774.3 339.1l2.9 2.9l-2.9 2.9l-2.9 -2.9zM774.5 337.1l2.9 2.9l-2.9 2.9l-2.9 -2.9zM774.5 335l2.9 2.9l-2.9 2.9l-2.9 -2.9zM774.5 333l2.9 2.9l-2.9 2.9l-2.9 -2.9zM774.3 330.9l2.9 2.9l-2.9 2.9l-2.9 -2.9zM774.3 328.8l2.9 2.9l-2.9 2.9l-2.9 -2.9zM774.5 326.8l2.9 2.9l-2.9 2.9l-2.9 -2.9zM774.5 324.7l2.9 2.9l-2.9 2.9l-2.9 -2.9zM775.3 322.7l2.9 2.9l-2.9 2.9l-2.9 -2.9zM775.1 320.6l2.9 2.9l-2.9 2.9l-2.9 -2.9zM775.5 320.6l2.9 2.9l-2.9 2.9l-2.9 -2.9zM775.3 322.7l2.9 2.9l-2.9 2.9l-2.9 -2.9zM776 324.8l2.9 2.9l-2.9 2.9l-2.9 -2.9zM776.1 326.8l2.9 2.9l-2.9 2.9l-2.9 -2.9zM775.5 328.9l2.9 2.9l-2.9 2.9l-2.9 -2.9zM775.9 331l2.9 2.9l-2.9 2.9l-2.9 -2.9zM776.7 333.1l2.9 2.9l-2.9 2.9l-2.9 -2.9zM776.5 335.1l2.9 2.9l-2.9 2.9l-2.9 -2.9zM777.2 337.2l2.9 2.9l-2.9 2.9l-2.9 -2.9zM776.8 339.3l2.9 2.9l-2.9 2.9l-2.9 -2.9zM776.7 341.4l2.9 2.9l-2.9 2.9l-2.9 -2.9zM777.4 343.5l2.9 2.9l-2.9 2.9l-2.9 -2.9zM777.7 345.5l2.9 2.9l-2.9 2.9l-2.9 -2.9zM777.4 347.6l2.9 2.9l-2.9 2.9l-2.9 -2.9zM777.4 349.7l2.9 2.9l-2.9 2.9l-2.9 -2.9zM777.9 351.8l2.9 2.9l-2.9 2.9l-2.9 -2.9zM778.7 353.8l2.9 2.9l-2.9 2.9l-2.9 -2.9zM778.7 355.9l2.9 2.9l-2.9 2.9l-2.9 -2.9zM778.2 358l2.9 2.9l-2.9 2.9l-2.9 -2.9zM778.5 360.1l2.9 2.9l-2.9 2.9l-2.9 -2.9zM778.6 362.1l2.9 2.9l-2.9 2.9l-2.9 -2.9zM778.7 364.2l2.9 2.9l-2.9 2.9l-2.9 -2.9zM779.6 366.3l2.9 2.9l-2.9 2.9l-2.9 -2.9zM779.2 368.4l2.9 2.9l-2.9 2.9l-2.9 -2.9zM779.8 370.5l2.9 2.9l-2.9 2.9l-2.9 -2.9zM779.9 372.5l2.9 2.9l-2.9 2.9l-2.9 -2.9zM779.8 374.6l2.9 2.9l-2.9 2.9l-2.9 -2.9zM780.5 376.7l2.9 2.9l-2.9 2.9l-2.9 -2.9zM780.1 378.8l2.9 2.9l-2.9 2.9l-2.9 -2.9zM780.8 380.8l2.9 2.9l-2.9 2.9l-2.9 -2.9zM780.5 382.9l2.9 2.9l-2.9 2.9l-2.9 -2.9zM781 385l2.9 2.9l-2.9 2.9l-2.9 -2.9zM780.9 387.1l2.9 2.9l-2.9 2.9l-2.9 -2.9zM781.2 389.1l2.9 2.9l-2.9 2.9l-2.9 -2.9zM782.1 391.2l2.9 2.9l-2.9 2.9l-2.9 -2.9zM782.1 393.3l2.9 2.9l-2.9 2.9l-2.9 -2.9zM781.8 395.4l2.9 2.9l-2.9 2.9l-2.9 -2.9zM782.5 397.4l2.9 2.9l-2.9 2.9l-2.9 -2.9zM782.1 399.5l2.9 2.9l-2.9 2.9l-2.9 -2.9zM782.4 401.6l2.9 2.9l-2.9 2.9l-2.9 -2.9zM783.1 403.7l2.9 2.9l-2.9 2.9l-2.9 -2.9zM783.1 405.8l2.9 2.9l-2.9 2.9l-2.9 -2.9zM782.7 407.8l2.9 2.9l-2.9 2.9l-2.9 -2.9zM783.8 409.9l2.9 2.9l-2.9 2.9l-2.9 -2.9zM783.2 412l2.9 2.9l-2.9 2.9l-2.9 -2.9zM783.4 414.1l2.9 2.9l-2.9 2.9l-2.9 -2.9zM784.1 416.1l2.9 2.9l-2.9 2.9l-2.9 -2.9zM783.9 418.2l2.9 2.9l-2.9 2.9l-2.9 -2.9zM784 420.3l2.9 2.9l-2.9 2.9l-2.9 -2.9zM784 422.4l2.9 2.9l-2.9 2.9l-2.9 -2.9zM784.2 424.4l2.9 2.9l-2.9 2.9l-2.9 -2.9zM784.9 426.5l2.9 2.9l-2.9 2.9l-2.9 -2.9zM784.7 428.6l2.9 2.9l-2.9 2.9l-2.9 -2.9zM785.3 430.7l2.9 2.9l-2.9 2.9l-2.9 -2.9zM785.2 432.8l2.9 2.9l-2.9 2.9l-2.9 -2.9zM785.5 434.8l2.9 2.9l-2.9 2.9l-2.9 -2.9zM786.2 436.9l2.9 2.9l-2.9 2.9l-2.9 -2.9zM785.9 439l2.9 2.9l-2.9 2.9l-2.9 -2.9zM786.2 441.1l2.9 2.9l-2.9 2.9l-2.9 -2.9zM786.7 443.1l2.9 2.9l-2.9 2.9l-2.9 -2.9zM786 443.1l2.9 2.9l-2.9 2.9l-2.9 -2.9zM786.1 441.1l2.9 2.9l-2.9 2.9l-2.9 -2.9zM787 439l2.9 2.9l-2.9 2.9l-2.9 -2.9zM787.1 436.9l2.9 2.9l-2.9 2.9l-2.9 -2.9zM786.7 434.8l2.9 2.9l-2.9 2.9l-2.9 -2.9zM786.8 432.8l2.9 2.9l-2.9 2.9l-2.9 -2.9zM787.5 430.7l2.9 2.9l-2.9 2.9l-2.9 -2.9zM787.8 428.6l2.9 2.9l-2.9 2.9l-2.9 -2.9zM787.2 426.6l2.9 2.9l-2.9 2.9l-2.9 -2.9zM788.1 424.5l2.9 2.9l-2.9 2.9l-2.9 -2.9zM788.2 422.4l2.9 2.9l-2.9 2.9l-2.9 -2.9zM788.1 420.3l2.9 2.9l-2.9 2.9l-2.9 -2.9zM788.1 418.3l2.9 2.9l-2.9 2.9l-2.9 -2.9zM787.9 416.2l2.9 2.9l-2.9 2.9l-2.9 -2.9zM788 414.1l2.9 2.9l-2.9 2.9l-2.9 -2.9zM789.1 412.1l2.9 2.9l-2.9 2.9l-2.9 -2.9zM788.5 410l2.9 2.9l-2.9 2.9l-2.9 -2.9zM789.1 407.9l2.9 2.9l-2.9 2.9l-2.9 -2.9zM788.8 405.8l2.9 2.9l-2.9 2.9l-2.9 -2.9zM789.6 403.8l2.9 2.9l-2.9 2.9l-2.9 -2.9zM789.5 401.7l2.9 2.9l-2.9 2.9l-2.9 -2.9zM789.3 399.6l2.9 2.9l-2.9 2.9l-2.9 -2.9zM789.4 397.5l2.9 2.9l-2.9 2.9l-2.9 -2.9zM790.1 395.5l2.9 2.9l-2.9 2.9l-2.9 -2.9zM789.6 393.4l2.9 2.9l-2.9 2.9l-2.9 -2.9zM789.9 391.3l2.9 2.9l-2.9 2.9l-2.9 -2.9zM790.4 389.3l2.9 2.9l-2.9 2.9l-2.9 -2.9zM790.8 387.2l2.9 2.9l-2.9 2.9l-2.9 -2.9zM790.7 385.1l2.9 2.9l-2.9 2.9l-2.9 -2.9zM790.6 383l2.9 2.9l-2.9 2.9l-2.9 -2.9zM791.3 381l2.9 2.9l-2.9 2.9l-2.9 -2.9zM790.8 378.9l2.9 2.9l-2.9 2.9l-2.9 -2.9zM790.8 376.8l2.9 2.9l-2.9 2.9l-2.9 -2.9zM791.2 374.7l2.9 2.9l-2.9 2.9l-2.9 -2.9zM791.5 372.7l2.9 2.9l-2.9 2.9l-2.9 -2.9zM791.3 370.6l2.9 2.9l-2.9 2.9l-2.9 -2.9zM791.5 368.5l2.9 2.9l-2.9 2.9l-2.9 -2.9zM791.9 366.5l2.9 2.9l-2.9 2.9l-2.9 -2.9zM792.2 364.4l2.9 2.9l-2.9 2.9l-2.9 -2.9zM791.9 362.3l2.9 2.9l-2.9 2.9l-2.9 -2.9zM792.3 360.2l2.9 2.9l-2.9 2.9l-2.9 -2.9zM793 358.2l2.9 2.9l-2.9 2.9l-2.9 -2.9zM793.3 356.1l2.9 2.9l-2.9 2.9l-2.9 -2.9zM793.1 354l2.9 2.9l-2.9 2.9l-2.9 -2.9zM793.3 352l2.9 2.9l-2.9 2.9l-2.9 -2.9zM793.3 349.9l2.9 2.9l-2.9 2.9l-2.9 -2.9zM793 347.8l2.9 2.9l-2.9 2.9l-2.9 -2.9zM793.1 345.7l2.9 2.9l-2.9 2.9l-2.9 -2.9zM793.2 343.7l2.9 2.9l-2.9 2.9l-2.9 -2.9zM794.3 341.6l2.9 2.9l-2.9 2.9l-2.9 -2.9zM794.2 339.5l2.9 2.9l-2.9 2.9l-2.9 -2.9zM794.6 337.4l2.9 2.9l-2.9 2.9l-2.9 -2.9zM793.8 335.4l2.9 2.9l-2.9 2.9l-2.9 -2.9zM794.6 333.3l2.9 2.9l-2.9 2.9l-2.9 -2.9zM794.6 331.2l2.9 2.9l-2.9 2.9l-2.9 -2.9zM795 329.2l2.9 2.9l-2.9 2.9l-2.9 -2.9zM794.8 327.1l2.9 2.9l-2.9 2.9l-2.9 -2.9zM795.6 325l2.9 2.9l-2.9 2.9l-2.9 -2.9zM794.8 322.9l2.9 2.9l-2.9 2.9l-2.9 -2.9zM795.4 320.9l2.9 2.9l-2.9 2.9l-2.9 -2.9zM818 320.6l2.9 2.9l-2.9 2.9l-2.9 -2.9zM818.5 325.8l2.9 2.9l-2.9 2.9l-2.9 -2.9zM819.1 331.3l2.9 2.9l-2.9 2.9l-2.9 -2.9zM819.6 337.3l2.9 2.9l-2.9 2.9l-2.9 -2.9zM820.2 341.1l2.9 2.9l-2.9 2.9l-2.9 -2.9zM820.5 343.2l2.9 2.9l-2.9 2.9l-2.9 -2.9zM820.6 345.2l2.9 2.9l-2.9 2.9l-2.9 -2.9zM820.7 347.3l2.9 2.9l-2.9 2.9l-2.9 -2.9zM821 349.3l2.9 2.9l-2.9 2.9l-2.9 -2.9zM821.3 351.4l2.9 2.9l-2.9 2.9l-2.9 -2.9zM820.9 353.4l2.9 2.9l-2.9 2.9l-2.9 -2.9zM821.5 355.5l2.9 2.9l-2.9 2.9l-2.9 -2.9zM821.9 357.5l2.9 2.9l-2.9 2.9l-2.9 -2.9zM822 359.6l2.9 2.9l-2.9 2.9l-2.9 -2.9zM821.8 361.6l2.9 2.9l-2.9 2.9l-2.9 -2.9zM822.4 363.7l2.9 2.9l-2.9 2.9l-2.9 -2.9zM822.6 365.7l2.9 2.9l-2.9 2.9l-2.9 -2.9zM822.5 367.8l2.9 2.9l-2.9 2.9l-2.9 -2.9zM822.8 369.8l2.9 2.9l-2.9 2.9l-2.9 -2.9zM822.7 371.9l2.9 2.9l-2.9 2.9l-2.9 -2.9zM823.1 373.9l2.9 2.9l-2.9 2.9l-2.9 -2.9zM823.3 376l2.9 2.9l-2.9 2.9l-2.9 -2.9zM823 378l2.9 2.9l-2.9 2.9l-2.9 -2.9zM823.7 380.1l2.9 2.9l-2.9 2.9l-2.9 -2.9zM824.3 382.1l2.9 2.9l-2.9 2.9l-2.9 -2.9zM824.4 384.2l2.9 2.9l-2.9 2.9l-2.9 -2.9zM824.4 386.2l2.9 2.9l-2.9 2.9l-2.9 -2.9zM824.3 388.3l2.9 2.9l-2.9 2.9l-2.9 -2.9zM824.8 390.3l2.9 2.9l-2.9 2.9l-2.9 -2.9zM824.9 392.4l2.9 2.9l-2.9 2.9l-2.9 -2.9zM824.9 394.4l2.9 2.9l-2.9 2.9l-2.9 -2.9zM825.5 396.5l2.9 2.9l-2.9 2.9l-2.9 -2.9zM824.9 398.5l2.9 2.9l-2.9 2.9l-2.9 -2.9zM825.8 400.6l2.9 2.9l-2.9 2.9l-2.9 -2.9zM825.3 402.6l2.9 2.9l-2.9 2.9l-2.9 -2.9zM826 404.7l2.9 2.9l-2.9 2.9l-2.9 -2.9zM826.1 406.7l2.9 2.9l-2.9 2.9l-2.9 -2.9zM826 408.8l2.9 2.9l-2.9 2.9l-2.9 -2.9zM826.7 410.8l2.9 2.9l-2.9 2.9l-2.9 -2.9zM826.7 412.9l2.9 2.9l-2.9 2.9l-2.9 -2.9zM827 414.9l2.9 2.9l-2.9 2.9l-2.9 -2.9zM827.5 417l2.9 2.9l-2.9 2.9l-2.9 -2.9zM827 419l2.9 2.9l-2.9 2.9l-2.9 -2.9zM827 421.1l2.9 2.9l-2.9 2.9l-2.9 -2.9zM827.5 423.1l2.9 2.9l-2.9 2.9l-2.9 -2.9zM828 425.2l2.9 2.9l-2.9 2.9l-2.9 -2.9zM827.8 427.2l2.9 2.9l-2.9 2.9l-2.9 -2.9zM827.9 429.3l2.9 2.9l-2.9 2.9l-2.9 -2.9zM828.9 431.3l2.9 2.9l-2.9 2.9l-2.9 -2.9zM828.8 433.4l2.9 2.9l-2.9 2.9l-2.9 -2.9zM828.8 435.4l2.9 2.9l-2.9 2.9l-2.9 -2.9zM829.4 437.5l2.9 2.9l-2.9 2.9l-2.9 -2.9zM829 439.5l2.9 2.9l-2.9 2.9l-2.9 -2.9zM829.6 441.6l2.9 2.9l-2.9 2.9l-2.9 -2.9zM829.3 443.6l2.9 2.9l-2.9 2.9l-2.9 -2.9zM829.7 445.7l2.9 2.9l-2.9 2.9l-2.9 -2.9zM830.1 445.7l2.9 2.9l-2.9 2.9l-2.9 -2.9zM830.4 443.6l2.9 2.9l-2.9 2.9l-2.9 -2.9zM830.5 441.5l2.9 2.9l-2.9 2.9l-2.9 -2.9zM830.2 439.4l2.9 2.9l-2.9 2.9l-2.9 -2.9zM830.5 437.4l2.9 2.9l-2.9 2.9l-2.9 -2.9zM830.4 435.3l2.9 2.9l-2.9 2.9l-2.9 -2.9zM830.4 433.2l2.9 2.9l-2.9 2.9l-2.9 -2.9zM830.9 431.1l2.9 2.9l-2.9 2.9l-2.9 -2.9zM831.4 429l2.9 2.9l-2.9 2.9l-2.9 -2.9zM831.6 427l2.9 2.9l-2.9 2.9l-2.9 -2.9zM831.6 424.9l2.9 2.9l-2.9 2.9l-2.9 -2.9zM832 422.8l2.9 2.9l-2.9 2.9l-2.9 -2.9zM831.5 420.7l2.9 2.9l-2.9 2.9l-2.9 -2.9zM831.5 418.6l2.9 2.9l-2.9 2.9l-2.9 -2.9zM832 416.6l2.9 2.9l-2.9 2.9l-2.9 -2.9zM832 414.5l2.9 2.9l-2.9 2.9l-2.9 -2.9zM832.1 412.4l2.9 2.9l-2.9 2.9l-2.9 -2.9zM832.4 410.3l2.9 2.9l-2.9 2.9l-2.9 -2.9zM832.8 408.2l2.9 2.9l-2.9 2.9l-2.9 -2.9zM832.8 406.2l2.9 2.9l-2.9 2.9l-2.9 -2.9zM832.8 404.1l2.9 2.9l-2.9 2.9l-2.9 -2.9zM833.5 402l2.9 2.9l-2.9 2.9l-2.9 -2.9zM833.8 399.9l2.9 2.9l-2.9 2.9l-2.9 -2.9zM833.4 397.8l2.9 2.9l-2.9 2.9l-2.9 -2.9zM833.2 395.8l2.9 2.9l-2.9 2.9l-2.9 -2.9zM833.3 393.7l2.9 2.9l-2.9 2.9l-2.9 -2.9zM834.3 391.6l2.9 2.9l-2.9 2.9l-2.9 -2.9zM833.7 389.5l2.9 2.9l-2.9 2.9l-2.9 -2.9zM834.5 387.4l2.9 2.9l-2.9 2.9l-2.9 -2.9zM834.5 385.4l2.9 2.9l-2.9 2.9l-2.9 -2.9zM834.4 383.3l2.9 2.9l-2.9 2.9l-2.9 -2.9zM835.1 381.2l2.9 2.9l-2.9 2.9l-2.9 -2.9zM834.4 379.1l2.9 2.9l-2.9 2.9l-2.9 -2.9zM834.7 377l2.9 2.9l-2.9 2.9l-2.9 -2.9zM835.2 375l2.9 2.9l-2.9 2.9l-2.9 -2.9zM834.9 372.9l2.9 2.9l-2.9 2.9l-2.9 -2.9zM835.9 370.8l2.9 2.9l-2.9 2.9l-2.9 -2.9zM835.5 368.7l2.9 2.9l-2.9 2.9l-2.9 -2.9zM835.5 366.6l2.9 2.9l-2.9 2.9l-2.9 -2.9zM835.6 364.6l2.9 2.9l-2.9 2.9l-2.9 -2.9zM836.3 362.5l2.9 2.9l-2.9 2.9l-2.9 -2.9zM836.3 360.4l2.9 2.9l-2.9 2.9l-2.9 -2.9zM836.6 358.3l2.9 2.9l-2.9 2.9l-2.9 -2.9zM836.8 356.2l2.9 2.9l-2.9 2.9l-2.9 -2.9zM837.1 354.2l2.9 2.9l-2.9 2.9l-2.9 -2.9zM837.5 352.1l2.9 2.9l-2.9 2.9l-2.9 -2.9zM837.3 350l2.9 2.9l-2.9 2.9l-2.9 -2.9zM837 347.9l2.9 2.9l-2.9 2.9l-2.9 -2.9zM837.5 345.8l2.9 2.9l-2.9 2.9l-2.9 -2.9zM837.3 343.7l2.9 2.9l-2.9 2.9l-2.9 -2.9zM837.3 341.7l2.9 2.9l-2.9 2.9l-2.9 -2.9zM837.9 339.6l2.9 2.9l-2.9 2.9l-2.9 -2.9zM838.3 337.5l2.9 2.9l-2.9 2.9l-2.9 -2.9zM838 335.4l2.9 2.9l-2.9 2.9l-2.9 -2.9zM838.2 333.3l2.9 2.9l-2.9 2.9l-2.9 -2.9zM838.4 331.3l2.9 2.9l-2.9 2.9l-2.9 -2.9zM839 329.2l2.9 2.9l-2.9 2.9l-2.9 -2.9zM838.9 327.1l2.9 2.9l-2.9 2.9l-2.9 -2.9zM839.2 325l2.9 2.9l-2.9 2.9l-2.9 -2.9zM839.5 322.9l2.9 2.9l-2.9 2.9l-2.9 -2.9zM839.3 320.9l2.9 2.9l-2.9 2.9l-2.9 -2.9zM862 320.6l2.9 2.9l-2.9 2.9l-2.9 -2.9zM862.5 325.8l2.9 2.9l-2.9 2.9l-2.9 -2.9zM863 331.3l2.9 2.9l-2.9 2.9l-2.9 -2.9zM863.6 337.3l2.9 2.9l-2.9 2.9l-2.9 -2.9zM864.2 341.2l2.9 2.9l-2.9 2.9l-2.9 -2.9zM864.5 343.3l2.9 2.9l-2.9 2.9l-2.9 -2.9zM863.8 345.4l2.9 2.9l-2.9 2.9l-2.9 -2.9zM864.9 347.4l2.9 2.9l-2.9 2.9l-2.9 -2.9zM864.8 349.5l2.9 2.9l-2.9 2.9l-2.9 -2.9zM864.4 351.6l2.9 2.9l-2.9 2.9l-2.9 -2.9zM864.9 353.6l2.9 2.9l-2.9 2.9l-2.9 -2.9zM865.3 355.7l2.9 2.9l-2.9 2.9l-2.9 -2.9zM865.8 357.8l2.9 2.9l-2.9 2.9l-2.9 -2.9zM865.4 359.8l2.9 2.9l-2.9 2.9l-2.9 -2.9zM865.8 361.9l2.9 2.9l-2.9 2.9l-2.9 -2.9zM866.3 363.9l2.9 2.9l-2.9 2.9l-2.9 -2.9zM866.4 366l2.9 2.9l-2.9 2.9l-2.9 -2.9zM866.7 368.1l2.9 2.9l-2.9 2.9l-2.9 -2.9zM866.4 370.1l2.9 2.9l-2.9 2.9l-2.9 -2.9zM866.8 372.2l2.9 2.9l-2.9 2.9l-2.9 -2.9zM866.6 374.3l2.9 2.9l-2.9 2.9l-2.9 -2.9zM867.3 376.3l2.9 2.9l-2.9 2.9l-2.9 -2.9zM867.5 378.4l2.9 2.9l-2.9 2.9l-2.9 -2.9zM867.6 380.4l2.9 2.9l-2.9 2.9l-2.9 -2.9zM867.8 382.5l2.9 2.9l-2.9 2.9l-2.9 -2.9zM867.5 384.6l2.9 2.9l-2.9 2.9l-2.9 -2.9zM868.4 386.6l2.9 2.9l-2.9 2.9l-2.9 -2.9zM868.6 388.7l2.9 2.9l-2.9 2.9l-2.9 -2.9zM868.8 390.8l2.9 2.9l-2.9 2.9l-2.9 -2.9zM868.6 392.8l2.9 2.9l-2.9 2.9l-2.9 -2.9zM869 394.9l2.9 2.9l-2.9 2.9l-2.9 -2.9zM868.7 397l2.9 2.9l-2.9 2.9l-2.9 -2.9zM869.5 399l2.9 2.9l-2.9 2.9l-2.9 -2.9zM869.6 401.1l2.9 2.9l-2.9 2.9l-2.9 -2.9zM869.3 403.1l2.9 2.9l-2.9 2.9l-2.9 -2.9zM869.2 405.2l2.9 2.9l-2.9 2.9l-2.9 -2.9zM869.8 407.3l2.9 2.9l-2.9 2.9l-2.9 -2.9zM870.1 409.3l2.9 2.9l-2.9 2.9l-2.9 -2.9zM870.5 411.4l2.9 2.9l-2.9 2.9l-2.9 -2.9zM870.4 413.5l2.9 2.9l-2.9 2.9l-2.9 -2.9zM870.1 415.5l2.9 2.9l-2.9 2.9l-2.9 -2.9zM871.1 417.6l2.9 2.9l-2.9 2.9l-2.9 -2.9zM870.5 419.7l2.9 2.9l-2.9 2.9l-2.9 -2.9zM871.4 421.7l2.9 2.9l-2.9 2.9l-2.9 -2.9zM871 423.8l2.9 2.9l-2.9 2.9l-2.9 -2.9zM871.4 425.8l2.9 2.9l-2.9 2.9l-2.9 -2.9zM872 427.9l2.9 2.9l-2.9 2.9l-2.9 -2.9zM871.5 430l2.9 2.9l-2.9 2.9l-2.9 -2.9zM871.7 432l2.9 2.9l-2.9 2.9l-2.9 -2.9zM872.3 434.1l2.9 2.9l-2.9 2.9l-2.9 -2.9zM872.7 436.2l2.9 2.9l-2.9 2.9l-2.9 -2.9zM873 438.2l2.9 2.9l-2.9 2.9l-2.9 -2.9zM873 440.3l2.9 2.9l-2.9 2.9l-2.9 -2.9zM873.5 442.3l2.9 2.9l-2.9 2.9l-2.9 -2.9zM873.2 444.4l2.9 2.9l-2.9 2.9l-2.9 -2.9zM873.6 444.4l2.9 2.9l-2.9 2.9l-2.9 -2.9zM873 442.4l2.9 2.9l-2.9 2.9l-2.9 -2.9zM873.3 440.3l2.9 2.9l-2.9 2.9l-2.9 -2.9zM873.7 438.2l2.9 2.9l-2.9 2.9l-2.9 -2.9zM873.7 436.2l2.9 2.9l-2.9 2.9l-2.9 -2.9zM874.3 434.1l2.9 2.9l-2.9 2.9l-2.9 -2.9zM874.4 432.1l2.9 2.9l-2.9 2.9l-2.9 -2.9zM874.4 430l2.9 2.9l-2.9 2.9l-2.9 -2.9zM874.9 427.9l2.9 2.9l-2.9 2.9l-2.9 -2.9zM874.8 425.9l2.9 2.9l-2.9 2.9l-2.9 -2.9zM874.7 423.8l2.9 2.9l-2.9 2.9l-2.9 -2.9zM875 421.8l2.9 2.9l-2.9 2.9l-2.9 -2.9zM875.6 419.7l2.9 2.9l-2.9 2.9l-2.9 -2.9zM875.8 417.6l2.9 2.9l-2.9 2.9l-2.9 -2.9zM875.3 415.6l2.9 2.9l-2.9 2.9l-2.9 -2.9zM876.1 413.5l2.9 2.9l-2.9 2.9l-2.9 -2.9zM876.4 411.5l2.9 2.9l-2.9 2.9l-2.9 -2.9zM876.1 409.4l2.9 2.9l-2.9 2.9l-2.9 -2.9zM876.3 407.3l2.9 2.9l-2.9 2.9l-2.9 -2.9zM876.1 405.3l2.9 2.9l-2.9 2.9l-2.9 -2.9zM876.6 403.2l2.9 2.9l-2.9 2.9l-2.9 -2.9zM876.8 401.2l2.9 2.9l-2.9 2.9l-2.9 -2.9zM877 399.1l2.9 2.9l-2.9 2.9l-2.9 -2.9zM876.6 397.1l2.9 2.9l-2.9 2.9l-2.9 -2.9zM877.7 395l2.9 2.9l-2.9 2.9l-2.9 -2.9zM877.5 392.9l2.9 2.9l-2.9 2.9l-2.9 -2.9zM877.5 390.9l2.9 2.9l-2.9 2.9l-2.9 -2.9zM878.1 388.8l2.9 2.9l-2.9 2.9l-2.9 -2.9zM878 386.8l2.9 2.9l-2.9 2.9l-2.9 -2.9zM878.1 384.7l2.9 2.9l-2.9 2.9l-2.9 -2.9zM878.5 382.6l2.9 2.9l-2.9 2.9l-2.9 -2.9zM878 380.6l2.9 2.9l-2.9 2.9l-2.9 -2.9zM878.7 378.5l2.9 2.9l-2.9 2.9l-2.9 -2.9zM878.7 376.5l2.9 2.9l-2.9 2.9l-2.9 -2.9zM879.4 374.4l2.9 2.9l-2.9 2.9l-2.9 -2.9zM879.6 372.3l2.9 2.9l-2.9 2.9l-2.9 -2.9zM879.1 370.3l2.9 2.9l-2.9 2.9l-2.9 -2.9zM879.5 368.2l2.9 2.9l-2.9 2.9l-2.9 -2.9zM879.3 366.2l2.9 2.9l-2.9 2.9l-2.9 -2.9zM879.8 364.1l2.9 2.9l-2.9 2.9l-2.9 -2.9zM880.3 362l2.9 2.9l-2.9 2.9l-2.9 -2.9zM880.6 360l2.9 2.9l-2.9 2.9l-2.9 -2.9zM880.3 357.9l2.9 2.9l-2.9 2.9l-2.9 -2.9zM880.3 355.9l2.9 2.9l-2.9 2.9l-2.9 -2.9zM880.4 353.8l2.9 2.9l-2.9 2.9l-2.9 -2.9zM881 351.8l2.9 2.9l-2.9 2.9l-2.9 -2.9zM881.4 349.7l2.9 2.9l-2.9 2.9l-2.9 -2.9zM880.8 347.6l2.9 2.9l-2.9 2.9l-2.9 -2.9zM881.6 345.6l2.9 2.9l-2.9 2.9l-2.9 -2.9zM881.1 343.5l2.9 2.9l-2.9 2.9l-2.9 -2.9zM881.4 341.5l2.9 2.9l-2.9 2.9l-2.9 -2.9zM881.6 339.4l2.9 2.9l-2.9 2.9l-2.9 -2.9zM882.2 337.3l2.9 2.9l-2.9 2.9l-2.9 -2.9zM882 335.3l2.9 2.9l-2.9 2.9l-2.9 -2.9zM882.2 333.2l2.9 2.9l-2.9 2.9l-2.9 -2.9zM882.7 331.2l2.9 2.9l-2.9 2.9l-2.9 -2.9zM882.3 329.1l2.9 2.9l-2.9 2.9l-2.9 -2.9zM883.1 327l2.9 2.9l-2.9 2.9l-2.9 -2.9zM882.7 325l2.9 2.9l-2.9 2.9l-2.9 -2.9zM883.2 322.9l2.9 2.9l-2.9 2.9l-2.9 -2.9zM883.2 320.9l2.9 2.9l-2.9 2.9l-2.9 -2.9zM904.8 320.6l2.9 2.9l-2.9 2.9l-2.9 -2.9zM905.3 325.8l2.9 2.9l-2.9 2.9l-2.9 -2.9zM905.8 331.3l2.9 2.9l-2.9 2.9l-2.9 -2.9zM906.4 337.3l2.9 2.9l-2.9 2.9l-2.9 -2.9zM906.4 341.2l2.9 2.9l-2.9 2.9l-2.9 -2.9zM906.9 343.3l2.9 2.9l-2.9 2.9l-2.9 -2.9zM907 345.3l2.9 2.9l-2.9 2.9l-2.9 -2.9zM907.1 347.4l2.9 2.9l-2.9 2.9l-2.9 -2.9zM907.3 349.5l2.9 2.9l-2.9 2.9l-2.9 -2.9zM907.6 351.5l2.9 2.9l-2.9 2.9l-2.9 -2.9zM907.4 353.6l2.9 2.9l-2.9 2.9l-2.9 -2.9zM907.7 355.6l2.9 2.9l-2.9 2.9l-2.9 -2.9zM908.3 357.7l2.9 2.9l-2.9 2.9l-2.9 -2.9zM908.5 359.8l2.9 2.9l-2.9 2.9l-2.9 -2.9zM908.6 361.8l2.9 2.9l-2.9 2.9l-2.9 -2.9zM909.1 363.9l2.9 2.9l-2.9 2.9l-2.9 -2.9zM909 365.9l2.9 2.9l-2.9 2.9l-2.9 -2.9zM909.5 368l2.9 2.9l-2.9 2.9l-2.9 -2.9zM909 370.1l2.9 2.9l-2.9 2.9l-2.9 -2.9zM909.7 372.1l2.9 2.9l-2.9 2.9l-2.9 -2.9zM910 374.2l2.9 2.9l-2.9 2.9l-2.9 -2.9zM910.2 376.3l2.9 2.9l-2.9 2.9l-2.9 -2.9zM909.8 378.3l2.9 2.9l-2.9 2.9l-2.9 -2.9zM910 380.4l2.9 2.9l-2.9 2.9l-2.9 -2.9zM910.8 382.4l2.9 2.9l-2.9 2.9l-2.9 -2.9zM910.3 384.5l2.9 2.9l-2.9 2.9l-2.9 -2.9zM911.3 386.6l2.9 2.9l-2.9 2.9l-2.9 -2.9zM911.4 388.6l2.9 2.9l-2.9 2.9l-2.9 -2.9zM910.8 390.7l2.9 2.9l-2.9 2.9l-2.9 -2.9zM911.1 392.7l2.9 2.9l-2.9 2.9l-2.9 -2.9zM911.8 394.8l2.9 2.9l-2.9 2.9l-2.9 -2.9zM911.5 396.9l2.9 2.9l-2.9 2.9l-2.9 -2.9zM911.5 398.9l2.9 2.9l-2.9 2.9l-2.9 -2.9zM912.4 401l2.9 2.9l-2.9 2.9l-2.9 -2.9zM912.2 403l2.9 2.9l-2.9 2.9l-2.9 -2.9zM912.8 405.1l2.9 2.9l-2.9 2.9l-2.9 -2.9zM912.3 407.2l2.9 2.9l-2.9 2.9l-2.9 -2.9zM912.7 409.2l2.9 2.9l-2.9 2.9l-2.9 -2.9zM913.2 411.3l2.9 2.9l-2.9 2.9l-2.9 -2.9zM912.7 413.4l2.9 2.9l-2.9 2.9l-2.9 -2.9zM913.1 415.4l2.9 2.9l-2.9 2.9l-2.9 -2.9zM913.8 417.5l2.9 2.9l-2.9 2.9l-2.9 -2.9zM914.2 419.5l2.9 2.9l-2.9 2.9l-2.9 -2.9zM914.4 421.6l2.9 2.9l-2.9 2.9l-2.9 -2.9zM913.8 423.7l2.9 2.9l-2.9 2.9l-2.9 -2.9zM914.3 425.7l2.9 2.9l-2.9 2.9l-2.9 -2.9zM914.8 427.8l2.9 2.9l-2.9 2.9l-2.9 -2.9zM914.7 429.8l2.9 2.9l-2.9 2.9l-2.9 -2.9zM915.1 431.9l2.9 2.9l-2.9 2.9l-2.9 -2.9zM914.8 434l2.9 2.9l-2.9 2.9l-2.9 -2.9zM914.8 436l2.9 2.9l-2.9 2.9l-2.9 -2.9zM915.1 438.1l2.9 2.9l-2.9 2.9l-2.9 -2.9zM915.2 440.1l2.9 2.9l-2.9 2.9l-2.9 -2.9zM915.9 442.2l2.9 2.9l-2.9 2.9l-2.9 -2.9zM916 444.3l2.9 2.9l-2.9 2.9l-2.9 -2.9zM916.3 446.3l2.9 2.9l-2.9 2.9l-2.9 -2.9zM915.8 446.3l2.9 2.9l-2.9 2.9l-2.9 -2.9zM916.1 444.3l2.9 2.9l-2.9 2.9l-2.9 -2.9zM916.3 442.2l2.9 2.9l-2.9 2.9l-2.9 -2.9zM917.1 440.2l2.9 2.9l-2.9 2.9l-2.9 -2.9zM917.4 438.1l2.9 2.9l-2.9 2.9l-2.9 -2.9zM917.5 436l2.9 2.9l-2.9 2.9l-2.9 -2.9zM916.8 434l2.9 2.9l-2.9 2.9l-2.9 -2.9zM917 431.9l2.9 2.9l-2.9 2.9l-2.9 -2.9zM918 429.9l2.9 2.9l-2.9 2.9l-2.9 -2.9zM917.7 427.8l2.9 2.9l-2.9 2.9l-2.9 -2.9zM918.2 425.8l2.9 2.9l-2.9 2.9l-2.9 -2.9zM917.9 423.7l2.9 2.9l-2.9 2.9l-2.9 -2.9zM918.3 421.6l2.9 2.9l-2.9 2.9l-2.9 -2.9zM918.5 419.6l2.9 2.9l-2.9 2.9l-2.9 -2.9zM918.6 417.5l2.9 2.9l-2.9 2.9l-2.9 -2.9zM918.9 415.5l2.9 2.9l-2.9 2.9l-2.9 -2.9zM918.5 413.4l2.9 2.9l-2.9 2.9l-2.9 -2.9zM919.4 411.4l2.9 2.9l-2.9 2.9l-2.9 -2.9zM919.7 409.3l2.9 2.9l-2.9 2.9l-2.9 -2.9zM919.2 407.2l2.9 2.9l-2.9 2.9l-2.9 -2.9zM919.6 405.2l2.9 2.9l-2.9 2.9l-2.9 -2.9zM920.1 403.1l2.9 2.9l-2.9 2.9l-2.9 -2.9zM919.9 401.1l2.9 2.9l-2.9 2.9l-2.9 -2.9zM919.9 399l2.9 2.9l-2.9 2.9l-2.9 -2.9zM920 397l2.9 2.9l-2.9 2.9l-2.9 -2.9zM920.6 394.9l2.9 2.9l-2.9 2.9l-2.9 -2.9zM920.2 392.9l2.9 2.9l-2.9 2.9l-2.9 -2.9zM921.3 390.8l2.9 2.9l-2.9 2.9l-2.9 -2.9zM921.4 388.7l2.9 2.9l-2.9 2.9l-2.9 -2.9zM921.4 386.7l2.9 2.9l-2.9 2.9l-2.9 -2.9zM921.8 384.6l2.9 2.9l-2.9 2.9l-2.9 -2.9zM921.7 382.6l2.9 2.9l-2.9 2.9l-2.9 -2.9zM921.7 380.5l2.9 2.9l-2.9 2.9l-2.9 -2.9zM922 378.5l2.9 2.9l-2.9 2.9l-2.9 -2.9zM922.1 376.4l2.9 2.9l-2.9 2.9l-2.9 -2.9zM922.8 374.3l2.9 2.9l-2.9 2.9l-2.9 -2.9zM922.8 372.3l2.9 2.9l-2.9 2.9l-2.9 -2.9zM922.4 370.2l2.9 2.9l-2.9 2.9l-2.9 -2.9zM923.2 368.2l2.9 2.9l-2.9 2.9l-2.9 -2.9zM923.2 366.1l2.9 2.9l-2.9 2.9l-2.9 -2.9zM923.4 364.1l2.9 2.9l-2.9 2.9l-2.9 -2.9zM923.6 362l2.9 2.9l-2.9 2.9l-2.9 -2.9zM923.4 359.9l2.9 2.9l-2.9 2.9l-2.9 -2.9zM924.1 357.9l2.9 2.9l-2.9 2.9l-2.9 -2.9zM924.2 355.8l2.9 2.9l-2.9 2.9l-2.9 -2.9zM924.2 353.8l2.9 2.9l-2.9 2.9l-2.9 -2.9zM924.5 351.7l2.9 2.9l-2.9 2.9l-2.9 -2.9zM924.6 349.7l2.9 2.9l-2.9 2.9l-2.9 -2.9zM924.4 347.6l2.9 2.9l-2.9 2.9l-2.9 -2.9zM924.9 345.5l2.9 2.9l-2.9 2.9l-2.9 -2.9zM924.5 343.5l2.9 2.9l-2.9 2.9l-2.9 -2.9zM924.9 341.4l2.9 2.9l-2.9 2.9l-2.9 -2.9zM925.2 339.4l2.9 2.9l-2.9 2.9l-2.9 -2.9zM924.9 337.3l2.9 2.9l-2.9 2.9l-2.9 -2.9zM925.4 335.3l2.9 2.9l-2.9 2.9l-2.9 -2.9zM925.9 333.2l2.9 2.9l-2.9 2.9l-2.9 -2.9zM926.1 331.1l2.9 2.9l-2.9 2.9l-2.9 -2.9zM925.8 329.1l2.9 2.9l-2.9 2.9l-2.9 -2.9zM926.7 327l2.9 2.9l-2.9 2.9l-2.9 -2.9zM926.6 325l2.9 2.9l-2.9 2.9l-2.9 -2.9zM926.5 322.9l2.9 2.9l-2.9 2.9l-2.9 -2.9zM927 320.9l2.9 2.9l-2.9 2.9l-2.9 -2.9zM926.9 320.6l2.9 2.9l-2.9 2.9l-2.9 -2.9zM927 322.7l2.9 2.9l-2.9 2.9l-2.9 -2.9zM927.1 324.7l2.9 2.9l-2.9 2.9l-2.9 -2.9zM927.9 326.8l2.9 2.9l-2.9 2.9l-2.9 -2.9zM927.7 328.9l2.9 2.9l-2.9 2.9l-2.9 -2.9zM927.9 330.9l2.9 2.9l-2.9 2.9l-2.9 -2.9zM928.2 333l2.9 2.9l-2.9 2.9l-2.9 -2.9zM928.6 335l2.9 2.9l-2.9 2.9l-2.9 -2.9zM927.8 337.1l2.9 2.9l-2.9 2.9l-2.9 -2.9zM928.6 339.2l2.9 2.9l-2.9 2.9l-2.9 -2.9zM928.9 341.2l2.9 2.9l-2.9 2.9l-2.9 -2.9zM928.6 343.3l2.9 2.9l-2.9 2.9l-2.9 -2.9zM928.9 345.3l2.9 2.9l-2.9 2.9l-2.9 -2.9zM928.7 347.4l2.9 2.9l-2.9 2.9l-2.9 -2.9zM929.1 349.5l2.9 2.9l-2.9 2.9l-2.9 -2.9zM929.4 351.5l2.9 2.9l-2.9 2.9l-2.9 -2.9zM929.3 353.6l2.9 2.9l-2.9 2.9l-2.9 -2.9zM929.7 355.6l2.9 2.9l-2.9 2.9l-2.9 -2.9zM930.5 357.7l2.9 2.9l-2.9 2.9l-2.9 -2.9zM930.3 359.8l2.9 2.9l-2.9 2.9l-2.9 -2.9zM930.5 361.8l2.9 2.9l-2.9 2.9l-2.9 -2.9zM931.1 363.9l2.9 2.9l-2.9 2.9l-2.9 -2.9zM930.9 365.9l2.9 2.9l-2.9 2.9l-2.9 -2.9zM931.5 368l2.9 2.9l-2.9 2.9l-2.9 -2.9zM931.3 370.1l2.9 2.9l-2.9 2.9l-2.9 -2.9zM931.7 372.1l2.9 2.9l-2.9 2.9l-2.9 -2.9zM931.1 374.2l2.9 2.9l-2.9 2.9l-2.9 -2.9zM931.9 376.3l2.9 2.9l-2.9 2.9l-2.9 -2.9zM932.2 378.3l2.9 2.9l-2.9 2.9l-2.9 -2.9zM931.7 380.4l2.9 2.9l-2.9 2.9l-2.9 -2.9zM932.7 382.4l2.9 2.9l-2.9 2.9l-2.9 -2.9zM932.2 384.5l2.9 2.9l-2.9 2.9l-2.9 -2.9zM932.6 386.6l2.9 2.9l-2.9 2.9l-2.9 -2.9zM932.5 388.6l2.9 2.9l-2.9 2.9l-2.9 -2.9zM933 390.7l2.9 2.9l-2.9 2.9l-2.9 -2.9zM933.3 392.7l2.9 2.9l-2.9 2.9l-2.9 -2.9zM933 394.8l2.9 2.9l-2.9 2.9l-2.9 -2.9zM934 396.9l2.9 2.9l-2.9 2.9l-2.9 -2.9zM933.7 398.9l2.9 2.9l-2.9 2.9l-2.9 -2.9zM934 401l2.9 2.9l-2.9 2.9l-2.9 -2.9zM934.2 403l2.9 2.9l-2.9 2.9l-2.9 -2.9zM934.2 405.1l2.9 2.9l-2.9 2.9l-2.9 -2.9zM934.3 407.2l2.9 2.9l-2.9 2.9l-2.9 -2.9zM934.9 409.2l2.9 2.9l-2.9 2.9l-2.9 -2.9zM934.9 411.3l2.9 2.9l-2.9 2.9l-2.9 -2.9zM934.8 413.4l2.9 2.9l-2.9 2.9l-2.9 -2.9zM935.5 415.4l2.9 2.9l-2.9 2.9l-2.9 -2.9zM935.2 417.5l2.9 2.9l-2.9 2.9l-2.9 -2.9zM935.1 419.5l2.9 2.9l-2.9 2.9l-2.9 -2.9zM935.5 421.6l2.9 2.9l-2.9 2.9l-2.9 -2.9zM935.5 423.7l2.9 2.9l-2.9 2.9l-2.9 -2.9zM935.8 425.7l2.9 2.9l-2.9 2.9l-2.9 -2.9zM936.6 427.8l2.9 2.9l-2.9 2.9l-2.9 -2.9zM936.4 429.8l2.9 2.9l-2.9 2.9l-2.9 -2.9zM937.1 431.9l2.9 2.9l-2.9 2.9l-2.9 -2.9zM937.1 434l2.9 2.9l-2.9 2.9l-2.9 -2.9zM936.6 436l2.9 2.9l-2.9 2.9l-2.9 -2.9zM937.8 438.1l2.9 2.9l-2.9 2.9l-2.9 -2.9zM937.9 440.1l2.9 2.9l-2.9 2.9l-2.9 -2.9zM937.2 442.2l2.9 2.9l-2.9 2.9l-2.9 -2.9zM938.2 444.3l2.9 2.9l-2.9 2.9l-2.9 -2.9zM937.9 446.3l2.9 2.9l-2.9 2.9l-2.9 -2.9zM938 446.3l2.9 2.9l-2.9 2.9l-2.9 -2.9zM938.6 444.3l2.9 2.9l-2.9 2.9l-2.9 -2.9zM938.1 442.2l2.9 2.9l-2.9 2.9l-2.9 -2.9zM938.5 440.2l2.9 2.9l-2.9 2.9l-2.9 -2.9zM939.1 438.1l2.9 2.9l-2.9 2.9l-2.9 -2.9zM939 436l2.9 2.9l-2.9 2.9l-2.9 -2.9zM939 434l2.9 2.9l-2.9 2.9l-2.9 -2.9zM939.6 431.9l2.9 2.9l-2.9 2.9l-2.9 -2.9zM939.6 429.9l2.9 2.9l-2.9 2.9l-2.9 -2.9zM939.6 427.8l2.9 2.9l-2.9 2.9l-2.9 -2.9zM939.3 425.8l2.9 2.9l-2.9 2.9l-2.9 -2.9zM939.9 423.7l2.9 2.9l-2.9 2.9l-2.9 -2.9zM939.9 421.6l2.9 2.9l-2.9 2.9l-2.9 -2.9zM939.8 419.6l2.9 2.9l-2.9 2.9l-2.9 -2.9zM939.8 417.5l2.9 2.9l-2.9 2.9l-2.9 -2.9zM940.5 415.5l2.9 2.9l-2.9 2.9l-2.9 -2.9zM940.2 413.4l2.9 2.9l-2.9 2.9l-2.9 -2.9zM940.7 411.4l2.9 2.9l-2.9 2.9l-2.9 -2.9zM941.1 409.3l2.9 2.9l-2.9 2.9l-2.9 -2.9zM941.1 407.2l2.9 2.9l-2.9 2.9l-2.9 -2.9zM941 405.2l2.9 2.9l-2.9 2.9l-2.9 -2.9zM941.5 403.1l2.9 2.9l-2.9 2.9l-2.9 -2.9zM941.5 401.1l2.9 2.9l-2.9 2.9l-2.9 -2.9zM942 399l2.9 2.9l-2.9 2.9l-2.9 -2.9zM942 397l2.9 2.9l-2.9 2.9l-2.9 -2.9zM942.6 394.9l2.9 2.9l-2.9 2.9l-2.9 -2.9zM942.7 392.9l2.9 2.9l-2.9 2.9l-2.9 -2.9zM942.7 390.8l2.9 2.9l-2.9 2.9l-2.9 -2.9zM942.3 388.7l2.9 2.9l-2.9 2.9l-2.9 -2.9zM942.4 386.7l2.9 2.9l-2.9 2.9l-2.9 -2.9zM943.3 384.6l2.9 2.9l-2.9 2.9l-2.9 -2.9zM943.4 382.6l2.9 2.9l-2.9 2.9l-2.9 -2.9zM943.4 380.5l2.9 2.9l-2.9 2.9l-2.9 -2.9zM943.3 378.5l2.9 2.9l-2.9 2.9l-2.9 -2.9zM943.3 376.4l2.9 2.9l-2.9 2.9l-2.9 -2.9zM943.9 374.3l2.9 2.9l-2.9 2.9l-2.9 -2.9zM944 372.3l2.9 2.9l-2.9 2.9l-2.9 -2.9zM944.2 370.2l2.9 2.9l-2.9 2.9l-2.9 -2.9zM944.4 368.2l2.9 2.9l-2.9 2.9l-2.9 -2.9zM944.6 366.1l2.9 2.9l-2.9 2.9l-2.9 -2.9zM944.2 364.1l2.9 2.9l-2.9 2.9l-2.9 -2.9zM944.5 362l2.9 2.9l-2.9 2.9l-2.9 -2.9zM945.4 359.9l2.9 2.9l-2.9 2.9l-2.9 -2.9zM945.5 357.9l2.9 2.9l-2.9 2.9l-2.9 -2.9zM945.6 355.8l2.9 2.9l-2.9 2.9l-2.9 -2.9zM944.9 353.8l2.9 2.9l-2.9 2.9l-2.9 -2.9zM945.1 351.7l2.9 2.9l-2.9 2.9l-2.9 -2.9zM945.5 349.7l2.9 2.9l-2.9 2.9l-2.9 -2.9zM945.8 347.6l2.9 2.9l-2.9 2.9l-2.9 -2.9zM946.2 345.5l2.9 2.9l-2.9 2.9l-2.9 -2.9zM945.8 343.5l2.9 2.9l-2.9 2.9l-2.9 -2.9zM946.4 341.4l2.9 2.9l-2.9 2.9l-2.9 -2.9zM946.1 339.4l2.9 2.9l-2.9 2.9l-2.9 -2.9zM946.3 337.3l2.9 2.9l-2.9 2.9l-2.9 -2.9zM947 335.3l2.9 2.9l-2.9 2.9l-2.9 -2.9zM947.1 333.2l2.9 2.9l-2.9 2.9l-2.9 -2.9zM947.3 331.1l2.9 2.9l-2.9 2.9l-2.9 -2.9zM947.2 329.1l2.9 2.9l-2.9 2.9l-2.9 -2.9zM947.5 327l2.9 2.9l-2.9 2.9l-2.9 -2.9zM947.4 325l2.9 2.9l-2.9 2.9l-2.9 -2.9zM947.7 322.9l2.9 2.9l-2.9 2.9l-2.9 -2.9zM948.2 320.9l2.9 2.9l-2.9 2.9l-2.9 -2.9zM948.3 320.6l2.9 2.9l-2.9 2.9l-2.9 -2.9zM947.8 322.7l2.9 2.9l-2.9 2.9l-2.9 -2.9zM948 324.7l2.9 2.9l-2.9 2.9l-2.9 -2.9zM948.9 326.8l2.9 2.9l-2.9 2.9l-2.9 -2.9zM948.9 328.9l2.9 2.9l-2.9 2.9l-2.9 -2.9zM949.2 330.9l2.9 2.9l-2.9 2.9l-2.9 -2.9zM948.8 333l2.9 2.9l-2.9 2.9l-2.9 -2.9zM949.2 335l2.9 2.9l-2.9 2.9l-2.9 -2.9zM949.3 337.1l2.9 2.9l-2.9 2.9l-2.9 -2.9zM950 339.2l2.9 2.9l-2.9 2.9l-2.9 -2.9zM949.7 341.2l2.9 2.9l-2.9 2.9l-2.9 -2.9zM950.2 343.3l2.9 2.9l-2.9 2.9l-2.9 -2.9zM950.7 345.3l2.9 2.9l-2.9 2.9l-2.9 -2.9zM950.3 347.4l2.9 2.9l-2.9 2.9l-2.9 -2.9zM950.7 349.5l2.9 2.9l-2.9 2.9l-2.9 -2.9zM951 351.5l2.9 2.9l-2.9 2.9l-2.9 -2.9zM951.4 353.6l2.9 2.9l-2.9 2.9l-2.9 -2.9zM951.1 355.6l2.9 2.9l-2.9 2.9l-2.9 -2.9zM951.2 357.7l2.9 2.9l-2.9 2.9l-2.9 -2.9zM951.1 359.8l2.9 2.9l-2.9 2.9l-2.9 -2.9zM952.1 361.8l2.9 2.9l-2.9 2.9l-2.9 -2.9zM951.5 363.9l2.9 2.9l-2.9 2.9l-2.9 -2.9zM951.7 365.9l2.9 2.9l-2.9 2.9l-2.9 -2.9zM952.4 368l2.9 2.9l-2.9 2.9l-2.9 -2.9zM952.5 370.1l2.9 2.9l-2.9 2.9l-2.9 -2.9zM952.9 372.1l2.9 2.9l-2.9 2.9l-2.9 -2.9zM952.7 374.2l2.9 2.9l-2.9 2.9l-2.9 -2.9zM953.3 376.3l2.9 2.9l-2.9 2.9l-2.9 -2.9zM952.8 378.3l2.9 2.9l-2.9 2.9l-2.9 -2.9zM953.1 380.4l2.9 2.9l-2.9 2.9l-2.9 -2.9zM953.8 382.4l2.9 2.9l-2.9 2.9l-2.9 -2.9zM953.4 384.5l2.9 2.9l-2.9 2.9l-2.9 -2.9zM953.8 386.6l2.9 2.9l-2.9 2.9l-2.9 -2.9zM954.4 388.6l2.9 2.9l-2.9 2.9l-2.9 -2.9zM954.5 390.7l2.9 2.9l-2.9 2.9l-2.9 -2.9zM954.3 392.7l2.9 2.9l-2.9 2.9l-2.9 -2.9zM954.4 394.8l2.9 2.9l-2.9 2.9l-2.9 -2.9zM954.8 396.9l2.9 2.9l-2.9 2.9l-2.9 -2.9zM955.3 398.9l2.9 2.9l-2.9 2.9l-2.9 -2.9zM955.2 401l2.9 2.9l-2.9 2.9l-2.9 -2.9zM955.1 403l2.9 2.9l-2.9 2.9l-2.9 -2.9zM955.9 405.1l2.9 2.9l-2.9 2.9l-2.9 -2.9zM955.9 407.2l2.9 2.9l-2.9 2.9l-2.9 -2.9zM956.5 409.2l2.9 2.9l-2.9 2.9l-2.9 -2.9zM956.7 411.3l2.9 2.9l-2.9 2.9l-2.9 -2.9zM956.8 413.4l2.9 2.9l-2.9 2.9l-2.9 -2.9zM956.5 415.4l2.9 2.9l-2.9 2.9l-2.9 -2.9zM957.1 417.5l2.9 2.9l-2.9 2.9l-2.9 -2.9zM956.8 419.5l2.9 2.9l-2.9 2.9l-2.9 -2.9zM957 421.6l2.9 2.9l-2.9 2.9l-2.9 -2.9zM957.2 423.7l2.9 2.9l-2.9 2.9l-2.9 -2.9zM958 425.7l2.9 2.9l-2.9 2.9l-2.9 -2.9zM958.1 427.8l2.9 2.9l-2.9 2.9l-2.9 -2.9zM957.7 429.8l2.9 2.9l-2.9 2.9l-2.9 -2.9zM958 431.9l2.9 2.9l-2.9 2.9l-2.9 -2.9zM958.1 434l2.9 2.9l-2.9 2.9l-2.9 -2.9zM958.3 436l2.9 2.9l-2.9 2.9l-2.9 -2.9zM958.5 438.1l2.9 2.9l-2.9 2.9l-2.9 -2.9zM958.7 440.1l2.9 2.9l-2.9 2.9l-2.9 -2.9zM958.7 442.2l2.9 2.9l-2.9 2.9l-2.9 -2.9zM959.3 444.3l2.9 2.9l-2.9 2.9l-2.9 -2.9zM959.7 446.3l2.9 2.9l-2.9 2.9l-2.9 -2.9zM959.4 446.3l2.9 2.9l-2.9 2.9l-2.9 -2.9zM959.9 444.3l2.9 2.9l-2.9 2.9l-2.9 -2.9zM959.8 442.2l2.9 2.9l-2.9 2.9l-2.9 -2.9zM959.6 440.2l2.9 2.9l-2.9 2.9l-2.9 -2.9zM960.3 438.1l2.9 2.9l-2.9 2.9l-2.9 -2.9zM960.6 436l2.9 2.9l-2.9 2.9l-2.9 -2.9zM960.1 434l2.9 2.9l-2.9 2.9l-2.9 -2.9zM960 431.9l2.9 2.9l-2.9 2.9l-2.9 -2.9zM960.7 429.9l2.9 2.9l-2.9 2.9l-2.9 -2.9zM960.9 427.8l2.9 2.9l-2.9 2.9l-2.9 -2.9zM961.1 425.8l2.9 2.9l-2.9 2.9l-2.9 -2.9zM961.6 423.7l2.9 2.9l-2.9 2.9l-2.9 -2.9zM961.5 421.6l2.9 2.9l-2.9 2.9l-2.9 -2.9zM961.8 419.6l2.9 2.9l-2.9 2.9l-2.9 -2.9zM961.2 417.5l2.9 2.9l-2.9 2.9l-2.9 -2.9zM961.9 415.5l2.9 2.9l-2.9 2.9l-2.9 -2.9zM962.3 413.4l2.9 2.9l-2.9 2.9l-2.9 -2.9zM961.7 411.4l2.9 2.9l-2.9 2.9l-2.9 -2.9zM961.9 409.3l2.9 2.9l-2.9 2.9l-2.9 -2.9zM962.7 407.2l2.9 2.9l-2.9 2.9l-2.9 -2.9zM963 405.2l2.9 2.9l-2.9 2.9l-2.9 -2.9zM962.4 403.1l2.9 2.9l-2.9 2.9l-2.9 -2.9zM963.1 401.1l2.9 2.9l-2.9 2.9l-2.9 -2.9zM962.7 399l2.9 2.9l-2.9 2.9l-2.9 -2.9zM963.5 397l2.9 2.9l-2.9 2.9l-2.9 -2.9zM963.6 394.9l2.9 2.9l-2.9 2.9l-2.9 -2.9zM963.3 392.9l2.9 2.9l-2.9 2.9l-2.9 -2.9zM963.5 390.8l2.9 2.9l-2.9 2.9l-2.9 -2.9zM964.2 388.7l2.9 2.9l-2.9 2.9l-2.9 -2.9zM964.1 386.7l2.9 2.9l-2.9 2.9l-2.9 -2.9zM964.5 384.6l2.9 2.9l-2.9 2.9l-2.9 -2.9zM964.3 382.6l2.9 2.9l-2.9 2.9l-2.9 -2.9zM964.4 380.5l2.9 2.9l-2.9 2.9l-2.9 -2.9zM965.2 378.5l2.9 2.9l-2.9 2.9l-2.9 -2.9zM965 376.4l2.9 2.9l-2.9 2.9l-2.9 -2.9zM965 374.3l2.9 2.9l-2.9 2.9l-2.9 -2.9zM965.2 372.3l2.9 2.9l-2.9 2.9l-2.9 -2.9zM965.6 370.2l2.9 2.9l-2.9 2.9l-2.9 -2.9zM965.7 368.2l2.9 2.9l-2.9 2.9l-2.9 -2.9zM966.1 366.1l2.9 2.9l-2.9 2.9l-2.9 -2.9zM965.7 364.1l2.9 2.9l-2.9 2.9l-2.9 -2.9zM966.3 362l2.9 2.9l-2.9 2.9l-2.9 -2.9zM966.3 359.9l2.9 2.9l-2.9 2.9l-2.9 -2.9zM966.7 357.9l2.9 2.9l-2.9 2.9l-2.9 -2.9zM966.8 355.8l2.9 2.9l-2.9 2.9l-2.9 -2.9zM967 353.8l2.9 2.9l-2.9 2.9l-2.9 -2.9zM967.2 351.7l2.9 2.9l-2.9 2.9l-2.9 -2.9zM967.4 349.7l2.9 2.9l-2.9 2.9l-2.9 -2.9zM967.3 347.6l2.9 2.9l-2.9 2.9l-2.9 -2.9zM967.3 345.5l2.9 2.9l-2.9 2.9l-2.9 -2.9zM967.6 343.5l2.9 2.9l-2.9 2.9l-2.9 -2.9zM967.9 341.4l2.9 2.9l-2.9 2.9l-2.9 -2.9zM967.7 339.4l2.9 2.9l-2.9 2.9l-2.9 -2.9zM967.8 337.3l2.9 2.9l-2.9 2.9l-2.9 -2.9zM967.7 335.3l2.9 2.9l-2.9 2.9l-2.9 -2.9zM968.5 333.2l2.9 2.9l-2.9 2.9l-2.9 -2.9zM968.9 331.1l2.9 2.9l-2.9 2.9l-2.9 -2.9zM968.4 329.1l2.9 2.9l-2.9 2.9l-2.9 -2.9zM968.4 327l2.9 2.9l-2.9 2.9l-2.9 -2.9zM968.6 325l2.9 2.9l-2.9 2.9l-2.9 -2.9zM969 322.9l2.9 2.9l-2.9 2.9l-2.9 -2.9zM969 320.9l2.9 2.9l-2.9 2.9l-2.9 -2.9zM969.7 320.6l2.9 2.9l-2.9 2.9l-2.9 -2.9zM968.9 322.7l2.9 2.9l-2.9 2.9l-2.9 -2.9zM969.4 324.7l2.9 2.9l-2.9 2.9l-2.9 -2.9zM969.4 326.8l2.9 2.9l-2.9 2.9l-2.9 -2.9zM970.1 328.9l2.9 2.9l-2.9 2.9l-2.9 -2.9zM970.4 330.9l2.9 2.9l-2.9 2.9l-2.9 -2.9zM970 333l2.9 2.9l-2.9 2.9l-2.9 -2.9zM970.1 335l2.9 2.9l-2.9 2.9l-2.9 -2.9zM970.7 337.1l2.9 2.9l-2.9 2.9l-2.9 -2.9zM971 339.2l2.9 2.9l-2.9 2.9l-2.9 -2.9zM971.5 341.2l2.9 2.9l-2.9 2.9l-2.9 -2.9zM970.8 343.3l2.9 2.9l-2.9 2.9l-2.9 -2.9zM971.1 345.3l2.9 2.9l-2.9 2.9l-2.9 -2.9zM971.4 347.4l2.9 2.9l-2.9 2.9l-2.9 -2.9zM971.6 349.5l2.9 2.9l-2.9 2.9l-2.9 -2.9zM971.8 351.5l2.9 2.9l-2.9 2.9l-2.9 -2.9zM972.5 353.6l2.9 2.9l-2.9 2.9l-2.9 -2.9zM972.5 355.6l2.9 2.9l-2.9 2.9l-2.9 -2.9zM972.3 357.7l2.9 2.9l-2.9 2.9l-2.9 -2.9zM972.5 359.8l2.9 2.9l-2.9 2.9l-2.9 -2.9zM972.8 361.8l2.9 2.9l-2.9 2.9l-2.9 -2.9zM972.9 363.9l2.9 2.9l-2.9 2.9l-2.9 -2.9zM973.6 365.9l2.9 2.9l-2.9 2.9l-2.9 -2.9zM973.4 368l2.9 2.9l-2.9 2.9l-2.9 -2.9zM973.8 370.1l2.9 2.9l-2.9 2.9l-2.9 -2.9zM974.3 372.1l2.9 2.9l-2.9 2.9l-2.9 -2.9zM974.1 374.2l2.9 2.9l-2.9 2.9l-2.9 -2.9zM974.1 376.3l2.9 2.9l-2.9 2.9l-2.9 -2.9zM974.9 378.3l2.9 2.9l-2.9 2.9l-2.9 -2.9zM975.1 380.4l2.9 2.9l-2.9 2.9l-2.9 -2.9zM974.7 382.4l2.9 2.9l-2.9 2.9l-2.9 -2.9zM975.1 384.5l2.9 2.9l-2.9 2.9l-2.9 -2.9zM975.7 386.6l2.9 2.9l-2.9 2.9l-2.9 -2.9zM975.5 388.6l2.9 2.9l-2.9 2.9l-2.9 -2.9zM975.4 390.7l2.9 2.9l-2.9 2.9l-2.9 -2.9zM975.4 392.7l2.9 2.9l-2.9 2.9l-2.9 -2.9zM976.5 394.8l2.9 2.9l-2.9 2.9l-2.9 -2.9zM976.5 396.9l2.9 2.9l-2.9 2.9l-2.9 -2.9zM976.3 398.9l2.9 2.9l-2.9 2.9l-2.9 -2.9zM976.6 401l2.9 2.9l-2.9 2.9l-2.9 -2.9zM976.8 403l2.9 2.9l-2.9 2.9l-2.9 -2.9zM976.8 405.1l2.9 2.9l-2.9 2.9l-2.9 -2.9zM977.7 407.2l2.9 2.9l-2.9 2.9l-2.9 -2.9zM977.5 409.2l2.9 2.9l-2.9 2.9l-2.9 -2.9zM977.3 411.3l2.9 2.9l-2.9 2.9l-2.9 -2.9zM977.3 413.4l2.9 2.9l-2.9 2.9l-2.9 -2.9zM977.9 415.4l2.9 2.9l-2.9 2.9l-2.9 -2.9zM978 417.5l2.9 2.9l-2.9 2.9l-2.9 -2.9zM978.6 419.5l2.9 2.9l-2.9 2.9l-2.9 -2.9zM978.7 421.6l2.9 2.9l-2.9 2.9l-2.9 -2.9zM978.8 423.7l2.9 2.9l-2.9 2.9l-2.9 -2.9zM978.6 425.7l2.9 2.9l-2.9 2.9l-2.9 -2.9zM978.7 427.8l2.9 2.9l-2.9 2.9l-2.9 -2.9zM979.1 429.8l2.9 2.9l-2.9 2.9l-2.9 -2.9zM979.2 431.9l2.9 2.9l-2.9 2.9l-2.9 -2.9zM980 434l2.9 2.9l-2.9 2.9l-2.9 -2.9zM979.9 436l2.9 2.9l-2.9 2.9l-2.9 -2.9zM980.2 438.1l2.9 2.9l-2.9 2.9l-2.9 -2.9zM980.7 440.1l2.9 2.9l-2.9 2.9l-2.9 -2.9zM980.2 442.2l2.9 2.9l-2.9 2.9l-2.9 -2.9zM980.6 444.3l2.9 2.9l-2.9 2.9l-2.9 -2.9zM980.5 446.3l2.9 2.9l-2.9 2.9l-2.9 -2.9zM981.1 446.3l2.9 2.9l-2.9 2.9l-2.9 -2.9zM980.5 444.3l2.9 2.9l-2.9 2.9l-2.9 -2.9zM981.5 442.2l2.9 2.9l-2.9 2.9l-2.9 -2.9zM981.7 440.2l2.9 2.9l-2.9 2.9l-2.9 -2.9zM981.8 438.1l2.9 2.9l-2.9 2.9l-2.9 -2.9zM981.2 436l2.9 2.9l-2.9 2.9l-2.9 -2.9zM981.6 434l2.9 2.9l-2.9 2.9l-2.9 -2.9zM982.2 431.9l2.9 2.9l-2.9 2.9l-2.9 -2.9zM981.8 429.9l2.9 2.9l-2.9 2.9l-2.9 -2.9zM982.3 427.8l2.9 2.9l-2.9 2.9l-2.9 -2.9zM982.5 425.8l2.9 2.9l-2.9 2.9l-2.9 -2.9zM983.1 423.7l2.9 2.9l-2.9 2.9l-2.9 -2.9zM982.9 421.6l2.9 2.9l-2.9 2.9l-2.9 -2.9zM983.4 419.6l2.9 2.9l-2.9 2.9l-2.9 -2.9zM983 417.5l2.9 2.9l-2.9 2.9l-2.9 -2.9zM983.6 415.5l2.9 2.9l-2.9 2.9l-2.9 -2.9zM983.4 413.4l2.9 2.9l-2.9 2.9l-2.9 -2.9zM984.1 411.4l2.9 2.9l-2.9 2.9l-2.9 -2.9zM983.5 409.3l2.9 2.9l-2.9 2.9l-2.9 -2.9zM984.4 407.2l2.9 2.9l-2.9 2.9l-2.9 -2.9zM983.9 405.2l2.9 2.9l-2.9 2.9l-2.9 -2.9zM984.4 403.1l2.9 2.9l-2.9 2.9l-2.9 -2.9zM984.6 401.1l2.9 2.9l-2.9 2.9l-2.9 -2.9zM984.4 399l2.9 2.9l-2.9 2.9l-2.9 -2.9zM985.2 397l2.9 2.9l-2.9 2.9l-2.9 -2.9zM984.9 394.9l2.9 2.9l-2.9 2.9l-2.9 -2.9zM985 392.9l2.9 2.9l-2.9 2.9l-2.9 -2.9zM985 390.8l2.9 2.9l-2.9 2.9l-2.9 -2.9zM985.4 388.7l2.9 2.9l-2.9 2.9l-2.9 -2.9zM985.7 386.7l2.9 2.9l-2.9 2.9l-2.9 -2.9zM986.1 384.6l2.9 2.9l-2.9 2.9l-2.9 -2.9zM985.9 382.6l2.9 2.9l-2.9 2.9l-2.9 -2.9zM986.4 380.5l2.9 2.9l-2.9 2.9l-2.9 -2.9zM986 378.5l2.9 2.9l-2.9 2.9l-2.9 -2.9zM986.5 376.4l2.9 2.9l-2.9 2.9l-2.9 -2.9zM986.7 374.3l2.9 2.9l-2.9 2.9l-2.9 -2.9zM987.4 372.3l2.9 2.9l-2.9 2.9l-2.9 -2.9zM987.4 370.2l2.9 2.9l-2.9 2.9l-2.9 -2.9zM987.4 368.2l2.9 2.9l-2.9 2.9l-2.9 -2.9zM987 366.1l2.9 2.9l-2.9 2.9l-2.9 -2.9zM987.5 364.1l2.9 2.9l-2.9 2.9l-2.9 -2.9zM988 362l2.9 2.9l-2.9 2.9l-2.9 -2.9zM987.7 359.9l2.9 2.9l-2.9 2.9l-2.9 -2.9zM988.2 357.9l2.9 2.9l-2.9 2.9l-2.9 -2.9zM988.3 355.8l2.9 2.9l-2.9 2.9l-2.9 -2.9zM988 353.8l2.9 2.9l-2.9 2.9l-2.9 -2.9zM989.1 351.7l2.9 2.9l-2.9 2.9l-2.9 -2.9zM989.1 349.7l2.9 2.9l-2.9 2.9l-2.9 -2.9zM988.7 347.6l2.9 2.9l-2.9 2.9l-2.9 -2.9zM989.3 345.5l2.9 2.9l-2.9 2.9l-2.9 -2.9zM989.1 343.5l2.9 2.9l-2.9 2.9l-2.9 -2.9zM989.4 341.4l2.9 2.9l-2.9 2.9l-2.9 -2.9zM989.7 339.4l2.9 2.9l-2.9 2.9l-2.9 -2.9zM989.6 337.3l2.9 2.9l-2.9 2.9l-2.9 -2.9zM989.8 335.3l2.9 2.9l-2.9 2.9l-2.9 -2.9zM990.1 333.2l2.9 2.9l-2.9 2.9l-2.9 -2.9zM990.5 331.1l2.9 2.9l-2.9 2.9l-2.9 -2.9zM990.3 329.1l2.9 2.9l-2.9 2.9l-2.9 -2.9zM990.4 327l2.9 2.9l-2.9 2.9l-2.9 -2.9zM991.1 325l2.9 2.9l-2.9 2.9l-2.9 -2.9zM990.9 322.9l2.9 2.9l-2.9 2.9l-2.9 -2.9zM991.6 320.9l2.9 2.9l-2.9 2.9l-2.9 -2.9zM991.3 320.6l2.9 2.9l-2.9 2.9l-2.9 -2.9zM991.6 322.7l2.9 2.9l-2.9 2.9l-2.9 -2.9zM991.4 324.7l2.9 2.9l-2.9 2.9l-2.9 -2.9zM992.1 326.8l2.9 2.9l-2.9 2.9l-2.9 -2.9zM991.6 328.9l2.9 2.9l-2.9 2.9l-2.9 -2.9zM991.8 330.9l2.9 2.9l-2.9 2.9l-2.9 -2.9zM991.9 333l2.9 2.9l-2.9 2.9l-2.9 -2.9zM992.7 335l2.9 2.9l-2.9 2.9l-2.9 -2.9zM992.9 337.1l2.9 2.9l-2.9 2.9l-2.9 -2.9zM992.6 339.2l2.9 2.9l-2.9 2.9l-2.9 -2.9zM993 341.2l2.9 2.9l-2.9 2.9l-2.9 -2.9zM993.6 343.3l2.9 2.9l-2.9 2.9l-2.9 -2.9zM993.6 345.3l2.9 2.9l-2.9 2.9l-2.9 -2.9zM993.3 347.4l2.9 2.9l-2.9 2.9l-2.9 -2.9zM993.6 349.5l2.9 2.9l-2.9 2.9l-2.9 -2.9zM993.7 351.5l2.9 2.9l-2.9 2.9l-2.9 -2.9zM993.9 353.6l2.9 2.9l-2.9 2.9l-2.9 -2.9zM994.3 355.6l2.9 2.9l-2.9 2.9l-2.9 -2.9zM994.2 357.7l2.9 2.9l-2.9 2.9l-2.9 -2.9zM995.2 359.8l2.9 2.9l-2.9 2.9l-2.9 -2.9zM994.9 361.8l2.9 2.9l-2.9 2.9l-2.9 -2.9zM995.2 363.9l2.9 2.9l-2.9 2.9l-2.9 -2.9zM995.5 365.9l2.9 2.9l-2.9 2.9l-2.9 -2.9zM995.8 368l2.9 2.9l-2.9 2.9l-2.9 -2.9zM996.1 370.1l2.9 2.9l-2.9 2.9l-2.9 -2.9zM995.8 372.1l2.9 2.9l-2.9 2.9l-2.9 -2.9zM996 374.2l2.9 2.9l-2.9 2.9l-2.9 -2.9zM996.2 376.3l2.9 2.9l-2.9 2.9l-2.9 -2.9zM996 378.3l2.9 2.9l-2.9 2.9l-2.9 -2.9zM996.6 380.4l2.9 2.9l-2.9 2.9l-2.9 -2.9zM997.1 382.4l2.9 2.9l-2.9 2.9l-2.9 -2.9zM997.6 384.5l2.9 2.9l-2.9 2.9l-2.9 -2.9zM997.6 386.6l2.9 2.9l-2.9 2.9l-2.9 -2.9zM997.6 388.6l2.9 2.9l-2.9 2.9l-2.9 -2.9zM997.8 390.7l2.9 2.9l-2.9 2.9l-2.9 -2.9zM997.4 392.7l2.9 2.9l-2.9 2.9l-2.9 -2.9zM997.9 394.8l2.9 2.9l-2.9 2.9l-2.9 -2.9zM998.1 396.9l2.9 2.9l-2.9 2.9l-2.9 -2.9zM998.6 398.9l2.9 2.9l-2.9 2.9l-2.9 -2.9zM998.2 401l2.9 2.9l-2.9 2.9l-2.9 -2.9zM998.7 403l2.9 2.9l-2.9 2.9l-2.9 -2.9zM999 405.1l2.9 2.9l-2.9 2.9l-2.9 -2.9zM999.5 407.2l2.9 2.9l-2.9 2.9l-2.9 -2.9zM999.7 409.2l2.9 2.9l-2.9 2.9l-2.9 -2.9zM999.7 411.3l2.9 2.9l-2.9 2.9l-2.9 -2.9zM999.4 413.4l2.9 2.9l-2.9 2.9l-2.9 -2.9zM1000.2 415.4l2.9 2.9l-2.9 2.9l-2.9 -2.9zM1000.5 417.5l2.9 2.9l-2.9 2.9l-2.9 -2.9zM1000.4 419.5l2.9 2.9l-2.9 2.9l-2.9 -2.9zM1000.4 421.6l2.9 2.9l-2.9 2.9l-2.9 -2.9zM1000.7 423.7l2.9 2.9l-2.9 2.9l-2.9 -2.9zM1000.5 425.7l2.9 2.9l-2.9 2.9l-2.9 -2.9zM1001.3 427.8l2.9 2.9l-2.9 2.9l-2.9 -2.9zM1001.8 429.8l2.9 2.9l-2.9 2.9l-2.9 -2.9zM1001.5 431.9l2.9 2.9l-2.9 2.9l-2.9 -2.9zM1001.9 434l2.9 2.9l-2.9 2.9l-2.9 -2.9zM1002.2 436l2.9 2.9l-2.9 2.9l-2.9 -2.9zM1001.7 438.1l2.9 2.9l-2.9 2.9l-2.9 -2.9zM1002.7 440.1l2.9 2.9l-2.9 2.9l-2.9 -2.9zM1002.5 442.2l2.9 2.9l-2.9 2.9l-2.9 -2.9zM1002.3 444.3l2.9 2.9l-2.9 2.9l-2.9 -2.9zM1002.4 446.3l2.9 2.9l-2.9 2.9l-2.9 -2.9zM1002.5 446.3l2.9 2.9l-2.9 2.9l-2.9 -2.9zM1003 444.3l2.9 2.9l-2.9 2.9l-2.9 -2.9zM1003.3 442.2l2.9 2.9l-2.9 2.9l-2.9 -2.9zM1003.1 440.2l2.9 2.9l-2.9 2.9l-2.9 -2.9zM1003.9 438.1l2.9 2.9l-2.9 2.9l-2.9 -2.9zM1003.5 436l2.9 2.9l-2.9 2.9l-2.9 -2.9zM1003.7 434l2.9 2.9l-2.9 2.9l-2.9 -2.9zM1003.6 431.9l2.9 2.9l-2.9 2.9l-2.9 -2.9zM1004.6 429.9l2.9 2.9l-2.9 2.9l-2.9 -2.9zM1003.9 427.8l2.9 2.9l-2.9 2.9l-2.9 -2.9zM1004.8 425.8l2.9 2.9l-2.9 2.9l-2.9 -2.9zM1004.6 423.7l2.9 2.9l-2.9 2.9l-2.9 -2.9zM1004.8 421.6l2.9 2.9l-2.9 2.9l-2.9 -2.9zM1005 419.6l2.9 2.9l-2.9 2.9l-2.9 -2.9zM1004.9 417.5l2.9 2.9l-2.9 2.9l-2.9 -2.9zM1005.7 415.5l2.9 2.9l-2.9 2.9l-2.9 -2.9zM1005.9 413.4l2.9 2.9l-2.9 2.9l-2.9 -2.9zM1005.9 411.4l2.9 2.9l-2.9 2.9l-2.9 -2.9zM1005.9 409.3l2.9 2.9l-2.9 2.9l-2.9 -2.9zM1005.5 407.2l2.9 2.9l-2.9 2.9l-2.9 -2.9zM1006.4 405.2l2.9 2.9l-2.9 2.9l-2.9 -2.9zM1006 403.1l2.9 2.9l-2.9 2.9l-2.9 -2.9zM1006.8 401.1l2.9 2.9l-2.9 2.9l-2.9 -2.9zM1006.3 399l2.9 2.9l-2.9 2.9l-2.9 -2.9zM1006.8 397l2.9 2.9l-2.9 2.9l-2.9 -2.9zM1007.2 394.9l2.9 2.9l-2.9 2.9l-2.9 -2.9zM1006.7 392.9l2.9 2.9l-2.9 2.9l-2.9 -2.9zM1007.3 390.8l2.9 2.9l-2.9 2.9l-2.9 -2.9zM1007 388.7l2.9 2.9l-2.9 2.9l-2.9 -2.9zM1007.1 386.7l2.9 2.9l-2.9 2.9l-2.9 -2.9zM1007.4 384.6l2.9 2.9l-2.9 2.9l-2.9 -2.9zM1008.4 382.6l2.9 2.9l-2.9 2.9l-2.9 -2.9zM1008.5 380.5l2.9 2.9l-2.9 2.9l-2.9 -2.9zM1008.4 378.5l2.9 2.9l-2.9 2.9l-2.9 -2.9zM1008.2 376.4l2.9 2.9l-2.9 2.9l-2.9 -2.9zM1008.7 374.3l2.9 2.9l-2.9 2.9l-2.9 -2.9zM1008.9 372.3l2.9 2.9l-2.9 2.9l-2.9 -2.9zM1008.7 370.2l2.9 2.9l-2.9 2.9l-2.9 -2.9zM1009.1 368.2l2.9 2.9l-2.9 2.9l-2.9 -2.9zM1009.5 366.1l2.9 2.9l-2.9 2.9l-2.9 -2.9zM1008.9 364.1l2.9 2.9l-2.9 2.9l-2.9 -2.9zM1009.2 362l2.9 2.9l-2.9 2.9l-2.9 -2.9zM1009.7 359.9l2.9 2.9l-2.9 2.9l-2.9 -2.9zM1009.5 357.9l2.9 2.9l-2.9 2.9l-2.9 -2.9zM1009.9 355.8l2.9 2.9l-2.9 2.9l-2.9 -2.9zM1010.2 353.8l2.9 2.9l-2.9 2.9l-2.9 -2.9zM1010 351.7l2.9 2.9l-2.9 2.9l-2.9 -2.9zM1010.5 349.7l2.9 2.9l-2.9 2.9l-2.9 -2.9zM1010.4 347.6l2.9 2.9l-2.9 2.9l-2.9 -2.9zM1010.9 345.5l2.9 2.9l-2.9 2.9l-2.9 -2.9zM1010.8 343.5l2.9 2.9l-2.9 2.9l-2.9 -2.9zM1011.3 341.4l2.9 2.9l-2.9 2.9l-2.9 -2.9zM1010.9 339.4l2.9 2.9l-2.9 2.9l-2.9 -2.9zM1011.7 337.3l2.9 2.9l-2.9 2.9l-2.9 -2.9zM1011.3 335.3l2.9 2.9l-2.9 2.9l-2.9 -2.9zM1012.3 333.2l2.9 2.9l-2.9 2.9l-2.9 -2.9zM1012.1 331.1l2.9 2.9l-2.9 2.9l-2.9 -2.9zM1012.1 329.1l2.9 2.9l-2.9 2.9l-2.9 -2.9zM1012.2 327l2.9 2.9l-2.9 2.9l-2.9 -2.9zM1012.6 325l2.9 2.9l-2.9 2.9l-2.9 -2.9zM1012.8 322.9l2.9 2.9l-2.9 2.9l-2.9 -2.9zM1013.1 320.9l2.9 2.9l-2.9 2.9l-2.9 -2.9zM1013.1 320.6l2.9 2.9l-2.9 2.9l-2.9 -2.9zM1013 322.7l2.9 2.9l-2.9 2.9l-2.9 -2.9zM1013.7 324.7l2.9 2.9l-2.9 2.9l-2.9 -2.9zM1013.7 326.8l2.9 2.9l-2.9 2.9l-2.9 -2.9zM1013.9 328.9l2.9 2.9l-2.9 2.9l-2.9 -2.9zM1013.6 330.9l2.9 2.9l-2.9 2.9l-2.9 -2.9zM1013.9 333l2.9 2.9l-2.9 2.9l-2.9 -2.9zM1014.2 335l2.9 2.9l-2.9 2.9l-2.9 -2.9zM1014.7 337.1l2.9 2.9l-2.9 2.9l-2.9 -2.9zM1014.5 339.2l2.9 2.9l-2.9 2.9l-2.9 -2.9zM1014.7 341.2l2.9 2.9l-2.9 2.9l-2.9 -2.9zM1014.8 343.3l2.9 2.9l-2.9 2.9l-2.9 -2.9zM1015.4 345.3l2.9 2.9l-2.9 2.9l-2.9 -2.9zM1015.1 347.4l2.9 2.9l-2.9 2.9l-2.9 -2.9zM1015 349.5l2.9 2.9l-2.9 2.9l-2.9 -2.9zM1015.8 351.5l2.9 2.9l-2.9 2.9l-2.9 -2.9zM1016.2 353.6l2.9 2.9l-2.9 2.9l-2.9 -2.9zM1016.2 355.6l2.9 2.9l-2.9 2.9l-2.9 -2.9zM1016.3 357.7l2.9 2.9l-2.9 2.9l-2.9 -2.9zM1016.6 359.8l2.9 2.9l-2.9 2.9l-2.9 -2.9zM1016.3 361.8l2.9 2.9l-2.9 2.9l-2.9 -2.9zM1016.8 363.9l2.9 2.9l-2.9 2.9l-2.9 -2.9zM1016.5 365.9l2.9 2.9l-2.9 2.9l-2.9 -2.9zM1016.7 368l2.9 2.9l-2.9 2.9l-2.9 -2.9zM1017.2 370.1l2.9 2.9l-2.9 2.9l-2.9 -2.9zM1017.5 372.1l2.9 2.9l-2.9 2.9l-2.9 -2.9zM1017.6 374.2l2.9 2.9l-2.9 2.9l-2.9 -2.9zM1017.4 376.3l2.9 2.9l-2.9 2.9l-2.9 -2.9zM1018.2 378.3l2.9 2.9l-2.9 2.9l-2.9 -2.9zM1018.2 380.4l2.9 2.9l-2.9 2.9l-2.9 -2.9zM1018.1 382.4l2.9 2.9l-2.9 2.9l-2.9 -2.9zM1018.4 384.5l2.9 2.9l-2.9 2.9l-2.9 -2.9zM1018.7 386.6l2.9 2.9l-2.9 2.9l-2.9 -2.9zM1018.7 388.6l2.9 2.9l-2.9 2.9l-2.9 -2.9zM1018.7 390.7l2.9 2.9l-2.9 2.9l-2.9 -2.9zM1019.8 392.7l2.9 2.9l-2.9 2.9l-2.9 -2.9zM1020 394.8l2.9 2.9l-2.9 2.9l-2.9 -2.9zM1019.9 396.9l2.9 2.9l-2.9 2.9l-2.9 -2.9zM1020.3 398.9l2.9 2.9l-2.9 2.9l-2.9 -2.9zM1020 401l2.9 2.9l-2.9 2.9l-2.9 -2.9zM1020.6 403l2.9 2.9l-2.9 2.9l-2.9 -2.9zM1020.2 405.1l2.9 2.9l-2.9 2.9l-2.9 -2.9zM1020.9 407.2l2.9 2.9l-2.9 2.9l-2.9 -2.9zM1020.9 409.2l2.9 2.9l-2.9 2.9l-2.9 -2.9zM1021.4 411.3l2.9 2.9l-2.9 2.9l-2.9 -2.9zM1020.8 413.4l2.9 2.9l-2.9 2.9l-2.9 -2.9zM1021.7 415.4l2.9 2.9l-2.9 2.9l-2.9 -2.9zM1021.2 417.5l2.9 2.9l-2.9 2.9l-2.9 -2.9zM1021.8 419.5l2.9 2.9l-2.9 2.9l-2.9 -2.9zM1022.4 421.6l2.9 2.9l-2.9 2.9l-2.9 -2.9zM1021.6 423.7l2.9 2.9l-2.9 2.9l-2.9 -2.9zM1022.1 425.7l2.9 2.9l-2.9 2.9l-2.9 -2.9zM1022.3 427.8l2.9 2.9l-2.9 2.9l-2.9 -2.9zM1022.5 429.8l2.9 2.9l-2.9 2.9l-2.9 -2.9zM1022.5 431.9l2.9 2.9l-2.9 2.9l-2.9 -2.9zM1023.5 434l2.9 2.9l-2.9 2.9l-2.9 -2.9zM1023.6 436l2.9 2.9l-2.9 2.9l-2.9 -2.9zM1023.3 438.1l2.9 2.9l-2.9 2.9l-2.9 -2.9zM1023.5 440.1l2.9 2.9l-2.9 2.9l-2.9 -2.9zM1023.9 442.2l2.9 2.9l-2.9 2.9l-2.9 -2.9zM1023.6 444.3l2.9 2.9l-2.9 2.9l-2.9 -2.9zM1023.7 446.3l2.9 2.9l-2.9 2.9l-2.9 -2.9zM1024.6 446.3l2.9 2.9l-2.9 2.9l-2.9 -2.9zM1024.2 444.3l2.9 2.9l-2.9 2.9l-2.9 -2.9zM1024.5 442.2l2.9 2.9l-2.9 2.9l-2.9 -2.9zM1025.1 440.2l2.9 2.9l-2.9 2.9l-2.9 -2.9zM1025.3 438.1l2.9 2.9l-2.9 2.9l-2.9 -2.9zM1025 436l2.9 2.9l-2.9 2.9l-2.9 -2.9zM1024.9 434l2.9 2.9l-2.9 2.9l-2.9 -2.9zM1025.1 431.9l2.9 2.9l-2.9 2.9l-2.9 -2.9zM1025.9 429.9l2.9 2.9l-2.9 2.9l-2.9 -2.9zM1026 427.8l2.9 2.9l-2.9 2.9l-2.9 -2.9zM1025.5 425.8l2.9 2.9l-2.9 2.9l-2.9 -2.9zM1026.3 423.7l2.9 2.9l-2.9 2.9l-2.9 -2.9zM1026 421.6l2.9 2.9l-2.9 2.9l-2.9 -2.9zM1026.3 419.6l2.9 2.9l-2.9 2.9l-2.9 -2.9zM1026.1 417.5l2.9 2.9l-2.9 2.9l-2.9 -2.9zM1027 415.5l2.9 2.9l-2.9 2.9l-2.9 -2.9zM1027.3 413.4l2.9 2.9l-2.9 2.9l-2.9 -2.9zM1026.6 411.4l2.9 2.9l-2.9 2.9l-2.9 -2.9zM1027.2 409.3l2.9 2.9l-2.9 2.9l-2.9 -2.9zM1026.9 407.2l2.9 2.9l-2.9 2.9l-2.9 -2.9zM1027.8 405.2l2.9 2.9l-2.9 2.9l-2.9 -2.9zM1027.1 403.1l2.9 2.9l-2.9 2.9l-2.9 -2.9zM1027.3 401.1l2.9 2.9l-2.9 2.9l-2.9 -2.9zM1028.1 399l2.9 2.9l-2.9 2.9l-2.9 -2.9zM1027.9 397l2.9 2.9l-2.9 2.9l-2.9 -2.9zM1028.6 394.9l2.9 2.9l-2.9 2.9l-2.9 -2.9zM1028.7 392.9l2.9 2.9l-2.9 2.9l-2.9 -2.9zM1028.8 390.8l2.9 2.9l-2.9 2.9l-2.9 -2.9zM1028.3 388.7l2.9 2.9l-2.9 2.9l-2.9 -2.9zM1029.1 386.7l2.9 2.9l-2.9 2.9l-2.9 -2.9zM1029.5 384.6l2.9 2.9l-2.9 2.9l-2.9 -2.9zM1029.1 382.6l2.9 2.9l-2.9 2.9l-2.9 -2.9zM1028.9 380.5l2.9 2.9l-2.9 2.9l-2.9 -2.9zM1029.2 378.5l2.9 2.9l-2.9 2.9l-2.9 -2.9zM1029.5 376.4l2.9 2.9l-2.9 2.9l-2.9 -2.9zM1030 374.3l2.9 2.9l-2.9 2.9l-2.9 -2.9zM1029.7 372.3l2.9 2.9l-2.9 2.9l-2.9 -2.9zM1029.8 370.2l2.9 2.9l-2.9 2.9l-2.9 -2.9zM1030 368.2l2.9 2.9l-2.9 2.9l-2.9 -2.9zM1030.6 366.1l2.9 2.9l-2.9 2.9l-2.9 -2.9zM1030.9 364.1l2.9 2.9l-2.9 2.9l-2.9 -2.9zM1030.7 362l2.9 2.9l-2.9 2.9l-2.9 -2.9zM1031.1 359.9l2.9 2.9l-2.9 2.9l-2.9 -2.9zM1031.5 357.9l2.9 2.9l-2.9 2.9l-2.9 -2.9zM1031.4 355.8l2.9 2.9l-2.9 2.9l-2.9 -2.9zM1031.2 353.8l2.9 2.9l-2.9 2.9l-2.9 -2.9zM1031.4 351.7l2.9 2.9l-2.9 2.9l-2.9 -2.9zM1032.2 349.7l2.9 2.9l-2.9 2.9l-2.9 -2.9zM1032.1 347.6l2.9 2.9l-2.9 2.9l-2.9 -2.9zM1031.8 345.5l2.9 2.9l-2.9 2.9l-2.9 -2.9zM1032.4 343.5l2.9 2.9l-2.9 2.9l-2.9 -2.9zM1032 341.4l2.9 2.9l-2.9 2.9l-2.9 -2.9zM1033 339.4l2.9 2.9l-2.9 2.9l-2.9 -2.9zM1032.7 337.3l2.9 2.9l-2.9 2.9l-2.9 -2.9zM1032.9 335.3l2.9 2.9l-2.9 2.9l-2.9 -2.9zM1033.1 333.2l2.9 2.9l-2.9 2.9l-2.9 -2.9zM1032.7 331.1l2.9 2.9l-2.9 2.9l-2.9 -2.9zM1033.5 329.1l2.9 2.9l-2.9 2.9l-2.9 -2.9zM1033.3 327l2.9 2.9l-2.9 2.9l-2.9 -2.9zM1033.4 325l2.9 2.9l-2.9 2.9l-2.9 -2.9zM1034.1 322.9l2.9 2.9l-2.9 2.9l-2.9 -2.9zM1033.6 320.9l2.9 2.9l-2.9 2.9l-2.9 -2.9zM1033.8 320.6l2.9 2.9l-2.9 2.9l-2.9 -2.9zM1034.5 322.7l2.9 2.9l-2.9 2.9l-2.9 -2.9zM1034.1 324.7l2.9 2.9l-2.9 2.9l-2.9 -2.9zM1034.4 326.8l2.9 2.9l-2.9 2.9l-2.9 -2.9zM1034.8 328.8l2.9 2.9l-2.9 2.9l-2.9 -2.9zM1034.7 330.9l2.9 2.9l-2.9 2.9l-2.9 -2.9zM1035.6 332.9l2.9 2.9l-2.9 2.9l-2.9 -2.9zM1035.9 335l2.9 2.9l-2.9 2.9l-2.9 -2.9zM1035.1 337l2.9 2.9l-2.9 2.9l-2.9 -2.9zM1035.7 339.1l2.9 2.9l-2.9 2.9l-2.9 -2.9zM1036.2 341.1l2.9 2.9l-2.9 2.9l-2.9 -2.9zM1036 343.2l2.9 2.9l-2.9 2.9l-2.9 -2.9zM1036.8 345.2l2.9 2.9l-2.9 2.9l-2.9 -2.9zM1036.6 347.3l2.9 2.9l-2.9 2.9l-2.9 -2.9zM1036.4 349.3l2.9 2.9l-2.9 2.9l-2.9 -2.9zM1037 351.4l2.9 2.9l-2.9 2.9l-2.9 -2.9zM1037.3 353.4l2.9 2.9l-2.9 2.9l-2.9 -2.9zM1037.2 355.5l2.9 2.9l-2.9 2.9l-2.9 -2.9zM1037.7 357.5l2.9 2.9l-2.9 2.9l-2.9 -2.9zM1038 359.6l2.9 2.9l-2.9 2.9l-2.9 -2.9zM1038 361.6l2.9 2.9l-2.9 2.9l-2.9 -2.9zM1038.1 363.7l2.9 2.9l-2.9 2.9l-2.9 -2.9zM1038.7 365.7l2.9 2.9l-2.9 2.9l-2.9 -2.9zM1038.7 367.8l2.9 2.9l-2.9 2.9l-2.9 -2.9zM1038.7 369.8l2.9 2.9l-2.9 2.9l-2.9 -2.9zM1039.4 371.9l2.9 2.9l-2.9 2.9l-2.9 -2.9zM1038.8 373.9l2.9 2.9l-2.9 2.9l-2.9 -2.9zM1039.6 376l2.9 2.9l-2.9 2.9l-2.9 -2.9zM1039.2 378l2.9 2.9l-2.9 2.9l-2.9 -2.9zM1039.8 380.1l2.9 2.9l-2.9 2.9l-2.9 -2.9zM1039.6 382.1l2.9 2.9l-2.9 2.9l-2.9 -2.9zM1040 384.2l2.9 2.9l-2.9 2.9l-2.9 -2.9zM1040.6 386.2l2.9 2.9l-2.9 2.9l-2.9 -2.9zM1040.8 388.3l2.9 2.9l-2.9 2.9l-2.9 -2.9zM1041 390.3l2.9 2.9l-2.9 2.9l-2.9 -2.9zM1040.6 392.4l2.9 2.9l-2.9 2.9l-2.9 -2.9zM1041.1 394.4l2.9 2.9l-2.9 2.9l-2.9 -2.9zM1041 396.5l2.9 2.9l-2.9 2.9l-2.9 -2.9zM1041.6 398.5l2.9 2.9l-2.9 2.9l-2.9 -2.9zM1041.7 400.6l2.9 2.9l-2.9 2.9l-2.9 -2.9zM1041.4 402.6l2.9 2.9l-2.9 2.9l-2.9 -2.9zM1042.2 404.7l2.9 2.9l-2.9 2.9l-2.9 -2.9zM1042.5 406.7l2.9 2.9l-2.9 2.9l-2.9 -2.9zM1042.5 408.8l2.9 2.9l-2.9 2.9l-2.9 -2.9zM1043 410.8l2.9 2.9l-2.9 2.9l-2.9 -2.9zM1042.5 412.9l2.9 2.9l-2.9 2.9l-2.9 -2.9zM1042.7 414.9l2.9 2.9l-2.9 2.9l-2.9 -2.9zM1042.8 417l2.9 2.9l-2.9 2.9l-2.9 -2.9zM1043.4 419l2.9 2.9l-2.9 2.9l-2.9 -2.9zM1043.6 421.1l2.9 2.9l-2.9 2.9l-2.9 -2.9zM1043.8 423.1l2.9 2.9l-2.9 2.9l-2.9 -2.9zM1043.8 425.2l2.9 2.9l-2.9 2.9l-2.9 -2.9zM1044.5 427.2l2.9 2.9l-2.9 2.9l-2.9 -2.9zM1044 429.3l2.9 2.9l-2.9 2.9l-2.9 -2.9zM1045 431.3l2.9 2.9l-2.9 2.9l-2.9 -2.9zM1044.9 433.4l2.9 2.9l-2.9 2.9l-2.9 -2.9zM1045.1 435.4l2.9 2.9l-2.9 2.9l-2.9 -2.9zM1045.5 437.5l2.9 2.9l-2.9 2.9l-2.9 -2.9zM1045.1 439.5l2.9 2.9l-2.9 2.9l-2.9 -2.9zM1045.3 441.6l2.9 2.9l-2.9 2.9l-2.9 -2.9zM1045.6 443.6l2.9 2.9l-2.9 2.9l-2.9 -2.9zM1045.5 445.7l2.9 2.9l-2.9 2.9l-2.9 -2.9zM1045.8 445.7l2.9 2.9l-2.9 2.9l-2.9 -2.9zM1046.3 443.6l2.9 2.9l-2.9 2.9l-2.9 -2.9zM1046.3 441.5l2.9 2.9l-2.9 2.9l-2.9 -2.9zM1046.2 439.4l2.9 2.9l-2.9 2.9l-2.9 -2.9zM1046.7 437.4l2.9 2.9l-2.9 2.9l-2.9 -2.9zM1046.4 435.3l2.9 2.9l-2.9 2.9l-2.9 -2.9zM1047.2 433.2l2.9 2.9l-2.9 2.9l-2.9 -2.9zM1046.7 431.1l2.9 2.9l-2.9 2.9l-2.9 -2.9zM1047 429l2.9 2.9l-2.9 2.9l-2.9 -2.9zM1047 427l2.9 2.9l-2.9 2.9l-2.9 -2.9zM1047.7 424.9l2.9 2.9l-2.9 2.9l-2.9 -2.9zM1048 422.8l2.9 2.9l-2.9 2.9l-2.9 -2.9zM1048.1 420.7l2.9 2.9l-2.9 2.9l-2.9 -2.9zM1047.6 418.6l2.9 2.9l-2.9 2.9l-2.9 -2.9zM1048.1 416.6l2.9 2.9l-2.9 2.9l-2.9 -2.9zM1048.2 414.5l2.9 2.9l-2.9 2.9l-2.9 -2.9zM1048.2 412.4l2.9 2.9l-2.9 2.9l-2.9 -2.9zM1049.1 410.3l2.9 2.9l-2.9 2.9l-2.9 -2.9zM1048.3 408.2l2.9 2.9l-2.9 2.9l-2.9 -2.9zM1048.9 406.2l2.9 2.9l-2.9 2.9l-2.9 -2.9zM1049.3 404.1l2.9 2.9l-2.9 2.9l-2.9 -2.9zM1049.7 402l2.9 2.9l-2.9 2.9l-2.9 -2.9zM1049 399.9l2.9 2.9l-2.9 2.9l-2.9 -2.9zM1049.5 397.8l2.9 2.9l-2.9 2.9l-2.9 -2.9zM1049.9 395.8l2.9 2.9l-2.9 2.9l-2.9 -2.9zM1049.4 393.7l2.9 2.9l-2.9 2.9l-2.9 -2.9zM1049.7 391.6l2.9 2.9l-2.9 2.9l-2.9 -2.9zM1050.5 389.5l2.9 2.9l-2.9 2.9l-2.9 -2.9zM1049.9 387.4l2.9 2.9l-2.9 2.9l-2.9 -2.9zM1050.3 385.4l2.9 2.9l-2.9 2.9l-2.9 -2.9zM1050.4 383.3l2.9 2.9l-2.9 2.9l-2.9 -2.9zM1050.7 381.2l2.9 2.9l-2.9 2.9l-2.9 -2.9zM1050.5 379.1l2.9 2.9l-2.9 2.9l-2.9 -2.9zM1050.6 377l2.9 2.9l-2.9 2.9l-2.9 -2.9zM1051.7 375l2.9 2.9l-2.9 2.9l-2.9 -2.9zM1051.6 372.9l2.9 2.9l-2.9 2.9l-2.9 -2.9zM1051.8 370.8l2.9 2.9l-2.9 2.9l-2.9 -2.9zM1051.4 368.7l2.9 2.9l-2.9 2.9l-2.9 -2.9zM1051.6 366.6l2.9 2.9l-2.9 2.9l-2.9 -2.9zM1052 364.6l2.9 2.9l-2.9 2.9l-2.9 -2.9zM1051.9 362.5l2.9 2.9l-2.9 2.9l-2.9 -2.9zM1052.2 360.4l2.9 2.9l-2.9 2.9l-2.9 -2.9zM1052.9 358.3l2.9 2.9l-2.9 2.9l-2.9 -2.9zM1052.5 356.2l2.9 2.9l-2.9 2.9l-2.9 -2.9zM1052.6 354.2l2.9 2.9l-2.9 2.9l-2.9 -2.9zM1053.4 352.1l2.9 2.9l-2.9 2.9l-2.9 -2.9zM1053.2 350l2.9 2.9l-2.9 2.9l-2.9 -2.9zM1052.7 347.9l2.9 2.9l-2.9 2.9l-2.9 -2.9zM1053.3 345.8l2.9 2.9l-2.9 2.9l-2.9 -2.9zM1053.7 343.7l2.9 2.9l-2.9 2.9l-2.9 -2.9zM1053.2 341.7l2.9 2.9l-2.9 2.9l-2.9 -2.9zM1053.7 339.6l2.9 2.9l-2.9 2.9l-2.9 -2.9zM1054.2 337.5l2.9 2.9l-2.9 2.9l-2.9 -2.9zM1054.5 335.4l2.9 2.9l-2.9 2.9l-2.9 -2.9zM1054.4 333.3l2.9 2.9l-2.9 2.9l-2.9 -2.9zM1054.8 331.3l2.9 2.9l-2.9 2.9l-2.9 -2.9zM1054.5 329.2l2.9 2.9l-2.9 2.9l-2.9 -2.9zM1054.6 327.1l2.9 2.9l-2.9 2.9l-2.9 -2.9zM1055.2 325l2.9 2.9l-2.9 2.9l-2.9 -2.9zM1054.9 322.9l2.9 2.9l-2.9 2.9l-2.9 -2.9zM1055.5 320.9l2.9 2.9l-2.9 2.9l-2.9 -2.9z" fill="url(#gS)"/>
<path d="M926.6 458.6l2.9 2.9l-2.9 2.9l-2.9 -2.9zM926.7 460.7l2.9 2.9l-2.9 2.9l-2.9 -2.9zM926.8 462.8l2.9 2.9l-2.9 2.9l-2.9 -2.9zM926.9 464.8l2.9 2.9l-2.9 2.9l-2.9 -2.9zM927 466.9l2.9 2.9l-2.9 2.9l-2.9 -2.9zM927.2 469l2.9 2.9l-2.9 2.9l-2.9 -2.9zM927.3 471.1l2.9 2.9l-2.9 2.9l-2.9 -2.9zM927.4 473.2l2.9 2.9l-2.9 2.9l-2.9 -2.9zM927.5 475.3l2.9 2.9l-2.9 2.9l-2.9 -2.9zM927.6 477.3l2.9 2.9l-2.9 2.9l-2.9 -2.9zM927.7 479.4l2.9 2.9l-2.9 2.9l-2.9 -2.9zM927.8 481.5l2.9 2.9l-2.9 2.9l-2.9 -2.9zM927.9 483.6l2.9 2.9l-2.9 2.9l-2.9 -2.9zM928 485.7l2.9 2.9l-2.9 2.9l-2.9 -2.9zM928.2 487.7l2.9 2.9l-2.9 2.9l-2.9 -2.9zM928.3 489.8l2.9 2.9l-2.9 2.9l-2.9 -2.9zM928.4 491.9l2.9 2.9l-2.9 2.9l-2.9 -2.9zM928.5 494l2.9 2.9l-2.9 2.9l-2.9 -2.9zM928.6 496.1l2.9 2.9l-2.9 2.9l-2.9 -2.9zM945.2 496.7l2.9 2.9l-2.9 2.9l-2.9 -2.9zM945.4 494.6l2.9 2.9l-2.9 2.9l-2.9 -2.9zM945.5 492.5l2.9 2.9l-2.9 2.9l-2.9 -2.9zM945.7 490.4l2.9 2.9l-2.9 2.9l-2.9 -2.9zM945.8 488.2l2.9 2.9l-2.9 2.9l-2.9 -2.9zM946 486.1l2.9 2.9l-2.9 2.9l-2.9 -2.9zM946.1 484l2.9 2.9l-2.9 2.9l-2.9 -2.9zM946.3 481.9l2.9 2.9l-2.9 2.9l-2.9 -2.9zM946.4 479.8l2.9 2.9l-2.9 2.9l-2.9 -2.9zM946.6 477.7l2.9 2.9l-2.9 2.9l-2.9 -2.9zM946.8 475.5l2.9 2.9l-2.9 2.9l-2.9 -2.9zM946.9 473.4l2.9 2.9l-2.9 2.9l-2.9 -2.9zM947.1 471.3l2.9 2.9l-2.9 2.9l-2.9 -2.9zM947.2 469.2l2.9 2.9l-2.9 2.9l-2.9 -2.9zM947.4 467.1l2.9 2.9l-2.9 2.9l-2.9 -2.9zM947.5 465l2.9 2.9l-2.9 2.9l-2.9 -2.9zM947.7 462.8l2.9 2.9l-2.9 2.9l-2.9 -2.9zM947.8 460.7l2.9 2.9l-2.9 2.9l-2.9 -2.9zM948 458.6l2.9 2.9l-2.9 2.9l-2.9 -2.9zM948.2 458.6l2.9 2.9l-2.9 2.9l-2.9 -2.9zM948.4 460.8l2.9 2.9l-2.9 2.9l-2.9 -2.9zM948.5 462.9l2.9 2.9l-2.9 2.9l-2.9 -2.9zM948.7 465.1l2.9 2.9l-2.9 2.9l-2.9 -2.9zM948.8 467.2l2.9 2.9l-2.9 2.9l-2.9 -2.9zM949 469.4l2.9 2.9l-2.9 2.9l-2.9 -2.9zM949.1 471.5l2.9 2.9l-2.9 2.9l-2.9 -2.9zM949.3 473.7l2.9 2.9l-2.9 2.9l-2.9 -2.9zM949.4 475.8l2.9 2.9l-2.9 2.9l-2.9 -2.9zM949.6 478l2.9 2.9l-2.9 2.9l-2.9 -2.9zM949.8 480.1l2.9 2.9l-2.9 2.9l-2.9 -2.9zM949.9 482.3l2.9 2.9l-2.9 2.9l-2.9 -2.9zM950.1 484.4l2.9 2.9l-2.9 2.9l-2.9 -2.9zM950.2 486.6l2.9 2.9l-2.9 2.9l-2.9 -2.9zM950.4 488.7l2.9 2.9l-2.9 2.9l-2.9 -2.9zM950.5 490.9l2.9 2.9l-2.9 2.9l-2.9 -2.9zM950.7 493l2.9 2.9l-2.9 2.9l-2.9 -2.9zM950.8 495.2l2.9 2.9l-2.9 2.9l-2.9 -2.9zM951 497.3l2.9 2.9l-2.9 2.9l-2.9 -2.9zM966.2 496.7l2.9 2.9l-2.9 2.9l-2.9 -2.9zM966.4 494.6l2.9 2.9l-2.9 2.9l-2.9 -2.9zM966.5 492.5l2.9 2.9l-2.9 2.9l-2.9 -2.9zM966.7 490.4l2.9 2.9l-2.9 2.9l-2.9 -2.9zM966.9 488.3l2.9 2.9l-2.9 2.9l-2.9 -2.9zM967 486.2l2.9 2.9l-2.9 2.9l-2.9 -2.9zM967.2 484.1l2.9 2.9l-2.9 2.9l-2.9 -2.9zM967.4 482.1l2.9 2.9l-2.9 2.9l-2.9 -2.9zM967.5 480l2.9 2.9l-2.9 2.9l-2.9 -2.9zM967.7 477.9l2.9 2.9l-2.9 2.9l-2.9 -2.9zM967.8 475.8l2.9 2.9l-2.9 2.9l-2.9 -2.9zM968 473.7l2.9 2.9l-2.9 2.9l-2.9 -2.9zM968.2 471.6l2.9 2.9l-2.9 2.9l-2.9 -2.9zM968.3 469.5l2.9 2.9l-2.9 2.9l-2.9 -2.9zM968.5 467.4l2.9 2.9l-2.9 2.9l-2.9 -2.9zM968.7 465.3l2.9 2.9l-2.9 2.9l-2.9 -2.9zM968.8 463.2l2.9 2.9l-2.9 2.9l-2.9 -2.9zM969 461.1l2.9 2.9l-2.9 2.9l-2.9 -2.9zM1034 458.6l2.9 2.9l-2.9 2.9l-2.9 -2.9zM1034.2 460.7l2.9 2.9l-2.9 2.9l-2.9 -2.9zM1034.3 462.8l2.9 2.9l-2.9 2.9l-2.9 -2.9zM1034.5 464.8l2.9 2.9l-2.9 2.9l-2.9 -2.9zM1034.6 466.9l2.9 2.9l-2.9 2.9l-2.9 -2.9zM1034.8 469l2.9 2.9l-2.9 2.9l-2.9 -2.9zM1034.9 471.1l2.9 2.9l-2.9 2.9l-2.9 -2.9zM1035.1 473.2l2.9 2.9l-2.9 2.9l-2.9 -2.9zM1035.2 475.3l2.9 2.9l-2.9 2.9l-2.9 -2.9zM1035.4 477.3l2.9 2.9l-2.9 2.9l-2.9 -2.9zM1035.6 479.4l2.9 2.9l-2.9 2.9l-2.9 -2.9zM1035.7 481.5l2.9 2.9l-2.9 2.9l-2.9 -2.9zM1035.9 483.6l2.9 2.9l-2.9 2.9l-2.9 -2.9zM1036 485.7l2.9 2.9l-2.9 2.9l-2.9 -2.9zM1036.2 487.7l2.9 2.9l-2.9 2.9l-2.9 -2.9zM1036.3 489.8l2.9 2.9l-2.9 2.9l-2.9 -2.9zM1036.5 491.9l2.9 2.9l-2.9 2.9l-2.9 -2.9zM1036.6 494l2.9 2.9l-2.9 2.9l-2.9 -2.9zM1036.8 496.1l2.9 2.9l-2.9 2.9l-2.9 -2.9zM1052.4 496.1l2.9 2.9l-2.9 2.9l-2.9 -2.9zM1052.6 494l2.9 2.9l-2.9 2.9l-2.9 -2.9zM1052.7 491.9l2.9 2.9l-2.9 2.9l-2.9 -2.9zM1052.9 489.8l2.9 2.9l-2.9 2.9l-2.9 -2.9zM1053.1 487.7l2.9 2.9l-2.9 2.9l-2.9 -2.9zM1053.2 485.7l2.9 2.9l-2.9 2.9l-2.9 -2.9zM1053.4 483.6l2.9 2.9l-2.9 2.9l-2.9 -2.9zM1053.6 481.5l2.9 2.9l-2.9 2.9l-2.9 -2.9zM1053.7 479.4l2.9 2.9l-2.9 2.9l-2.9 -2.9zM1053.9 477.3l2.9 2.9l-2.9 2.9l-2.9 -2.9zM1054.1 475.3l2.9 2.9l-2.9 2.9l-2.9 -2.9zM1054.2 473.2l2.9 2.9l-2.9 2.9l-2.9 -2.9zM1054.4 471.1l2.9 2.9l-2.9 2.9l-2.9 -2.9zM1054.6 469l2.9 2.9l-2.9 2.9l-2.9 -2.9zM1054.7 466.9l2.9 2.9l-2.9 2.9l-2.9 -2.9zM1054.9 464.8l2.9 2.9l-2.9 2.9l-2.9 -2.9zM1055.1 462.8l2.9 2.9l-2.9 2.9l-2.9 -2.9zM1055.2 460.7l2.9 2.9l-2.9 2.9l-2.9 -2.9zM1055.4 458.6l2.9 2.9l-2.9 2.9l-2.9 -2.9zM1121 462.7l2.9 2.9l-2.9 2.9l-2.9 -2.9zM1121 467.7l2.9 2.9l-2.9 2.9l-2.9 -2.9zM1121 472.7l2.9 2.9l-2.9 2.9l-2.9 -2.9zM1121 477.1l2.9 2.9l-2.9 2.9l-2.9 -2.9zM1121 480.5l2.9 2.9l-2.9 2.9l-2.9 -2.9zM1121 483.7l2.9 2.9l-2.9 2.9l-2.9 -2.9z" fill="#00008b"/>
<path d="M927.4 470.7l2.9 2.9l-2.9 2.9l-2.9 -2.9zM948.2 471.1l2.9 2.9l-2.9 2.9l-2.9 -2.9zM969 471.1l2.9 2.9l-2.9 2.9l-2.9 -2.9zM1034.8 467.6l2.9 2.9l-2.9 2.9l-2.9 -2.9zM1054.8 469.6l2.9 2.9l-2.9 2.9l-2.9 -2.9z" fill="#0a5ae6"/>
<path d="M968.6 463.1l2.9 2.9l-2.9 2.9l-2.9 -2.9zM1034.6 463.1l2.9 2.9l-2.9 2.9l-2.9 -2.9z" fill="#0030b0"/>
<path d="M1121 181.7l2.9 2.9l-2.9 2.9l-2.9 -2.9z" fill="#cd5500"/>
<path d="M1121 186.5l2.9 2.9l-2.9 2.9l-2.9 -2.9z" fill="#cd5500"/>
<path d="M1121 191.5l2.9 2.9l-2.9 2.9l-2.9 -2.9z" fill="#cd5500"/>
<path d="M1121 195.1l2.9 2.9l-2.9 2.9l-2.9 -2.9z" fill="#cd5500"/>
<path d="M1121 198.5l2.9 2.9l-2.9 2.9l-2.9 -2.9z" fill="#d56000"/>
<path d="M1121 201.5l2.9 2.9l-2.9 2.9l-2.9 -2.9z" fill="#e67800"/>
<path d="M1121 204.1l2.9 2.9l-2.9 2.9l-2.9 -2.9z" fill="#f59600"/>
<path d="M1121 206.5l2.9 2.9l-2.9 2.9l-2.9 -2.9z" fill="#ffb400"/>
<path d="M1121 320.7l2.9 2.9l-2.9 2.9l-2.9 -2.9z" fill="#78e600"/>
<path d="M1121 325.5l2.9 2.9l-2.9 2.9l-2.9 -2.9z" fill="#f0f000"/>
<path d="M1121 330.3l2.9 2.9l-2.9 2.9l-2.9 -2.9z" fill="#f5e600"/>
<path d="M1121 335.1l2.9 2.9l-2.9 2.9l-2.9 -2.9z" fill="#ffc800"/>
<path d="M1121 341.5l2.9 2.9l-2.9 2.9l-2.9 -2.9z" fill="#be3200"/>
<path d="M1121 345.3l2.9 2.9l-2.9 2.9l-2.9 -2.9z" fill="#d25a00"/>
<path d="M1034 321.1l2.9 2.9l-2.9 2.9l-2.9 -2.9zM1034.2 323.6l2.9 2.9l-2.9 2.9l-2.9 -2.9zM1034.5 326.1l2.9 2.9l-2.9 2.9l-2.9 -2.9zM1055.2 321.1l2.9 2.9l-2.9 2.9l-2.9 -2.9zM1055 323.6l2.9 2.9l-2.9 2.9l-2.9 -2.9zM1054.8 326.1l2.9 2.9l-2.9 2.9l-2.9 -2.9zM1054.6 328.6l2.9 2.9l-2.9 2.9l-2.9 -2.9z" fill="#b4f000"/>
<rect x="1129.5" y="190.5" width="4" height="115" fill="url(#gv)" stroke="#000" stroke-width="1" shape-rendering="crispEdges"/>
<text x="1137.6" y="207.9">25</text>
<text x="1137.6" y="230.9">20</text>
<text x="1137.6" y="253.9">15</text>
<text x="1137.6" y="276.9">10</text>
<text x="1137.6" y="299.9">5</text>
<path class="ax" d="M1127 204.5h3M1133 204.5h1M1127 227.5h3M1133 227.5h1M1127 250.5h3M1133 250.5h1M1127 273.5h3M1133 273.5h1M1127 296.5h3M1133 296.5h1"/>
<text transform="translate(1164,249) rotate(-90)" text-anchor="middle" textLength="90" lengthAdjust="spacingAndGlyphs">temperature (°C)</text>
<rect x="1129.5" y="329.5" width="4" height="115" fill="url(#gv)" stroke="#000" stroke-width="1" shape-rendering="crispEdges"/>
<text x="1137.6" y="356.9">35.5</text>
<text x="1137.6" y="392.9">35</text>
<text x="1137.6" y="428.9">34.5</text>
<path class="ax" d="M1127 353.5h3M1133 353.5h1M1127 389.5h3M1133 389.5h1M1127 425.5h3M1133 425.5h1"/>
<text transform="translate(1175,388) rotate(-90)" text-anchor="middle" textLength="37" lengthAdjust="spacingAndGlyphs">salinity</text>
<rect x="1129.5" y="468.5" width="4" height="114" fill="url(#gv)" stroke="#000" stroke-width="1" shape-rendering="crispEdges"/>
<text x="1137.6" y="471.9">2</text>
<text x="1137.6" y="499.9">1.5</text>
<text x="1137.6" y="528.9">1</text>
<text x="1137.6" y="556.9">0.5</text>
<text x="1137.6" y="584.9">0</text>
<path class="ax" d="M1127 468.5h3M1133 468.5h1M1127 496.5h3M1133 496.5h1M1127 525.5h3M1133 525.5h1M1127 553.5h3M1133 553.5h1M1127 581.5h3M1133 581.5h1"/>
<text transform="translate(1168,526.5) rotate(-90)" text-anchor="middle" textLength="77" lengthAdjust="spacingAndGlyphs">chl-a (mg m-3)</text>
<rect x="1129.5" y="606.5" width="4" height="115" fill="url(#gv)" stroke="#000" stroke-width="1" shape-rendering="crispEdges"/>
<text x="1137.6" y="625.9">150</text>
<text x="1137.6" y="664.9">100</text>
<text x="1137.6" y="703.9">50</text>
<path class="ax" d="M1127 622.5h3M1133 622.5h1M1127 661.5h3M1133 661.5h1M1127 700.5h3M1133 700.5h1"/>
<text transform="translate(1172,665.7) rotate(-90)" text-anchor="middle" textLength="92" lengthAdjust="spacingAndGlyphs">Ox. sat. ratio (%)</text>
<text transform="translate(1189.5,727) rotate(-90)" textLength="324" lengthAdjust="spacingAndGlyphs" style="white-space:pre">© IMOS 15-Feb-2019 05:57:48 Hobart time. QC flags 1  2</text>
</svg></body></html>
